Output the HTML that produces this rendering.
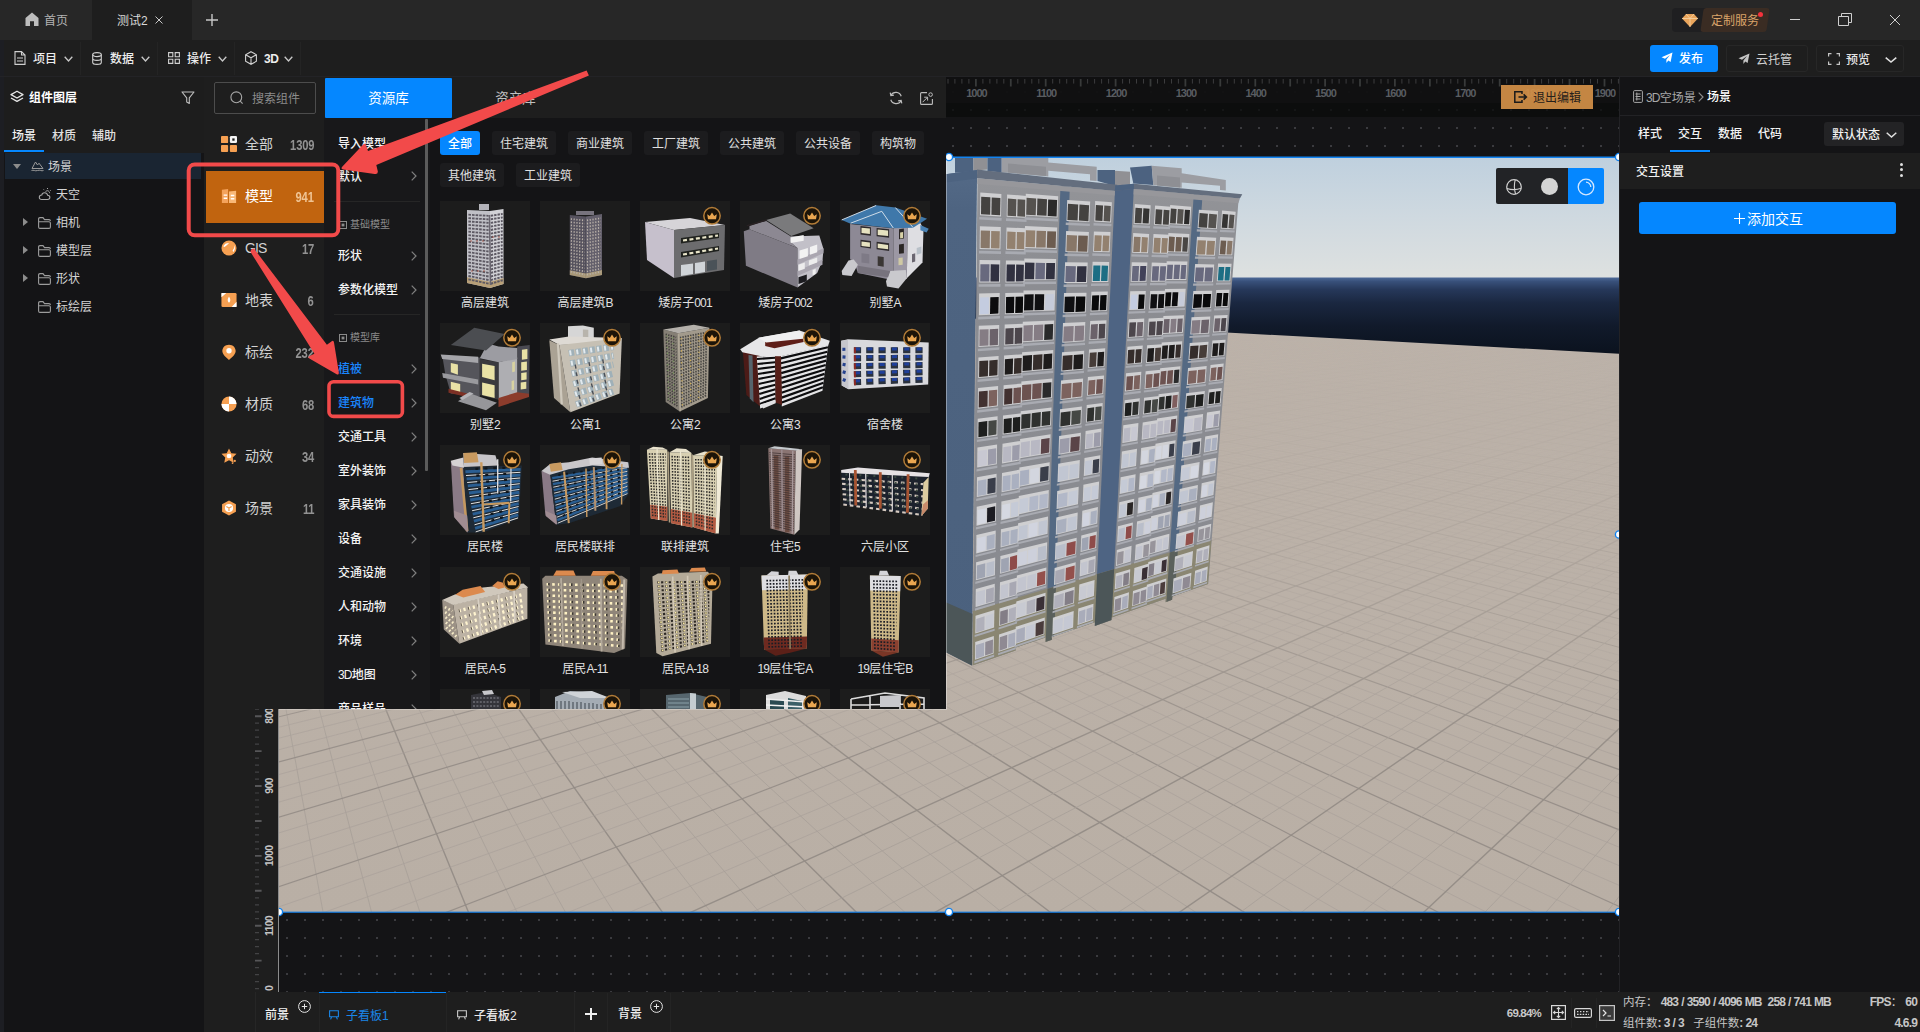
<!DOCTYPE html>
<html lang="zh-CN"><head><meta charset="utf-8"><title>测试2</title>
<style>
*{box-sizing:border-box;margin:0;padding:0}
html,body{width:1920px;height:1032px;overflow:hidden;background:#141416;}
body{font-family:"Liberation Sans","Noto Sans CJK SC",sans-serif;font-size:12px;color:#e6e6e6;position:relative;-webkit-font-smoothing:antialiased}
div{position:absolute}
.t{white-space:nowrap}
svg{overflow:visible}
.n{letter-spacing:-0.8px}
.s{font-weight:700;font-size:12px;letter-spacing:-0.85px;word-spacing:0.5px}
</style></head>
<body>
<div style="left:255px;top:77px;width:1364px;height:915px;background-color:#141416;background-image:radial-gradient(circle, #3c3c40 0.7px, rgba(0,0,0,0) 1.1px);background-size:18px 18px;background-position:5px 6px"></div>
<svg style="position:absolute;left:0;top:0" width="1920" height="1032" viewBox="0 0 1920 1032"><defs><linearGradient id="sky" x1="0" y1="0" x2="0" y2="1"><stop offset="0" stop-color="#bfd0de"/><stop offset="0.5" stop-color="#cfd9e0"/><stop offset="1" stop-color="#dee1e0"/></linearGradient><linearGradient id="sea" x1="0" y1="0" x2="0" y2="1"><stop offset="0" stop-color="#4e6a98"/><stop offset="0.05" stop-color="#38507a"/><stop offset="0.15" stop-color="#26385a"/><stop offset="0.32" stop-color="#1a2740"/><stop offset="0.6" stop-color="#111a2b"/><stop offset="1" stop-color="#0a111c"/></linearGradient><linearGradient id="gnd" x1="0" y1="0" x2="0" y2="1"><stop offset="0" stop-color="#bdb3aa"/><stop offset="1" stop-color="#b9afa5"/></linearGradient><clipPath id="sc"><rect x="279" y="157" width="1340" height="755"/></clipPath></defs><g clip-path="url(#sc)"><rect x="279" y="157" width="1340" height="121" fill="url(#sky)"/><rect x="279" y="277.5" width="1340" height="80" fill="url(#sea)"/><polygon points="279.0,281.0 1620.0,353.8 1620.0,913.0 279.0,913.0" fill="url(#gnd)"/><clipPath id="gc"><polygon points="279.0,282.0 1620.0,354.8 1620.0,913.0 279.0,913.0" fill="#000"/></clipPath><linearGradient id="gm" gradientUnits="userSpaceOnUse" x1="0" y1="320" x2="0" y2="760"><stop offset="0" stop-color="#fff" stop-opacity="0.02"/><stop offset="0.2" stop-color="#fff" stop-opacity="0.09"/><stop offset="0.45" stop-color="#fff" stop-opacity="0.25"/><stop offset="0.7" stop-color="#fff" stop-opacity="0.55"/><stop offset="1" stop-color="#fff" stop-opacity="1"/></linearGradient><mask id="gk" maskUnits="userSpaceOnUse" x="279" y="300" width="1340" height="620"><rect x="279" y="300" width="1340" height="620" fill="url(#gm)"/></mask><g clip-path="url(#gc)"><g mask="url(#gk)"><path d="M208.7 300.0L274.7 913.5M218.9 300.0L469.0 913.5M229.1 300.0L663.3 913.5M239.3 300.0L857.6 913.5M249.5 300.0L1051.9 913.5M259.7 300.0L1246.2 913.5" stroke="#938c86" stroke-width="1.4" stroke-opacity="0.95" fill="none"/><path d="M211.2 300.0L323.3 913.5M213.8 300.0L371.9 913.5M216.3 300.0L420.4 913.5M221.4 300.0L517.6 913.5M224.0 300.0L566.2 913.5M226.5 300.0L614.7 913.5M231.6 300.0L711.9 913.5M234.2 300.0L760.5 913.5M236.7 300.0L809.0 913.5M241.8 300.0L906.2 913.5M244.4 300.0L954.8 913.5M246.9 300.0L1003.3 913.5M252.0 300.0L1100.5 913.5M254.6 300.0L1149.1 913.5M257.1 300.0L1197.6 913.5M262.2 300.0L1294.8 913.5" stroke="#a8a099" stroke-width="1.0" stroke-opacity="0.85" fill="none"/><path d="M264.8 300.0L1343.4 913.5M267.3 300.0L1391.9 913.5M272.4 300.0L1489.1 913.5M275.0 300.0L1537.7 913.5M277.5 300.0L1586.2 913.5M282.6 300.0L1683.4 913.5M285.2 300.0L1732.0 913.5M287.7 300.0L1780.5 913.5M292.8 300.0L1877.7 913.5M295.4 300.0L1926.3 913.5M297.9 300.0L1974.8 913.5M303.0 300.0L2072.0 913.5M305.6 300.0L2120.6 913.5M308.1 300.0L2169.1 913.5M313.2 300.0L2266.3 913.5M315.8 300.0L2314.9 913.5M318.3 300.0L2363.4 913.5" stroke="#a8a099" stroke-width="0.9" stroke-opacity="0.75" fill="none"/><path d="M269.9 300.0L1440.5 913.5M280.1 300.0L1634.8 913.5M290.3 300.0L1829.1 913.5M300.5 300.0L2023.4 913.5M310.7 300.0L2217.7 913.5M320.9 300.0L2412.0 913.5" stroke="#938c86" stroke-width="1.2" stroke-opacity="0.9" fill="none"/><path d="M323.4 300.0L2460.6 913.5M326.0 300.0L2509.2 913.5M328.5 300.0L2557.7 913.5M333.6 300.0L2654.9 913.5M336.2 300.0L2703.5 913.5M338.7 300.0L2752.0 913.5M343.8 300.0L2849.2 913.5M346.4 300.0L2897.8 913.5M348.9 300.0L2946.3 913.5M354.0 300.0L3043.5 913.5M356.6 300.0L3092.1 913.5M359.1 300.0L3140.6 913.5M364.3 300.0L3237.8 913.5M366.8 300.0L3286.4 913.5M369.4 300.0L3334.9 913.5M374.5 300.0L3432.1 913.5M377.0 300.0L3480.7 913.5M379.6 300.0L3529.2 913.5M384.7 300.0L3626.4 913.5M387.2 300.0L3675.0 913.5M389.8 300.0L3723.5 913.5M394.9 300.0L3820.7 913.5M397.4 300.0L3869.3 913.5M400.0 300.0L3917.8 913.5M405.1 300.0L4015.0 913.5M407.6 300.0L4063.6 913.5M410.2 300.0L4112.1 913.5M415.3 300.0L4209.3 913.5M417.8 300.0L4257.9 913.5M420.4 300.0L4306.4 913.5M425.5 300.0L4403.6 913.5" stroke="#a8a099" stroke-width="0.8" stroke-opacity="0.6" fill="none"/><path d="M331.1 300.0L2606.3 913.5M341.3 300.0L2800.6 913.5M351.5 300.0L2994.9 913.5M361.7 300.0L3189.2 913.5M371.9 300.0L3383.5 913.5M382.1 300.0L3577.8 913.5M392.3 300.0L3772.1 913.5M402.5 300.0L3966.4 913.5M412.7 300.0L4160.7 913.5M422.9 300.0L4355.0 913.5" stroke="#938c86" stroke-width="1.0" stroke-opacity="0.8" fill="none"/><path d="M428.0 300.0L4452.2 913.5M430.6 300.0L4500.7 913.5M435.7 300.0L4597.9 913.5M438.2 300.0L4646.5 913.5M440.8 300.0L4695.0 913.5M445.9 300.0L4792.2 913.5M448.4 300.0L4840.8 913.5M451.0 300.0L4889.3 913.5M456.1 300.0L4986.5 913.5M458.6 300.0L5035.1 913.5M461.2 300.0L5083.6 913.5M466.3 300.0L5180.8 913.5M468.8 300.0L5229.4 913.5M471.4 300.0L5277.9 913.5M476.5 300.0L5375.1 913.5M479.0 300.0L5423.7 913.5M481.6 300.0L5472.2 913.5M486.7 300.0L5569.4 913.5M489.2 300.0L5618.0 913.5M491.8 300.0L5666.5 913.5M496.9 300.0L5763.7 913.5M499.4 300.0L5812.3 913.5M502.0 300.0L5860.8 913.5M507.1 300.0L5958.0 913.5M509.6 300.0L6006.6 913.5M512.2 300.0L6055.1 913.5M517.3 300.0L6152.3 913.5M519.8 300.0L6200.9 913.5M522.4 300.0L6249.4 913.5M527.5 300.0L6346.6 913.5M530.0 300.0L6395.2 913.5M532.6 300.0L6443.7 913.5" stroke="#a8a099" stroke-width="0.7" stroke-opacity="0.4" fill="none"/><path d="M433.1 300.0L4549.3 913.5M443.3 300.0L4743.6 913.5M453.5 300.0L4937.9 913.5M463.7 300.0L5132.2 913.5M473.9 300.0L5326.5 913.5M484.1 300.0L5520.8 913.5M494.3 300.0L5715.1 913.5M504.5 300.0L5909.4 913.5M514.7 300.0L6103.7 913.5M524.9 300.0L6298.0 913.5M535.1 300.0L6492.3 913.5M545.3 300.0L6686.6 913.5M555.6 300.0L6880.9 913.5M565.8 300.0L7075.2 913.5M576.0 300.0L7269.5 913.5M586.2 300.0L7463.8 913.5M596.4 300.0L7658.1 913.5M606.6 300.0L7852.4 913.5M616.8 300.0L8046.7 913.5M627.0 300.0L8241.0 913.5M637.2 300.0L8435.3 913.5M647.4 300.0L8629.6 913.5M657.6 300.0L8823.9 913.5M667.8 300.0L9018.2 913.5M678.0 300.0L9212.5 913.5M688.2 300.0L9406.8 913.5M698.4 300.0L9601.1 913.5M708.6 300.0L9795.4 913.5M718.8 300.0L9989.7 913.5M729.0 300.0L10184.0 913.5M739.2 300.0L10378.3 913.5M749.4 300.0L10572.6 913.5M759.6 300.0L10766.9 913.5M769.8 300.0L10961.2 913.5M780.0 300.0L11155.5 913.5M790.2 300.0L11349.8 913.5M800.4 300.0L11544.1 913.5M810.6 300.0L11738.4 913.5M820.8 300.0L11932.7 913.5M831.0 300.0L12127.0 913.5M841.2 300.0L12321.3 913.5M851.4 300.0L12515.6 913.5M861.6 300.0L12709.9 913.5M871.8 300.0L12904.2 913.5M882.0 300.0L13098.5 913.5M892.2 300.0L13292.8 913.5M902.4 300.0L13487.1 913.5M912.6 300.0L13681.4 913.5M922.8 300.0L13875.7 913.5M933.0 300.0L14070.0 913.5M943.3 300.0L14264.3 913.5M953.5 300.0L14458.6 913.5M963.7 300.0L14652.9 913.5M973.9 300.0L14847.2 913.5M984.1 300.0L15041.5 913.5M994.3 300.0L15235.8 913.5M1004.5 300.0L15430.1 913.5M1014.7 300.0L15624.4 913.5M1024.9 300.0L15818.7 913.5M1035.1 300.0L16013.0 913.5M1045.3 300.0L16207.3 913.5M1055.5 300.0L16401.6 913.5M1065.7 300.0L16595.9 913.5M1075.9 300.0L16790.2 913.5M1086.1 300.0L16984.5 913.5M1096.3 300.0L17178.8 913.5M1106.5 300.0L17373.1 913.5M1116.7 300.0L17567.4 913.5M1126.9 300.0L17761.7 913.5M1137.1 300.0L17956.0 913.5M1147.3 300.0L18150.3 913.5M1157.5 300.0L18344.6 913.5M1167.7 300.0L18538.9 913.5M1177.9 300.0L18733.2 913.5M1188.1 300.0L18927.5 913.5M1198.3 300.0L19121.8 913.5M1208.5 300.0L19316.1 913.5M1218.7 300.0L19510.4 913.5M1228.9 300.0L19704.7 913.5" stroke="#938c86" stroke-width="0.9" stroke-opacity="0.7" fill="none"/><path d="M1173.3 300.0L-23544.1 913.5M1182.2 300.0L-23299.3 913.5M1191.0 300.0L-23054.5 913.5M1199.9 300.0L-22809.8 913.5M1208.7 300.0L-22565.0 913.5M1217.6 300.0L-22320.2 913.5M1226.4 300.0L-22075.5 913.5M1235.3 300.0L-21830.7 913.5M1244.1 300.0L-21585.9 913.5M1253.0 300.0L-21341.2 913.5M1261.8 300.0L-21096.4 913.5M1270.6 300.0L-20851.6 913.5M1279.5 300.0L-20606.8 913.5M1288.3 300.0L-20362.1 913.5M1297.2 300.0L-20117.3 913.5M1306.0 300.0L-19872.5 913.5M1314.9 300.0L-19627.8 913.5M1323.7 300.0L-19383.0 913.5M1332.6 300.0L-19138.2 913.5M1341.4 300.0L-18893.5 913.5M1350.2 300.0L-18648.7 913.5M1359.1 300.0L-18403.9 913.5M1367.9 300.0L-18159.2 913.5M1376.8 300.0L-17914.4 913.5M1385.6 300.0L-17669.6 913.5M1394.5 300.0L-17424.9 913.5M1403.3 300.0L-17180.1 913.5M1412.2 300.0L-16935.3 913.5M1421.0 300.0L-16690.5 913.5M1429.8 300.0L-16445.8 913.5M1438.7 300.0L-16201.0 913.5M1447.5 300.0L-15956.2 913.5M1456.4 300.0L-15711.5 913.5M1465.2 300.0L-15466.7 913.5M1474.1 300.0L-15221.9 913.5M1482.9 300.0L-14977.2 913.5M1491.8 300.0L-14732.4 913.5M1500.6 300.0L-14487.6 913.5M1509.4 300.0L-14242.9 913.5M1518.3 300.0L-13998.1 913.5M1527.1 300.0L-13753.3 913.5M1536.0 300.0L-13508.5 913.5M1544.8 300.0L-13263.8 913.5M1553.7 300.0L-13019.0 913.5M1562.5 300.0L-12774.2 913.5M1571.4 300.0L-12529.5 913.5M1580.2 300.0L-12284.7 913.5M1589.1 300.0L-12039.9 913.5M1597.9 300.0L-11795.2 913.5M1606.7 300.0L-11550.4 913.5M1615.6 300.0L-11305.6 913.5M1624.4 300.0L-11060.9 913.5M1633.3 300.0L-10816.1 913.5M1642.1 300.0L-10571.3 913.5M1651.0 300.0L-10326.5 913.5M1659.8 300.0L-10081.8 913.5M1668.7 300.0L-9837.0 913.5M1677.5 300.0L-9592.2 913.5M1686.3 300.0L-9347.5 913.5M1695.2 300.0L-9102.7 913.5M1704.0 300.0L-8857.9 913.5M1712.9 300.0L-8613.2 913.5M1721.7 300.0L-8368.4 913.5M1730.6 300.0L-8123.6 913.5M1739.4 300.0L-7878.9 913.5M1748.3 300.0L-7634.1 913.5M1757.1 300.0L-7389.3 913.5M1765.9 300.0L-7144.5 913.5M1774.8 300.0L-6899.8 913.5M1783.6 300.0L-6655.0 913.5M1792.5 300.0L-6410.2 913.5M1801.3 300.0L-6165.5 913.5M1810.2 300.0L-5920.7 913.5M1819.0 300.0L-5675.9 913.5M1827.9 300.0L-5431.2 913.5M1836.7 300.0L-5186.4 913.5M1845.6 300.0L-4941.6 913.5M1854.4 300.0L-4696.9 913.5M1863.2 300.0L-4452.1 913.5M1872.1 300.0L-4207.3 913.5M1880.9 300.0L-3962.5 913.5M1889.8 300.0L-3717.8 913.5M1898.6 300.0L-3473.0 913.5" stroke="#938c86" stroke-width="0.9" stroke-opacity="0.7" fill="none"/><path d="M1808.0 300.0L-5981.9 913.5M1812.4 300.0L-5859.5 913.5M1814.6 300.0L-5798.3 913.5M1816.8 300.0L-5737.1 913.5M1821.2 300.0L-5614.7 913.5M1823.4 300.0L-5553.5 913.5M1825.6 300.0L-5492.4 913.5M1830.1 300.0L-5370.0 913.5M1832.3 300.0L-5308.8 913.5M1834.5 300.0L-5247.6 913.5M1838.9 300.0L-5125.2 913.5M1841.1 300.0L-5064.0 913.5M1843.3 300.0L-5002.8 913.5M1847.8 300.0L-4880.4 913.5M1850.0 300.0L-4819.2 913.5M1852.2 300.0L-4758.0 913.5M1856.6 300.0L-4635.7 913.5M1858.8 300.0L-4574.5 913.5M1861.0 300.0L-4513.3 913.5M1865.5 300.0L-4390.9 913.5M1867.7 300.0L-4329.7 913.5M1869.9 300.0L-4268.5 913.5M1874.3 300.0L-4146.1 913.5M1876.5 300.0L-4084.9 913.5M1878.7 300.0L-4023.7 913.5M1883.1 300.0L-3901.4 913.5M1885.4 300.0L-3840.2 913.5M1887.6 300.0L-3779.0 913.5M1892.0 300.0L-3656.6 913.5M1894.2 300.0L-3595.4 913.5M1896.4 300.0L-3534.2 913.5M1900.8 300.0L-3411.8 913.5M1903.0 300.0L-3350.6 913.5" stroke="#a8a099" stroke-width="0.7" stroke-opacity="0.4" fill="none"/><path d="M1905.3 300.0L-3289.4 913.5M1909.7 300.0L-3167.1 913.5M1911.9 300.0L-3105.9 913.5M1914.1 300.0L-3044.7 913.5M1918.5 300.0L-2922.3 913.5M1920.7 300.0L-2861.1 913.5M1922.9 300.0L-2799.9 913.5M1927.4 300.0L-2677.5 913.5M1929.6 300.0L-2616.3 913.5M1931.8 300.0L-2555.1 913.5M1936.2 300.0L-2432.7 913.5M1938.4 300.0L-2371.6 913.5M1940.6 300.0L-2310.4 913.5M1945.1 300.0L-2188.0 913.5M1947.3 300.0L-2126.8 913.5M1949.5 300.0L-2065.6 913.5M1953.9 300.0L-1943.2 913.5M1956.1 300.0L-1882.0 913.5M1958.3 300.0L-1820.8 913.5M1962.7 300.0L-1698.4 913.5M1965.0 300.0L-1637.2 913.5M1967.2 300.0L-1576.1 913.5M1971.6 300.0L-1453.7 913.5M1973.8 300.0L-1392.5 913.5M1976.0 300.0L-1331.3 913.5M1980.4 300.0L-1208.9 913.5M1982.6 300.0L-1147.7 913.5M1984.9 300.0L-1086.5 913.5M1989.3 300.0L-964.1 913.5M1991.5 300.0L-902.9 913.5M1993.7 300.0L-841.7 913.5" stroke="#a8a099" stroke-width="0.8" stroke-opacity="0.6" fill="none"/><path d="M1907.5 300.0L-3228.2 913.5M1916.3 300.0L-2983.5 913.5M1925.2 300.0L-2738.7 913.5M1934.0 300.0L-2493.9 913.5M1942.8 300.0L-2249.2 913.5M1951.7 300.0L-2004.4 913.5M1960.5 300.0L-1759.6 913.5M1969.4 300.0L-1514.9 913.5M1978.2 300.0L-1270.1 913.5M1987.1 300.0L-1025.3 913.5" stroke="#938c86" stroke-width="1.0" stroke-opacity="0.8" fill="none"/><path d="M1995.9 300.0L-780.6 913.5M2004.8 300.0L-535.8 913.5M2013.6 300.0L-291.0 913.5M2022.4 300.0L-46.2 913.5M2031.3 300.0L198.5 913.5M2040.1 300.0L443.3 913.5" stroke="#938c86" stroke-width="1.2" stroke-opacity="0.9" fill="none"/><path d="M1998.1 300.0L-719.4 913.5M2000.3 300.0L-658.2 913.5M2002.5 300.0L-597.0 913.5M2007.0 300.0L-474.6 913.5M2009.2 300.0L-413.4 913.5M2011.4 300.0L-352.2 913.5M2015.8 300.0L-229.8 913.5M2018.0 300.0L-168.6 913.5M2020.2 300.0L-107.4 913.5M2024.7 300.0L14.9 913.5M2026.9 300.0L76.1 913.5M2029.1 300.0L137.3 913.5M2033.5 300.0L259.7 913.5M2035.7 300.0L320.9 913.5M2037.9 300.0L382.1 913.5M2042.3 300.0L504.5 913.5M2044.6 300.0L565.7 913.5M2046.8 300.0L626.9 913.5" stroke="#a8a099" stroke-width="0.9" stroke-opacity="0.75" fill="none"/><path d="M2049.0 300.0L688.1 913.5M2057.8 300.0L932.8 913.5M2066.7 300.0L1177.6 913.5M2075.5 300.0L1422.4 913.5" stroke="#938c86" stroke-width="1.4" stroke-opacity="0.95" fill="none"/><path d="M2051.2 300.0L749.3 913.5M2053.4 300.0L810.4 913.5M2055.6 300.0L871.6 913.5M2060.0 300.0L994.0 913.5M2062.2 300.0L1055.2 913.5M2064.5 300.0L1116.4 913.5M2068.9 300.0L1238.8 913.5M2071.1 300.0L1300.0 913.5M2073.3 300.0L1361.2 913.5M2077.7 300.0L1483.6 913.5M2079.9 300.0L1544.8 913.5M2082.1 300.0L1605.9 913.5" stroke="#a8a099" stroke-width="1.0" stroke-opacity="0.85" fill="none"/></g></g><polygon points="955.0,157.0 973.3,157.0 973.3,171.7 955.0,172.8" fill="#4d6380"/><polygon points="973.3,157.0 987.5,157.0 987.5,169.5 973.3,170.8" fill="#909094"/><polygon points="987.5,157.0 1001.7,157.0 1001.7,172.5 987.5,171.0" fill="#4c6280"/><polygon points="1001.7,157.0 1048.3,157.0 1048.3,162.5 1096.7,166.7 1096.7,181.0 1090.0,180.4 1090.0,174.2 1048.3,170.8 1048.3,176.4 1009.0,172.8 1001.7,172.5" fill="#9c9da2"/><polygon points="1008.0,163.5 1046.0,166.8 1046.0,176.0 1008.0,172.6" fill="#8e8f94"/><polygon points="1097.5,170.0 1115.0,170.0 1115.0,186.0 1097.5,181.0" fill="#4d6380"/><polygon points="1115.0,170.8 1130.0,171.7 1130.0,184.0 1115.0,186.0" fill="#909094"/><polygon points="1130.0,167.5 1151.7,165.8 1153.3,185.0 1133.3,183.5" fill="#4c6280"/><polygon points="1151.7,165.8 1181.7,168.3 1181.7,173.3 1225.8,180.0 1225.8,190.4 1220.0,190.0 1220.0,185.8 1181.7,182.5 1181.7,187.8 1158.3,185.6 1153.3,185.0" fill="#9c9da2"/><polygon points="1157.0,175.5 1180.0,177.5 1180.0,187.6 1157.0,185.4" fill="#8e8f94"/><linearGradient id="sg" x1="0" y1="0" x2="0" y2="1"><stop offset="0" stop-color="#546a87"/><stop offset="0.08" stop-color="#4e6481"/><stop offset="1" stop-color="#4b617e"/></linearGradient><polygon points="940.0,175.1 977.1,170.0 971.9,665.5 940.0,649.3" fill="url(#sg)"/><polygon points="940.0,599.7 972.5,614.0 971.9,665.5 940.0,649.3" fill="#4c5658"/><polygon points="940.0,175.1 977.1,170.0 977.0,178.5 940.0,183.2" fill="#4d6380"/><linearGradient id="wg" x1="0" y1="0" x2="0" y2="1"><stop offset="0" stop-color="#939498"/><stop offset="0.2" stop-color="#8c8d92"/><stop offset="1" stop-color="#888a90"/></linearGradient><polygon points="977.5,178.5 1114.9,190.6 1115.1,187.1 1238.7,198.0 1208.2,584.1 1172.3,596.5 1172.1,599.8 1165.5,602.2 1165.7,598.8 1111.7,617.4 1111.6,620.0 1094.7,625.9 1094.9,622.3 1051.9,637.0 1051.8,639.8 1045.3,642.1 1045.5,637.4 1015.8,647.5 1015.7,650.4 972.4,665.4" fill="url(#wg)"/><clipPath id="fc"><polygon points="977.5,178.5 1114.9,190.6 1115.1,187.1 1238.7,198.0 1208.2,584.1 1172.3,596.5 1172.1,599.8 1165.5,602.2 1165.7,598.8 1111.7,617.4 1111.6,620.0 1094.7,625.9 1094.9,622.3 1051.9,637.0 1051.8,639.8 1045.3,642.1 1045.5,637.4 1015.8,647.5 1015.7,650.4 972.4,665.4" fill="#000"/></clipPath><g clip-path="url(#fc)"><polygon points="972.9,610.9 1211.7,540.1 1207.6,592.2 972.3,675.3" fill="#8a8672"/><polygon points="1116.1,165.7 1134.9,167.8 1114.2,569.0 1097.1,574.1" fill="#4e6483"/><polygon points="1097.1,574.1 1114.2,569.0 1111.3,626.2 1094.4,632.2" fill="#4c5658"/><polygon points="1061.3,159.5 1070.7,160.6 1056.0,586.3 1047.5,588.8" fill="#546983"/><polygon points="1047.5,588.8 1056.0,586.3 1053.9,646.5 1045.5,649.5" fill="#5a605c"/><polygon points="1195.1,174.6 1203.9,175.6 1177.9,550.2 1169.7,552.6" fill="#546983"/><polygon points="1169.7,552.6 1177.9,550.2 1174.1,604.0 1166.1,606.9" fill="#5a605c"/><polygon points="980.3,192.4 1001.4,194.0 1001.0,216.4 980.0,215.2" fill="#cfcfd1"/><polygon points="979.4,216.9 1001.6,218.0 1001.5,220.7 979.3,219.6" fill="#a9abb2"/><polygon points="981.2,196.7 990.4,197.3 990.2,214.8 981.0,214.2" fill="#444240"/><polygon points="991.7,197.4 1000.4,198.0 1000.1,215.3 991.4,214.8" fill="#444240"/><polygon points="1007.1,194.4 1026.5,195.9 1026.0,217.7 1006.7,216.7" fill="#cfcfd1"/><polygon points="1006.0,218.3 1026.5,219.4 1026.5,222.0 1006.0,220.9" fill="#a9abb2"/><polygon points="1007.9,198.6 1016.4,199.2 1016.0,216.2 1007.6,215.7" fill="#55524f"/><polygon points="1017.6,199.3 1025.4,199.8 1025.1,216.7 1017.3,216.3" fill="#55524f"/><polygon points="1025.8,193.7 1058.2,196.2 1057.5,217.4 1025.3,215.6" fill="#cfcfd1"/><polygon points="1024.6,217.2 1058.1,219.0 1058.0,221.5 1024.6,219.8" fill="#a9abb2"/><polygon points="1026.6,197.8 1036.2,198.5 1035.7,215.2 1026.2,214.7" fill="#55524f"/><polygon points="1037.4,198.6 1047.0,199.3 1046.5,215.8 1037.0,215.3" fill="#444240"/><polygon points="1048.2,199.4 1057.1,200.1 1056.6,216.4 1047.7,215.9" fill="#2b2a2a"/><polygon points="1067.2,199.9 1090.2,201.6 1089.3,222.1 1066.5,220.9" fill="#cfcfd1"/><polygon points="1065.8,222.4 1089.9,223.7 1089.8,226.1 1065.7,224.9" fill="#a9abb2"/><polygon points="1068.0,203.8 1078.2,204.5 1077.6,220.6 1067.4,220.0" fill="#444240"/><polygon points="1079.5,204.6 1089.1,205.3 1088.4,221.2 1078.9,220.6" fill="#444240"/><polygon points="1095.2,201.1 1111.9,202.3 1111.0,222.4 1094.3,221.5" fill="#cfcfd1"/><polygon points="1093.6,223.0 1111.5,223.9 1111.4,226.3 1093.5,225.4" fill="#a9abb2"/><polygon points="1095.9,204.9 1103.1,205.4 1102.4,221.0 1095.3,220.6" fill="#444240"/><polygon points="1104.3,205.5 1110.8,206.0 1110.1,221.5 1103.6,221.1" fill="#55524f"/><polygon points="1134.8,204.0 1150.7,205.2 1149.6,224.6 1133.7,223.7" fill="#cfcfd1"/><polygon points="1133.0,225.1 1150.1,226.0 1150.0,228.3 1132.9,227.4" fill="#a9abb2"/><polygon points="1135.5,207.7 1142.2,208.2 1141.4,223.2 1134.7,222.9" fill="#444240"/><polygon points="1143.4,208.3 1149.5,208.8 1148.7,223.6 1142.6,223.3" fill="#353433"/><polygon points="1155.1,205.6 1170.8,206.8 1169.6,225.7 1154.0,224.8" fill="#cfcfd1"/><polygon points="1153.3,226.2 1170.1,227.1 1170.0,229.3 1153.2,228.5" fill="#a9abb2"/><polygon points="1155.8,209.2 1162.4,209.7 1161.5,224.4 1155.0,224.0" fill="#444240"/><polygon points="1163.7,209.8 1169.6,210.2 1168.7,224.8 1162.8,224.4" fill="#444240"/><polygon points="1170.2,205.1 1191.2,206.7 1190.0,225.2 1169.0,224.0" fill="#cfcfd1"/><polygon points="1168.3,225.3 1190.5,226.6 1190.3,228.8 1168.2,227.6" fill="#a9abb2"/><polygon points="1170.9,208.6 1176.6,209.1 1175.7,223.5 1170.0,223.2" fill="#444240"/><polygon points="1177.9,209.1 1183.7,209.6 1182.7,223.9 1177.0,223.6" fill="#55524f"/><polygon points="1184.9,209.7 1190.0,210.0 1189.1,224.3 1184.0,224.0" fill="#2b2a2a"/><polygon points="1198.9,209.7 1218.1,211.1 1216.8,229.0 1197.6,228.0" fill="#cfcfd1"/><polygon points="1196.9,229.3 1217.3,230.4 1217.2,232.5 1196.7,231.5" fill="#a9abb2"/><polygon points="1199.6,213.1 1207.9,213.7 1207.0,227.7 1198.6,227.2" fill="#444240"/><polygon points="1209.2,213.8 1217.0,214.4 1215.9,228.2 1208.2,227.8" fill="#55524f"/><polygon points="1222.1,210.6 1235.7,211.7 1234.3,229.2 1220.8,228.5" fill="#cfcfd1"/><polygon points="1220.0,229.8 1234.8,230.6 1234.6,232.6 1219.9,231.9" fill="#a9abb2"/><polygon points="1222.8,214.0 1228.3,214.4 1227.3,228.0 1221.7,227.7" fill="#353433"/><polygon points="1229.6,214.5 1234.5,214.9 1233.4,228.4 1228.5,228.1" fill="#55524f"/><polygon points="979.9,226.2 1000.8,227.1 1000.4,249.5 979.6,249.0" fill="#cfcfd1"/><polygon points="979.0,250.7 1001.0,251.2 1001.0,253.9 979.0,253.4" fill="#a9abb2"/><polygon points="980.8,230.4 990.0,230.8 989.7,248.3 980.6,248.0" fill="#887768"/><polygon points="991.2,230.9 999.8,231.2 999.5,248.5 991.0,248.3" fill="#93816f"/><polygon points="1006.5,227.4 1025.7,228.3 1025.2,250.1 1006.1,249.7" fill="#cfcfd1"/><polygon points="1005.4,251.3 1025.8,251.8 1025.7,254.4 1005.4,253.9" fill="#a9abb2"/><polygon points="1007.3,231.6 1015.7,231.9 1015.3,248.9 1007.0,248.7" fill="#93816f"/><polygon points="1016.9,232.0 1024.7,232.3 1024.3,249.2 1016.6,249.0" fill="#93816f"/><polygon points="1025.0,226.1 1057.2,227.6 1056.5,248.9 1024.5,248.0" fill="#cfcfd1"/><polygon points="1023.9,249.6 1057.1,250.5 1057.0,253.0 1023.8,252.2" fill="#a9abb2"/><polygon points="1025.9,230.2 1035.3,230.6 1034.9,247.3 1025.5,247.1" fill="#93816f"/><polygon points="1036.6,230.7 1046.0,231.1 1045.6,247.6 1036.1,247.4" fill="#887768"/><polygon points="1047.3,231.2 1056.1,231.5 1055.6,247.9 1046.8,247.7" fill="#6c5c50"/><polygon points="1066.1,231.0 1088.9,232.0 1088.1,252.6 1065.4,252.1" fill="#cfcfd1"/><polygon points="1064.7,253.6 1088.7,254.2 1088.6,256.6 1064.6,256.1" fill="#a9abb2"/><polygon points="1066.9,235.0 1077.1,235.4 1076.5,251.4 1066.4,251.2" fill="#887768"/><polygon points="1078.3,235.4 1087.9,235.8 1087.2,251.7 1077.7,251.4" fill="#6c5c50"/><polygon points="1093.9,231.4 1110.5,232.1 1109.6,252.3 1093.1,251.8" fill="#cfcfd1"/><polygon points="1092.4,253.3 1110.2,253.8 1110.1,256.2 1092.3,255.8" fill="#a9abb2"/><polygon points="1094.7,235.2 1101.8,235.5 1101.1,251.1 1094.0,251.0" fill="#93816f"/><polygon points="1103.0,235.5 1109.5,235.8 1108.7,251.3 1102.3,251.2" fill="#93816f"/><polygon points="1133.2,233.1 1149.1,233.9 1148.0,253.2 1132.2,252.8" fill="#cfcfd1"/><polygon points="1131.5,254.3 1148.5,254.7 1148.4,257.0 1131.4,256.6" fill="#a9abb2"/><polygon points="1134.0,236.8 1140.6,237.1 1139.8,252.1 1133.2,252.0" fill="#887768"/><polygon points="1141.9,237.1 1147.9,237.4 1147.1,252.3 1141.1,252.2" fill="#93816f"/><polygon points="1153.5,234.1 1169.1,234.8 1167.9,253.7 1152.4,253.3" fill="#cfcfd1"/><polygon points="1151.7,254.7 1168.4,255.1 1168.3,257.4 1151.5,257.0" fill="#a9abb2"/><polygon points="1154.2,237.7 1160.7,237.9 1159.9,252.7 1153.3,252.5" fill="#93816f"/><polygon points="1162.0,238.0 1167.9,238.2 1167.0,252.8 1161.1,252.7" fill="#93816f"/><polygon points="1168.4,233.1 1189.4,234.1 1188.1,252.6 1167.3,252.0" fill="#cfcfd1"/><polygon points="1166.6,253.4 1188.7,254.0 1188.5,256.2 1166.4,255.7" fill="#a9abb2"/><polygon points="1169.1,236.6 1174.9,236.9 1174.0,251.4 1168.3,251.2" fill="#6c5c50"/><polygon points="1176.1,236.9 1181.9,237.2 1180.9,251.6 1175.2,251.4" fill="#6c5c50"/><polygon points="1183.1,237.2 1188.2,237.5 1187.3,251.7 1182.2,251.6" fill="#494644"/><polygon points="1197.0,236.8 1216.2,237.7 1214.8,255.7 1195.7,255.2" fill="#cfcfd1"/><polygon points="1195.0,256.6 1215.3,257.0 1215.2,259.2 1194.9,258.7" fill="#a9abb2"/><polygon points="1197.7,240.3 1206.0,240.6 1205.0,254.6 1196.7,254.4" fill="#93816f"/><polygon points="1207.3,240.7 1215.0,241.0 1214.0,254.8 1206.3,254.7" fill="#93816f"/><polygon points="1220.1,237.1 1233.6,237.7 1232.2,255.3 1218.8,255.0" fill="#cfcfd1"/><polygon points="1218.1,256.3 1232.8,256.6 1232.6,258.7 1217.9,258.4" fill="#a9abb2"/><polygon points="1220.8,240.4 1226.3,240.7 1225.3,254.4 1219.7,254.2" fill="#6c5c50"/><polygon points="1227.5,240.7 1232.5,240.9 1231.4,254.5 1226.5,254.4" fill="#887768"/><polygon points="979.5,260.0 1000.2,260.3 999.9,282.4 979.3,282.5" fill="#cfcfd1"/><polygon points="978.6,284.2 1000.5,284.0 1000.4,286.7 978.6,286.8" fill="#a9abb2"/><polygon points="980.4,264.2 989.5,264.3 989.3,281.5 980.2,281.5" fill="#68697e"/><polygon points="990.7,264.3 999.3,264.4 999.0,281.4 990.5,281.5" fill="#313140"/><polygon points="1005.9,260.4 1025.0,260.7 1024.5,282.3 1005.5,282.4" fill="#cfcfd1"/><polygon points="1004.8,284.0 1025.0,283.9 1025.0,286.4 1004.8,286.6" fill="#a9abb2"/><polygon points="1006.7,264.5 1015.0,264.6 1014.7,281.4 1006.4,281.4" fill="#313140"/><polygon points="1016.2,264.6 1023.9,264.7 1023.6,281.3 1015.9,281.4" fill="#313140"/><polygon points="1024.3,258.6 1056.2,259.1 1055.5,280.1 1023.8,280.2" fill="#cfcfd1"/><polygon points="1023.1,281.8 1056.1,281.6 1056.0,284.1 1023.1,284.3" fill="#a9abb2"/><polygon points="1025.1,262.6 1034.5,262.7 1034.1,279.2 1024.7,279.2" fill="#313140"/><polygon points="1035.7,262.7 1045.1,262.9 1044.7,279.2 1035.3,279.2" fill="#68697e"/><polygon points="1046.3,262.9 1055.1,263.0 1054.6,279.2 1045.9,279.2" fill="#313140"/><polygon points="1065.1,262.2 1087.7,262.6 1086.9,282.9 1064.3,283.0" fill="#cfcfd1"/><polygon points="1063.7,284.6 1087.4,284.4 1087.3,286.8 1063.6,287.0" fill="#a9abb2"/><polygon points="1065.8,266.1 1075.9,266.2 1075.3,282.0 1065.3,282.1" fill="#68697e"/><polygon points="1077.2,266.2 1086.6,266.3 1086.0,282.0 1076.6,282.0" fill="#313140"/><polygon points="1092.6,261.7 1109.2,262.0 1108.3,281.9 1091.8,282.0" fill="#cfcfd1"/><polygon points="1091.1,283.5 1108.8,283.3 1108.7,285.7 1091.0,285.9" fill="#a9abb2"/><polygon points="1093.4,265.5 1100.4,265.6 1099.8,281.0 1092.8,281.1" fill="#1d6e84"/><polygon points="1101.7,265.6 1108.1,265.7 1107.4,281.0 1101.0,281.0" fill="#1d6e84"/><polygon points="1131.7,262.3 1147.4,262.6 1146.4,281.7 1130.7,281.8" fill="#cfcfd1"/><polygon points="1130.0,283.2 1146.9,283.1 1146.8,285.4 1129.9,285.5" fill="#a9abb2"/><polygon points="1132.5,265.9 1139.1,266.0 1138.3,280.9 1131.7,280.9" fill="#68697e"/><polygon points="1140.3,266.0 1146.3,266.1 1145.5,280.8 1139.5,280.9" fill="#424259"/><polygon points="1151.8,262.6 1167.3,262.9 1166.2,281.6 1150.7,281.7" fill="#cfcfd1"/><polygon points="1150.0,283.1 1166.7,283.0 1166.6,285.2 1149.9,285.3" fill="#a9abb2"/><polygon points="1152.5,266.2 1159.1,266.2 1158.2,280.8 1151.7,280.8" fill="#68697e"/><polygon points="1160.3,266.3 1166.2,266.3 1165.3,280.8 1159.4,280.8" fill="#68697e"/><polygon points="1166.7,261.2 1187.5,261.6 1186.3,279.9 1165.6,279.9" fill="#cfcfd1"/><polygon points="1164.9,281.3 1186.8,281.2 1186.7,283.4 1164.7,283.5" fill="#a9abb2"/><polygon points="1167.4,264.7 1173.1,264.8 1172.2,279.1 1166.5,279.1" fill="#68697e"/><polygon points="1174.4,264.8 1180.1,264.8 1179.1,279.1 1173.5,279.1" fill="#68697e"/><polygon points="1181.3,264.9 1186.4,264.9 1185.5,279.1 1180.4,279.1" fill="#68697e"/><polygon points="1195.1,264.1 1214.2,264.4 1212.9,282.2 1193.9,282.3" fill="#cfcfd1"/><polygon points="1193.2,283.6 1213.4,283.5 1213.2,285.6 1193.0,285.8" fill="#a9abb2"/><polygon points="1195.8,267.5 1204.1,267.6 1203.1,281.4 1194.8,281.4" fill="#68697e"/><polygon points="1205.3,267.6 1213.0,267.6 1212.0,281.4 1204.3,281.4" fill="#68697e"/><polygon points="1218.1,263.6 1231.6,263.8 1230.2,281.3 1216.8,281.3" fill="#cfcfd1"/><polygon points="1216.1,282.7 1230.7,282.6 1230.6,284.6 1215.9,284.8" fill="#a9abb2"/><polygon points="1218.8,266.9 1224.3,267.0 1223.3,280.5 1217.8,280.6" fill="#1d6e84"/><polygon points="1225.5,267.0 1230.4,267.1 1229.4,280.5 1224.5,280.5" fill="#1d6e84"/><polygon points="979.1,293.4 999.7,293.1 999.3,314.5 978.9,315.2" fill="#cfcfd1"/><polygon points="978.3,316.8 999.9,316.1 999.9,318.6 978.2,319.4" fill="#a9abb2"/><polygon points="980.0,297.4 989.0,297.2 988.8,313.9 979.8,314.2" fill="#c4cce0"/><polygon points="990.3,297.2 998.7,297.1 998.4,313.6 990.0,313.9" fill="#0c0c0e"/><polygon points="1005.3,293.0 1024.2,292.7 1023.7,313.7 1004.9,314.3" fill="#cfcfd1"/><polygon points="1004.2,315.9 1024.3,315.2 1024.2,317.7 1004.2,318.4" fill="#a9abb2"/><polygon points="1006.1,296.9 1014.3,296.8 1014.0,313.1 1005.8,313.3" fill="#0c0c0e"/><polygon points="1015.6,296.8 1023.2,296.6 1022.8,312.8 1015.2,313.0" fill="#0a0a0b"/><polygon points="1023.5,290.6 1055.2,290.2 1054.5,310.6 1023.1,311.6" fill="#cfcfd1"/><polygon points="1022.4,313.2 1055.1,312.1 1055.0,314.5 1022.4,315.6" fill="#a9abb2"/><polygon points="1024.4,294.5 1033.7,294.3 1033.3,310.3 1024.0,310.6" fill="#101012"/><polygon points="1034.9,294.3 1044.2,294.2 1043.8,310.0 1034.5,310.3" fill="#101012"/><polygon points="1045.4,294.2 1054.1,294.0 1053.7,309.7 1045.0,310.0" fill="#c6cbd9"/><polygon points="1064.0,293.1 1086.5,292.7 1085.7,312.5 1063.3,313.2" fill="#cfcfd1"/><polygon points="1062.7,314.8 1086.3,313.9 1086.2,316.2 1062.6,317.2" fill="#a9abb2"/><polygon points="1064.8,296.8 1074.8,296.6 1074.2,312.0 1064.3,312.3" fill="#101012"/><polygon points="1076.0,296.6 1085.4,296.4 1084.8,311.6 1075.4,311.9" fill="#0a0a0b"/><polygon points="1091.4,291.8 1107.8,291.5 1106.9,310.8 1090.6,311.4" fill="#cfcfd1"/><polygon points="1089.9,312.9 1107.5,312.2 1107.4,314.5 1089.8,315.2" fill="#a9abb2"/><polygon points="1092.2,295.4 1099.2,295.2 1098.5,310.3 1091.5,310.5" fill="#0a0a0b"/><polygon points="1100.4,295.2 1106.7,295.1 1106.1,310.0 1099.7,310.2" fill="#0a0a0b"/><polygon points="1130.2,291.2 1145.8,291.0 1144.8,309.5 1129.3,310.1" fill="#cfcfd1"/><polygon points="1128.6,311.5 1145.3,310.9 1145.2,313.1 1128.5,313.7" fill="#a9abb2"/><polygon points="1131.0,294.7 1137.5,294.5 1136.8,309.0 1130.2,309.2" fill="#c4cce0"/><polygon points="1138.8,294.5 1144.7,294.4 1143.9,308.7 1138.0,308.9" fill="#0a0a0b"/><polygon points="1150.2,290.9 1165.6,290.7 1164.5,308.9 1149.2,309.4" fill="#cfcfd1"/><polygon points="1148.5,310.8 1165.0,310.2 1164.9,312.4 1148.3,313.0" fill="#a9abb2"/><polygon points="1150.9,294.3 1157.4,294.2 1156.6,308.3 1150.1,308.5" fill="#101012"/><polygon points="1158.6,294.2 1164.5,294.1 1163.7,308.1 1157.8,308.3" fill="#101012"/><polygon points="1165.0,289.0 1185.7,288.7 1184.5,306.6 1163.9,307.2" fill="#cfcfd1"/><polygon points="1163.2,308.6 1185.0,307.9 1184.9,310.0 1163.1,310.8" fill="#a9abb2"/><polygon points="1165.7,292.4 1171.4,292.3 1170.5,306.2 1164.9,306.4" fill="#0a0a0b"/><polygon points="1172.6,292.3 1178.3,292.2 1177.4,306.0 1171.7,306.2" fill="#0c0c0e"/><polygon points="1179.5,292.1 1184.6,292.1 1183.7,305.8 1178.6,306.0" fill="#c6cbd9"/><polygon points="1193.3,291.1 1212.2,290.8 1211.0,308.1 1192.1,308.7" fill="#cfcfd1"/><polygon points="1191.4,310.1 1211.5,309.3 1211.3,311.4 1191.2,312.2" fill="#a9abb2"/><polygon points="1194.0,294.3 1202.2,294.2 1201.3,307.6 1193.0,307.9" fill="#0c0c0e"/><polygon points="1203.4,294.1 1211.1,294.0 1210.1,307.3 1202.5,307.6" fill="#0a0a0b"/><polygon points="1216.2,289.9 1229.5,289.7 1228.2,306.7 1214.9,307.2" fill="#cfcfd1"/><polygon points="1214.2,308.5 1228.7,307.9 1228.6,310.0 1214.0,310.5" fill="#a9abb2"/><polygon points="1216.8,293.1 1222.3,293.0 1221.3,306.2 1215.8,306.4" fill="#0c0c0e"/><polygon points="1223.5,293.0 1228.4,292.9 1227.4,306.0 1222.5,306.1" fill="#0a0a0b"/><polygon points="978.8,325.7 999.2,324.9 998.8,345.8 978.5,347.1" fill="#cfcfd1"/><polygon points="977.9,348.7 999.4,347.3 999.3,349.8 977.9,351.2" fill="#a9abb2"/><polygon points="979.6,329.6 988.6,329.2 988.4,345.5 979.4,346.1" fill="#857c84"/><polygon points="989.8,329.2 998.2,328.8 997.9,344.9 989.6,345.4" fill="#6b626a"/><polygon points="1004.7,324.6 1023.5,323.8 1023.0,344.3 1004.3,345.5" fill="#cfcfd1"/><polygon points="1003.7,347.0 1023.6,345.8 1023.5,348.2 1003.6,349.5" fill="#a9abb2"/><polygon points="1005.5,328.4 1013.7,328.0 1013.4,344.0 1005.2,344.5" fill="#4c464c"/><polygon points="1014.9,328.0 1022.5,327.6 1022.1,343.4 1014.6,343.9" fill="#4c464c"/><polygon points="1022.8,321.7 1054.2,320.4 1053.6,340.3 1022.3,342.2" fill="#cfcfd1"/><polygon points="1021.7,343.8 1054.1,341.8 1054.1,344.1 1021.7,346.2" fill="#a9abb2"/><polygon points="1023.6,325.5 1032.9,325.1 1032.5,340.7 1023.3,341.3" fill="#857c84"/><polygon points="1034.1,325.0 1043.3,324.6 1042.9,340.1 1033.7,340.6" fill="#857c84"/><polygon points="1044.6,324.5 1053.2,324.1 1052.7,339.5 1044.1,340.0" fill="#2a2a2b"/><polygon points="1063.0,323.0 1085.3,322.0 1084.5,341.3 1062.3,342.8" fill="#cfcfd1"/><polygon points="1061.7,344.3 1085.1,342.7 1085.0,345.0 1061.6,346.6" fill="#a9abb2"/><polygon points="1063.8,326.6 1073.7,326.1 1073.2,341.2 1063.2,341.8" fill="#857c84"/><polygon points="1074.9,326.1 1084.3,325.6 1083.7,340.5 1074.4,341.1" fill="#857c84"/><polygon points="1090.2,320.9 1106.5,320.2 1105.6,339.1 1089.4,340.1" fill="#cfcfd1"/><polygon points="1088.7,341.6 1106.2,340.5 1106.1,342.7 1088.6,343.9" fill="#a9abb2"/><polygon points="1091.0,324.4 1097.9,324.1 1097.3,338.8 1090.3,339.2" fill="#6b626a"/><polygon points="1099.1,324.0 1105.4,323.7 1104.8,338.3 1098.5,338.7" fill="#4c464c"/><polygon points="1128.8,319.2 1144.3,318.5 1143.3,336.8 1127.8,337.7" fill="#cfcfd1"/><polygon points="1127.1,339.1 1143.8,338.1 1143.7,340.2 1127.0,341.3" fill="#a9abb2"/><polygon points="1129.5,322.6 1136.1,322.3 1135.3,336.5 1128.8,336.9" fill="#4c464c"/><polygon points="1137.3,322.2 1143.2,322.0 1142.4,336.0 1136.5,336.4" fill="#6b626a"/><polygon points="1148.6,318.4 1164.0,317.7 1162.9,335.5 1147.6,336.5" fill="#cfcfd1"/><polygon points="1146.9,337.9 1163.4,336.8 1163.3,339.0 1146.8,340.0" fill="#a9abb2"/><polygon points="1149.4,321.7 1155.8,321.4 1155.0,335.2 1148.6,335.6" fill="#4c464c"/><polygon points="1157.0,321.3 1162.9,321.0 1162.0,334.8 1156.2,335.2" fill="#4c464c"/><polygon points="1163.4,316.0 1184.0,315.2 1182.8,332.7 1162.3,333.9" fill="#cfcfd1"/><polygon points="1161.6,335.3 1183.3,333.9 1183.2,336.0 1161.5,337.4" fill="#a9abb2"/><polygon points="1164.1,319.3 1169.7,319.1 1168.9,332.7 1163.2,333.1" fill="#6b626a"/><polygon points="1170.9,319.0 1176.6,318.7 1175.7,332.3 1170.1,332.7" fill="#857c84"/><polygon points="1177.8,318.7 1182.8,318.5 1181.9,332.0 1176.9,332.3" fill="#6b626a"/><polygon points="1191.5,317.3 1210.3,316.5 1209.1,333.5 1190.3,334.6" fill="#cfcfd1"/><polygon points="1189.6,336.0 1209.6,334.7 1209.4,336.7 1189.4,338.0" fill="#a9abb2"/><polygon points="1192.1,320.5 1200.4,320.1 1199.4,333.3 1191.2,333.8" fill="#857c84"/><polygon points="1201.6,320.0 1209.2,319.6 1208.2,332.8 1200.6,333.2" fill="#6b626a"/><polygon points="1214.2,315.5 1227.6,314.9 1226.3,331.6 1213.0,332.4" fill="#cfcfd1"/><polygon points="1212.3,333.7 1226.8,332.8 1226.6,334.8 1212.1,335.7" fill="#a9abb2"/><polygon points="1214.9,318.6 1220.4,318.3 1219.4,331.3 1213.9,331.6" fill="#6b626a"/><polygon points="1221.6,318.3 1226.4,318.0 1225.4,330.9 1220.6,331.2" fill="#4c464c"/><polygon points="978.4,357.4 998.6,355.9 998.3,376.2 978.2,378.0" fill="#cfcfd1"/><polygon points="977.6,379.6 998.9,377.6 998.8,380.0 977.5,382.0" fill="#a9abb2"/><polygon points="979.3,361.1 988.2,360.5 987.9,376.2 979.1,377.0" fill="#352d2b"/><polygon points="989.4,360.4 997.7,359.8 997.4,375.3 989.1,376.1" fill="#352d2b"/><polygon points="1004.1,355.6 1022.8,354.2 1022.3,374.0 1003.7,375.7" fill="#cfcfd1"/><polygon points="1003.1,377.2 1022.9,375.4 1022.8,377.8 1003.1,379.6" fill="#a9abb2"/><polygon points="1004.9,359.2 1013.1,358.6 1012.7,374.0 1004.7,374.7" fill="#1e1c1c"/><polygon points="1014.3,358.5 1021.8,357.9 1021.4,373.2 1013.9,373.9" fill="#352d2b"/><polygon points="1022.1,352.2 1053.3,350.0 1052.7,369.2 1021.7,372.0" fill="#cfcfd1"/><polygon points="1021.0,373.5 1053.2,370.6 1053.2,372.9 1021.0,375.8" fill="#a9abb2"/><polygon points="1022.9,355.8 1032.1,355.1 1031.7,370.2 1022.6,371.0" fill="#1e1c1c"/><polygon points="1033.3,355.0 1042.5,354.3 1042.1,369.3 1032.9,370.1" fill="#352d2b"/><polygon points="1043.7,354.2 1052.3,353.6 1051.8,368.4 1043.2,369.2" fill="#1e1c1c"/><polygon points="1062.0,352.3 1084.2,350.7 1083.4,369.4 1061.3,371.4" fill="#cfcfd1"/><polygon points="1060.7,372.9 1084.0,370.7 1083.9,373.0 1060.6,375.1" fill="#a9abb2"/><polygon points="1062.8,355.8 1072.6,355.0 1072.1,369.6 1062.3,370.5" fill="#352d2b"/><polygon points="1073.8,355.0 1083.1,354.2 1082.6,368.7 1073.3,369.5" fill="#1e1c1c"/><polygon points="1089.0,349.5 1105.2,348.3 1104.4,366.6 1088.2,368.1" fill="#cfcfd1"/><polygon points="1087.6,369.5 1104.9,367.9 1104.8,370.1 1087.5,371.7" fill="#a9abb2"/><polygon points="1089.8,352.8 1096.7,352.3 1096.0,366.5 1089.2,367.2" fill="#463c38"/><polygon points="1097.9,352.2 1104.2,351.8 1103.5,365.9 1097.2,366.4" fill="#1e1c1c"/><polygon points="1127.4,346.7 1142.8,345.6 1141.8,363.2 1126.4,364.6" fill="#cfcfd1"/><polygon points="1125.8,366.0 1142.3,364.5 1142.2,366.6 1125.6,368.1" fill="#a9abb2"/><polygon points="1128.1,350.0 1134.6,349.5 1133.9,363.2 1127.4,363.8" fill="#352d2b"/><polygon points="1135.8,349.4 1141.7,348.9 1140.9,362.5 1135.0,363.1" fill="#352d2b"/><polygon points="1147.1,345.3 1162.3,344.2 1161.3,361.5 1146.1,362.9" fill="#cfcfd1"/><polygon points="1145.4,364.2 1161.8,362.7 1161.7,364.8 1145.3,366.3" fill="#a9abb2"/><polygon points="1147.8,348.5 1154.2,348.0 1153.4,361.4 1147.0,362.0" fill="#1e1c1c"/><polygon points="1155.4,347.9 1161.2,347.5 1160.4,360.8 1154.6,361.3" fill="#463c38"/><polygon points="1161.7,342.6 1182.2,341.2 1181.1,358.1 1160.7,359.9" fill="#cfcfd1"/><polygon points="1160.0,361.2 1181.6,359.3 1181.5,361.3 1159.9,363.3" fill="#a9abb2"/><polygon points="1162.4,345.7 1168.1,345.3 1167.2,358.5 1161.6,359.0" fill="#1e1c1c"/><polygon points="1169.3,345.2 1174.9,344.8 1174.0,357.9 1168.4,358.4" fill="#1e1c1c"/><polygon points="1176.1,344.7 1181.1,344.4 1180.2,357.4 1175.2,357.8" fill="#352d2b"/><polygon points="1189.7,343.1 1208.5,341.7 1207.3,358.1 1188.5,359.9" fill="#cfcfd1"/><polygon points="1187.8,361.2 1207.8,359.3 1207.6,361.3 1187.7,363.1" fill="#a9abb2"/><polygon points="1190.4,346.1 1198.6,345.5 1197.6,358.3 1189.5,359.0" fill="#352d2b"/><polygon points="1199.8,345.4 1207.3,344.8 1206.4,357.5 1198.8,358.2" fill="#463c38"/><polygon points="1212.4,340.6 1225.6,339.7 1224.4,355.8 1211.1,357.0" fill="#cfcfd1"/><polygon points="1210.4,358.3 1224.9,357.0 1224.7,358.9 1210.3,360.2" fill="#a9abb2"/><polygon points="1213.0,343.6 1218.5,343.2 1217.5,355.7 1212.1,356.2" fill="#1e1c1c"/><polygon points="1219.7,343.1 1224.5,342.7 1223.5,355.2 1218.7,355.6" fill="#1e1c1c"/><polygon points="978.1,387.9 998.1,385.9 997.8,406.3 977.8,408.7" fill="#cfcfd1"/><polygon points="977.2,410.3 998.3,407.8 998.3,410.2 977.2,412.7" fill="#a9abb2"/><polygon points="978.9,391.6 987.7,390.7 987.5,406.6 978.7,407.6" fill="#423130"/><polygon points="988.9,390.6 997.2,389.8 996.9,405.5 988.7,406.5" fill="#7c625e"/><polygon points="1003.6,385.3 1022.1,383.5 1021.6,403.5 1003.2,405.7" fill="#cfcfd1"/><polygon points="1002.6,407.3 1022.2,404.9 1022.1,407.3 1002.5,409.7" fill="#a9abb2"/><polygon points="1004.4,389.0 1012.4,388.2 1012.1,403.7 1004.1,404.7" fill="#423130"/><polygon points="1013.6,388.1 1021.1,387.3 1020.7,402.7 1013.3,403.6" fill="#6c5250"/><polygon points="1021.4,381.5 1052.4,378.5 1051.8,397.9 1021.0,401.5" fill="#cfcfd1"/><polygon points="1020.3,403.0 1052.3,399.3 1052.2,401.6 1020.3,405.4" fill="#a9abb2"/><polygon points="1022.2,385.1 1031.4,384.2 1031.0,399.5 1021.9,400.5" fill="#6c5250"/><polygon points="1032.5,384.1 1041.7,383.1 1041.2,398.3 1032.1,399.3" fill="#6c5250"/><polygon points="1042.8,383.0 1051.4,382.2 1050.9,397.2 1042.4,398.1" fill="#2a2a2b"/><polygon points="1061.0,380.6 1083.1,378.4 1082.3,397.3 1060.4,399.9" fill="#cfcfd1"/><polygon points="1059.7,401.4 1082.8,398.6 1082.7,400.9 1059.6,403.7" fill="#a9abb2"/><polygon points="1061.8,384.1 1071.6,383.1 1071.1,397.8 1061.3,398.9" fill="#7c625e"/><polygon points="1072.8,382.9 1082.0,382.0 1081.4,396.6 1072.2,397.6" fill="#7c625e"/><polygon points="1087.9,377.0 1104.0,375.4 1103.1,394.0 1087.1,395.8" fill="#cfcfd1"/><polygon points="1086.4,397.3 1103.7,395.3 1103.6,397.5 1086.3,399.5" fill="#a9abb2"/><polygon points="1088.6,380.4 1095.5,379.7 1094.8,394.1 1088.0,394.9" fill="#7c625e"/><polygon points="1096.7,379.6 1102.9,378.9 1102.3,393.2 1096.0,394.0" fill="#6c5250"/><polygon points="1126.0,373.3 1141.3,371.7 1140.3,389.6 1125.0,391.4" fill="#cfcfd1"/><polygon points="1124.4,392.8 1140.8,390.8 1140.7,393.0 1124.3,395.0" fill="#a9abb2"/><polygon points="1126.7,376.5 1133.2,375.9 1132.4,389.7 1126.0,390.5" fill="#6c5250"/><polygon points="1134.4,375.7 1140.2,375.1 1139.5,388.9 1133.6,389.6" fill="#7c625e"/><polygon points="1145.6,371.3 1160.8,369.8 1159.7,387.3 1144.6,389.1" fill="#cfcfd1"/><polygon points="1143.9,390.5 1160.2,388.5 1160.1,390.6 1143.8,392.6" fill="#a9abb2"/><polygon points="1146.3,374.5 1152.7,373.9 1151.9,387.5 1145.5,388.2" fill="#7c625e"/><polygon points="1153.9,373.7 1159.7,373.1 1158.8,386.6 1153.1,387.3" fill="#6c5250"/><polygon points="1160.2,368.2 1180.5,366.2 1179.4,383.4 1159.1,385.7" fill="#cfcfd1"/><polygon points="1158.4,387.1 1179.9,384.6 1179.8,386.6 1158.3,389.2" fill="#a9abb2"/><polygon points="1160.9,371.4 1166.5,370.8 1165.6,384.2 1160.0,384.8" fill="#6c5250"/><polygon points="1167.7,370.7 1173.2,370.1 1172.4,383.4 1166.8,384.1" fill="#6c5250"/><polygon points="1174.4,370.0 1179.4,369.5 1178.6,382.7 1173.6,383.3" fill="#2a2a2b"/><polygon points="1188.0,367.9 1206.7,366.1 1205.4,382.7 1186.8,384.9" fill="#cfcfd1"/><polygon points="1186.1,386.3 1205.9,383.9 1205.8,385.9 1186.0,388.3" fill="#a9abb2"/><polygon points="1188.7,371.0 1196.8,370.2 1195.9,383.1 1187.8,384.1" fill="#7c625e"/><polygon points="1198.0,370.0 1205.5,369.2 1204.6,382.1 1197.1,383.0" fill="#7c625e"/><polygon points="1210.5,364.9 1223.7,363.6 1222.5,380.0 1209.3,381.5" fill="#cfcfd1"/><polygon points="1208.6,382.8 1223.0,381.1 1222.8,383.0 1208.5,384.8" fill="#a9abb2"/><polygon points="1211.2,367.9 1216.6,367.3 1215.6,380.0 1210.2,380.7" fill="#7c625e"/><polygon points="1217.8,367.2 1222.6,366.7 1221.6,379.3 1216.8,379.9" fill="#6c5250"/><polygon points="977.7,418.8 997.6,416.3 997.3,435.4 977.5,438.2" fill="#cfcfd1"/><polygon points="976.9,439.7 997.9,436.7 997.8,438.9 976.9,442.0" fill="#a9abb2"/><polygon points="978.5,422.3 987.3,421.1 987.1,436.0 978.4,437.2" fill="#1e1f1e"/><polygon points="988.5,421.0 996.7,419.9 996.4,434.6 988.3,435.8" fill="#454845"/><polygon points="1003.0,415.6 1021.4,413.3 1020.9,432.0 1002.7,434.6" fill="#cfcfd1"/><polygon points="1002.1,436.1 1021.5,433.3 1021.4,435.5 1002.0,438.3" fill="#a9abb2"/><polygon points="1003.8,419.0 1011.8,417.9 1011.5,432.5 1003.6,433.6" fill="#1e1f1e"/><polygon points="1013.0,417.8 1020.4,416.8 1020.1,431.3 1012.7,432.3" fill="#1e1f1e"/><polygon points="1020.7,411.2 1051.5,407.4 1050.9,425.6 1020.3,429.9" fill="#cfcfd1"/><polygon points="1019.7,431.4 1051.4,426.9 1051.4,429.0 1019.6,433.6" fill="#a9abb2"/><polygon points="1021.5,414.6 1030.6,413.4 1030.2,427.7 1021.2,429.0" fill="#2f312f"/><polygon points="1031.8,413.3 1040.8,412.1 1040.4,426.3 1031.4,427.6" fill="#2f312f"/><polygon points="1042.0,412.0 1050.5,410.9 1050.0,424.9 1041.6,426.1" fill="#2f312f"/><polygon points="1060.0,409.3 1081.9,406.5 1081.2,424.2 1059.4,427.4" fill="#cfcfd1"/><polygon points="1058.8,428.8 1081.8,425.4 1081.7,427.5 1058.7,430.9" fill="#a9abb2"/><polygon points="1060.8,412.5 1070.6,411.3 1070.0,425.0 1060.3,426.4" fill="#2f312f"/><polygon points="1071.7,411.1 1080.9,409.9 1080.4,423.5 1071.2,424.9" fill="#454845"/><polygon points="1086.7,405.0 1102.7,403.0 1101.9,420.3 1086.0,422.6" fill="#cfcfd1"/><polygon points="1085.3,424.0 1102.4,421.5 1102.4,423.6 1085.2,426.1" fill="#a9abb2"/><polygon points="1087.5,408.2 1094.3,407.3 1093.7,420.7 1086.9,421.7" fill="#2f312f"/><polygon points="1095.5,407.1 1101.7,406.3 1101.1,419.7 1094.9,420.6" fill="#454845"/><polygon points="1124.6,400.2 1139.8,398.3 1138.9,415.0 1123.7,417.2" fill="#cfcfd1"/><polygon points="1123.0,418.5 1139.4,416.2 1139.3,418.2 1122.9,420.6" fill="#a9abb2"/><polygon points="1125.3,403.2 1131.7,402.4 1131.0,415.4 1124.6,416.3" fill="#1e1f1e"/><polygon points="1132.9,402.3 1138.8,401.5 1138.0,414.4 1132.2,415.2" fill="#2f312f"/><polygon points="1144.1,397.8 1159.2,395.9 1158.2,412.3 1143.1,414.4" fill="#cfcfd1"/><polygon points="1142.5,415.7 1158.7,413.4 1158.6,415.3 1142.4,417.7" fill="#a9abb2"/><polygon points="1144.8,400.7 1151.2,399.9 1150.4,412.6 1144.1,413.5" fill="#2f312f"/><polygon points="1152.3,399.7 1158.1,399.0 1157.3,411.7 1151.6,412.5" fill="#454845"/><polygon points="1158.6,394.3 1178.8,391.7 1177.8,407.8 1157.6,410.7" fill="#cfcfd1"/><polygon points="1156.9,412.0 1178.3,408.9 1178.2,410.8 1156.8,413.9" fill="#a9abb2"/><polygon points="1159.3,397.2 1164.8,396.5 1164.1,409.0 1158.5,409.8" fill="#2f312f"/><polygon points="1166.0,396.3 1171.6,395.6 1170.8,408.1 1165.2,408.9" fill="#1e1f1e"/><polygon points="1172.8,395.5 1177.8,394.8 1176.9,407.2 1172.0,407.9" fill="#7f5e5e"/><polygon points="1186.2,393.2 1204.8,390.9 1203.7,406.5 1185.1,409.2" fill="#cfcfd1"/><polygon points="1184.5,410.5 1204.2,407.6 1204.1,409.4 1184.3,412.4" fill="#a9abb2"/><polygon points="1186.9,396.1 1195.0,395.0 1194.2,407.2 1186.1,408.4" fill="#2f312f"/><polygon points="1196.2,394.9 1203.7,393.9 1202.8,405.9 1195.4,407.0" fill="#1e1f1e"/><polygon points="1208.7,389.6 1221.8,387.9 1220.6,403.3 1207.5,405.2" fill="#cfcfd1"/><polygon points="1206.8,406.4 1221.1,404.3 1221.0,406.2 1206.7,408.3" fill="#a9abb2"/><polygon points="1209.4,392.4 1214.7,391.7 1213.8,403.6 1208.5,404.3" fill="#1e1f1e"/><polygon points="1215.9,391.5 1220.7,390.9 1219.8,402.7 1215.0,403.4" fill="#1e1f1e"/><polygon points="977.4,447.5 997.1,444.5 996.8,464.3 977.2,467.6" fill="#cfcfd1"/><polygon points="976.6,469.2 997.4,465.6 997.3,468.0 976.5,471.6" fill="#a9abb2"/><polygon points="978.2,451.1 986.9,449.7 986.7,465.1 978.0,466.6" fill="#c8c8d2"/><polygon points="988.1,449.6 996.2,448.3 996.0,463.5 987.9,464.9" fill="#9c9caa"/><polygon points="1002.5,443.7 1020.7,440.9 1020.3,460.3 1002.1,463.4" fill="#cfcfd1"/><polygon points="1001.5,464.9 1020.8,461.6 1020.8,463.9 1001.5,467.3" fill="#a9abb2"/><polygon points="1003.3,447.2 1011.2,446.0 1010.9,461.0 1003.0,462.3" fill="#b8b8c3"/><polygon points="1012.4,445.8 1019.8,444.6 1019.4,459.6 1012.1,460.8" fill="#9c9caa"/><polygon points="1020.1,438.9 1050.6,434.3 1050.0,453.2 1019.7,458.3" fill="#cfcfd1"/><polygon points="1019.0,459.8 1050.5,454.5 1050.5,456.7 1019.0,462.1" fill="#a9abb2"/><polygon points="1020.9,442.4 1029.9,441.0 1029.5,455.8 1020.5,457.3" fill="#b8b8c3"/><polygon points="1031.0,440.8 1040.0,439.4 1039.6,454.1 1030.7,455.6" fill="#b8b8c3"/><polygon points="1041.2,439.2 1049.6,438.0 1049.2,452.5 1040.8,453.9" fill="#5a4448"/><polygon points="1059.1,436.0 1080.9,432.7 1080.1,451.0 1058.5,454.7" fill="#cfcfd1"/><polygon points="1057.9,456.2 1080.7,452.3 1080.6,454.5 1057.8,458.4" fill="#a9abb2"/><polygon points="1059.9,439.3 1069.6,437.8 1069.0,452.1 1059.4,453.7" fill="#9c9caa"/><polygon points="1070.8,437.6 1079.9,436.2 1079.3,450.4 1070.2,451.9" fill="#5a4448"/><polygon points="1085.6,431.1 1101.5,428.6 1100.7,446.6 1084.9,449.3" fill="#cfcfd1"/><polygon points="1084.2,450.8 1101.2,447.9 1101.1,450.0 1084.1,452.9" fill="#a9abb2"/><polygon points="1086.4,434.3 1093.1,433.3 1092.5,447.2 1085.8,448.4" fill="#b8b8c3"/><polygon points="1094.3,433.1 1100.5,432.1 1099.9,446.0 1093.7,447.0" fill="#9c9caa"/><polygon points="1123.3,425.3 1138.4,423.0 1137.5,440.4 1122.4,443.0" fill="#cfcfd1"/><polygon points="1121.7,444.4 1138.0,441.6 1137.9,443.6 1121.6,446.5" fill="#a9abb2"/><polygon points="1124.0,428.5 1130.4,427.5 1129.7,440.9 1123.3,442.0" fill="#b8b8c3"/><polygon points="1131.6,427.3 1137.4,426.4 1136.6,439.8 1130.8,440.7" fill="#c8c8d2"/><polygon points="1142.7,422.4 1157.7,420.1 1156.6,437.1 1141.7,439.7" fill="#cfcfd1"/><polygon points="1141.0,441.1 1157.2,438.3 1157.0,440.3 1140.9,443.1" fill="#a9abb2"/><polygon points="1143.4,425.5 1149.7,424.5 1148.9,437.7 1142.6,438.8" fill="#b8b8c3"/><polygon points="1150.9,424.3 1156.6,423.4 1155.8,436.5 1150.1,437.5" fill="#b8b8c3"/><polygon points="1157.1,418.5 1177.3,415.5 1176.1,432.2 1156.1,435.6" fill="#cfcfd1"/><polygon points="1155.4,436.9 1176.7,433.3 1176.5,435.3 1155.3,438.9" fill="#a9abb2"/><polygon points="1157.8,421.5 1163.3,420.7 1162.5,433.7 1157.0,434.7" fill="#b8b8c3"/><polygon points="1164.5,420.5 1170.0,419.7 1169.2,432.6 1163.7,433.5" fill="#b8b8c3"/><polygon points="1171.2,419.5 1176.2,418.7 1175.3,431.6 1170.4,432.4" fill="#5a4448"/><polygon points="1184.6,416.8 1203.1,414.0 1201.9,430.2 1183.5,433.4" fill="#cfcfd1"/><polygon points="1182.8,434.7 1202.4,431.3 1202.3,433.3 1182.7,436.7" fill="#a9abb2"/><polygon points="1185.3,419.8 1193.4,418.5 1192.5,431.1 1184.4,432.5" fill="#c8c8d2"/><polygon points="1194.5,418.3 1202.0,417.1 1201.1,429.7 1193.6,430.9" fill="#b8b8c3"/><polygon points="1207.0,412.6 1220.1,410.6 1218.8,426.6 1205.7,428.8" fill="#cfcfd1"/><polygon points="1205.1,430.1 1219.3,427.7 1219.2,429.6 1204.9,432.0" fill="#a9abb2"/><polygon points="1207.6,415.5 1213.0,414.7 1212.0,427.0 1206.7,427.9" fill="#c8c8d2"/><polygon points="1214.2,414.5 1218.9,413.7 1218.0,426.0 1213.2,426.8" fill="#9c9caa"/><polygon points="977.0,477.3 996.6,473.8 996.3,493.3 976.8,497.1" fill="#cfcfd1"/><polygon points="976.2,498.7 996.9,494.6 996.8,496.9 976.2,501.0" fill="#a9abb2"/><polygon points="977.9,480.8 986.5,479.2 986.3,494.4 977.7,496.0" fill="#aab0c0"/><polygon points="987.7,479.0 995.7,477.6 995.5,492.6 987.4,494.1" fill="#3a3e4a"/><polygon points="1002.0,472.9 1020.1,469.6 1019.6,488.7 1001.6,492.2" fill="#cfcfd1"/><polygon points="1001.0,493.8 1020.2,490.0 1020.1,492.2 1001.0,496.1" fill="#a9abb2"/><polygon points="1002.8,476.3 1010.6,474.9 1010.3,489.7 1002.5,491.2" fill="#aab0c0"/><polygon points="1011.8,474.7 1019.1,473.3 1018.8,488.0 1011.5,489.4" fill="#aab0c0"/><polygon points="1019.4,467.6 1049.7,462.3 1049.1,480.9 1019.0,486.7" fill="#cfcfd1"/><polygon points="1018.4,488.2 1049.7,482.1 1049.6,484.3 1018.3,490.5" fill="#a9abb2"/><polygon points="1020.2,471.0 1029.1,469.4 1028.8,484.0 1019.9,485.7" fill="#aab0c0"/><polygon points="1030.3,469.2 1039.2,467.6 1038.8,482.0 1029.9,483.8" fill="#d3d6df"/><polygon points="1040.4,467.4 1048.7,465.9 1048.3,480.2 1040.0,481.8" fill="#3a3e4a"/><polygon points="1058.2,463.8 1079.8,459.9 1079.1,478.0 1057.5,482.2" fill="#cfcfd1"/><polygon points="1056.9,483.7 1079.6,479.2 1079.5,481.3 1056.8,485.8" fill="#a9abb2"/><polygon points="1058.9,467.0 1068.6,465.3 1068.0,479.3 1058.4,481.2" fill="#c1c6d2"/><polygon points="1069.7,465.0 1078.8,463.4 1078.2,477.3 1069.2,479.1" fill="#c1c6d2"/><polygon points="1084.5,458.1 1100.3,455.3 1099.5,473.0 1083.8,476.1" fill="#cfcfd1"/><polygon points="1083.1,477.6 1100.0,474.2 1099.9,476.3 1083.0,479.7" fill="#a9abb2"/><polygon points="1085.2,461.3 1092.0,460.1 1091.4,473.8 1084.7,475.2" fill="#c1c6d2"/><polygon points="1093.1,459.9 1099.3,458.8 1098.7,472.4 1092.5,473.6" fill="#3a3e4a"/><polygon points="1121.9,451.5 1137.0,448.8 1136.0,465.9 1121.0,468.8" fill="#cfcfd1"/><polygon points="1120.4,470.2 1136.6,467.0 1136.4,469.1 1120.3,472.3" fill="#a9abb2"/><polygon points="1122.6,454.5 1129.0,453.4 1128.3,466.6 1121.9,467.9" fill="#c1c6d2"/><polygon points="1130.2,453.2 1135.9,452.1 1135.2,465.3 1129.4,466.4" fill="#c1c6d2"/><polygon points="1141.2,448.0 1156.1,445.4 1155.1,462.1 1140.2,465.1" fill="#cfcfd1"/><polygon points="1139.6,466.4 1155.6,463.3 1155.5,465.3 1139.5,468.5" fill="#a9abb2"/><polygon points="1141.9,451.0 1148.2,449.9 1147.4,462.9 1141.2,464.1" fill="#d3d6df"/><polygon points="1149.4,449.7 1155.1,448.6 1154.3,461.6 1148.6,462.7" fill="#aab0c0"/><polygon points="1155.5,443.8 1175.6,440.3 1174.5,456.7 1154.5,460.6" fill="#cfcfd1"/><polygon points="1153.9,461.9 1175.0,457.8 1174.9,459.8 1153.7,463.9" fill="#a9abb2"/><polygon points="1156.2,446.7 1161.7,445.8 1160.9,458.6 1155.4,459.7" fill="#d3d6df"/><polygon points="1162.9,445.5 1168.4,444.6 1167.6,457.3 1162.1,458.4" fill="#d3d6df"/><polygon points="1169.6,444.3 1174.5,443.5 1173.7,456.1 1168.8,457.1" fill="#3a3e4a"/><polygon points="1182.9,441.4 1201.4,438.1 1200.2,454.1 1181.8,457.7" fill="#cfcfd1"/><polygon points="1181.1,459.1 1200.7,455.2 1200.5,457.1 1181.0,461.0" fill="#a9abb2"/><polygon points="1183.6,444.3 1191.6,442.8 1190.7,455.3 1182.7,456.8" fill="#aab0c0"/><polygon points="1192.8,442.6 1200.2,441.2 1199.3,453.6 1191.9,455.0" fill="#3a3e4a"/><polygon points="1205.2,436.6 1218.2,434.3 1217.0,450.0 1204.0,452.6" fill="#cfcfd1"/><polygon points="1203.3,453.9 1217.5,451.1 1217.3,452.9 1203.1,455.8" fill="#a9abb2"/><polygon points="1205.8,439.4 1211.2,438.4 1210.2,450.7 1204.9,451.7" fill="#aab0c0"/><polygon points="1212.3,438.2 1217.1,437.4 1216.1,449.5 1211.4,450.4" fill="#aab0c0"/><polygon points="976.7,506.7 996.2,502.7 995.8,521.5 976.5,525.7" fill="#cfcfd1"/><polygon points="975.9,527.3 996.4,522.7 996.4,524.9 975.9,529.5" fill="#a9abb2"/><polygon points="977.5,510.0 986.1,508.2 985.9,522.8 977.4,524.7" fill="#d5d8e1"/><polygon points="987.2,508.0 995.2,506.3 995.0,520.8 987.0,522.6" fill="#1c1c22"/><polygon points="1001.4,501.6 1019.4,497.9 1019.0,516.3 1001.1,520.3" fill="#cfcfd1"/><polygon points="1000.5,521.8 1019.5,517.6 1019.5,519.8 1000.5,524.0" fill="#a9abb2"/><polygon points="1002.2,504.9 1010.1,503.3 1009.8,517.6 1002.0,519.3" fill="#d5d8e1"/><polygon points="1011.2,503.0 1018.5,501.5 1018.1,515.7 1010.9,517.3" fill="#c5cad6"/><polygon points="1018.8,495.9 1048.8,489.9 1048.3,507.8 1018.3,514.4" fill="#cfcfd1"/><polygon points="1017.7,515.9 1048.8,509.0 1048.7,511.1 1017.7,518.0" fill="#a9abb2"/><polygon points="1019.6,499.2 1028.4,497.4 1028.0,511.4 1019.2,513.4" fill="#c5cad6"/><polygon points="1029.6,497.1 1038.4,495.3 1038.0,509.2 1029.2,511.2" fill="#b2b8c8"/><polygon points="1039.6,495.1 1047.9,493.4 1047.4,507.2 1039.2,509.0" fill="#b2b8c8"/><polygon points="1057.2,491.1 1078.7,486.7 1078.0,504.2 1056.6,508.9" fill="#cfcfd1"/><polygon points="1056.0,510.4 1078.5,505.3 1078.5,507.4 1055.9,512.5" fill="#a9abb2"/><polygon points="1058.0,494.2 1067.6,492.2 1067.1,505.8 1057.5,507.9" fill="#b2b8c8"/><polygon points="1068.7,492.0 1077.7,490.1 1077.2,503.6 1068.2,505.6" fill="#c5cad6"/><polygon points="1083.4,484.8 1099.1,481.6 1098.3,498.8 1082.7,502.2" fill="#cfcfd1"/><polygon points="1082.0,503.6 1098.8,499.9 1098.7,501.9 1082.0,505.7" fill="#a9abb2"/><polygon points="1084.1,487.9 1090.8,486.5 1090.2,499.8 1083.6,501.3" fill="#c5cad6"/><polygon points="1092.0,486.3 1098.1,485.0 1097.5,498.2 1091.4,499.5" fill="#c5cad6"/><polygon points="1120.6,477.2 1135.6,474.2 1134.6,490.7 1119.7,494.0" fill="#cfcfd1"/><polygon points="1119.1,495.4 1135.2,491.8 1135.1,493.8 1119.0,497.4" fill="#a9abb2"/><polygon points="1121.3,480.2 1127.6,478.9 1126.9,491.7 1120.6,493.1" fill="#c5cad6"/><polygon points="1128.8,478.6 1134.5,477.4 1133.8,490.2 1128.1,491.4" fill="#b2b8c8"/><polygon points="1139.8,473.3 1154.6,470.3 1153.6,486.5 1138.8,489.8" fill="#cfcfd1"/><polygon points="1138.2,491.2 1154.1,487.6 1154.0,489.5 1138.1,493.1" fill="#a9abb2"/><polygon points="1140.5,476.2 1146.7,474.9 1146.0,487.5 1139.7,488.9" fill="#d5d8e1"/><polygon points="1147.9,474.6 1153.5,473.5 1152.8,486.0 1147.1,487.2" fill="#b2b8c8"/><polygon points="1154.0,468.7 1174.0,464.7 1172.9,480.6 1153.0,485.0" fill="#cfcfd1"/><polygon points="1152.4,486.3 1173.4,481.7 1173.3,483.5 1152.3,488.2" fill="#a9abb2"/><polygon points="1154.7,471.6 1160.2,470.4 1159.4,482.9 1154.0,484.1" fill="#d5d8e1"/><polygon points="1161.4,470.2 1166.8,469.1 1166.0,481.4 1160.6,482.6" fill="#b2b8c8"/><polygon points="1168.0,468.8 1172.9,467.8 1172.1,480.1 1167.2,481.2" fill="#b2b8c8"/><polygon points="1181.3,465.6 1199.6,461.9 1198.4,477.4 1180.2,481.5" fill="#cfcfd1"/><polygon points="1179.5,482.8 1199.0,478.4 1198.8,480.3 1179.4,484.6" fill="#a9abb2"/><polygon points="1181.9,468.4 1189.9,466.7 1189.1,478.8 1181.1,480.6" fill="#c5cad6"/><polygon points="1191.1,466.5 1198.5,464.9 1197.6,476.9 1190.2,478.5" fill="#d5d8e1"/><polygon points="1203.4,460.3 1216.4,457.7 1215.2,472.9 1202.2,475.8" fill="#cfcfd1"/><polygon points="1201.6,477.0 1215.7,473.9 1215.5,475.7 1201.4,478.9" fill="#a9abb2"/><polygon points="1204.1,463.0 1209.4,461.9 1208.5,473.7 1203.2,474.9" fill="#d5d8e1"/><polygon points="1210.5,461.6 1215.3,460.7 1214.3,472.4 1209.6,473.5" fill="#b2b8c8"/><polygon points="976.4,535.0 995.7,530.6 995.4,548.7 976.2,553.4" fill="#cfcfd1"/><polygon points="975.6,554.9 995.9,549.9 995.9,552.0 975.6,557.1" fill="#a9abb2"/><polygon points="977.2,538.2 985.7,536.2 985.5,550.3 977.0,552.4" fill="#d1d4df"/><polygon points="986.8,536.0 994.8,534.1 994.5,548.1 986.6,550.0" fill="#aab0bf"/><polygon points="1000.9,529.3 1018.8,525.3 1018.3,543.0 1000.6,547.4" fill="#cfcfd1"/><polygon points="1000.0,548.9 1018.9,544.2 1018.8,546.3 1000.0,551.0" fill="#a9abb2"/><polygon points="1001.7,532.5 1009.5,530.7 1009.2,544.5 1001.5,546.4" fill="#aab0bf"/><polygon points="1010.6,530.4 1017.8,528.7 1017.5,542.4 1010.3,544.2" fill="#aab0bf"/><polygon points="1018.1,523.3 1048.0,516.5 1047.5,533.8 1017.7,541.1" fill="#cfcfd1"/><polygon points="1017.1,542.5 1048.0,535.0 1047.9,537.0 1017.1,544.6" fill="#a9abb2"/><polygon points="1018.9,526.4 1027.7,524.4 1027.4,537.9 1018.6,540.1" fill="#c1c6d2"/><polygon points="1028.9,524.1 1037.7,522.1 1037.3,535.5 1028.5,537.7" fill="#d1d4df"/><polygon points="1038.8,521.8 1047.0,519.9 1046.6,533.2 1038.4,535.2" fill="#c1c6d2"/><polygon points="1056.3,517.5 1077.7,512.6 1077.0,529.5 1055.8,534.7" fill="#cfcfd1"/><polygon points="1055.1,536.2 1077.5,530.6 1077.4,532.6 1055.1,538.2" fill="#a9abb2"/><polygon points="1057.1,520.5 1066.6,518.3 1066.1,531.4 1056.6,533.8" fill="#aab0bf"/><polygon points="1067.7,518.0 1076.7,516.0 1076.2,529.0 1067.3,531.2" fill="#c1c6d2"/><polygon points="1082.3,510.7 1097.9,507.1 1097.2,523.6 1081.6,527.5" fill="#cfcfd1"/><polygon points="1081.0,528.8 1097.7,524.7 1097.6,526.7 1080.9,530.8" fill="#a9abb2"/><polygon points="1083.1,513.6 1089.7,512.0 1089.1,524.9 1082.5,526.5" fill="#d1d4df"/><polygon points="1090.9,511.8 1096.9,510.3 1096.3,523.1 1090.3,524.6" fill="#aab0bf"/><polygon points="1119.3,502.2 1134.2,498.7 1133.3,514.7 1118.4,518.4" fill="#cfcfd1"/><polygon points="1117.8,519.7 1133.8,515.8 1133.7,517.7 1117.7,521.7" fill="#a9abb2"/><polygon points="1120.0,505.0 1126.3,503.5 1125.6,515.9 1119.4,517.5" fill="#c1c6d2"/><polygon points="1127.4,503.2 1133.2,501.9 1132.5,514.2 1126.8,515.6" fill="#2a2626"/><polygon points="1138.4,497.8 1153.1,494.4 1152.2,510.1 1137.5,513.7" fill="#cfcfd1"/><polygon points="1136.8,515.0 1152.7,511.1 1152.6,513.0 1136.7,516.9" fill="#a9abb2"/><polygon points="1139.1,500.5 1145.3,499.1 1144.6,511.3 1138.4,512.8" fill="#d1d4df"/><polygon points="1146.4,498.8 1152.1,497.5 1151.3,509.6 1145.7,511.0" fill="#aab0bf"/><polygon points="1152.5,492.9 1172.4,488.3 1171.4,503.7 1151.6,508.6" fill="#cfcfd1"/><polygon points="1150.9,509.9 1171.9,504.7 1171.8,506.6 1150.8,511.7" fill="#a9abb2"/><polygon points="1153.2,495.6 1158.7,494.3 1157.9,506.3 1152.5,507.7" fill="#d1d4df"/><polygon points="1159.9,494.0 1165.3,492.8 1164.5,504.7 1159.1,506.1" fill="#aab0bf"/><polygon points="1166.5,492.5 1171.3,491.4 1170.5,503.3 1165.7,504.4" fill="#2a2626"/><polygon points="1179.6,489.1 1197.9,484.9 1196.8,499.9 1178.6,504.4" fill="#cfcfd1"/><polygon points="1177.9,505.7 1197.3,500.9 1197.2,502.7 1177.8,507.5" fill="#a9abb2"/><polygon points="1180.3,491.8 1188.3,489.9 1187.4,501.6 1179.5,503.5" fill="#c1c6d2"/><polygon points="1189.4,489.6 1196.8,487.9 1196.0,499.5 1188.6,501.3" fill="#aab0bf"/><polygon points="1201.7,483.3 1214.6,480.3 1213.4,495.0 1200.5,498.2" fill="#cfcfd1"/><polygon points="1199.9,499.5 1213.9,496.0 1213.8,497.7 1199.7,501.2" fill="#a9abb2"/><polygon points="1202.3,485.8 1207.6,484.6 1206.7,496.0 1201.5,497.3" fill="#d1d4df"/><polygon points="1208.8,484.3 1213.5,483.2 1212.6,494.6 1207.9,495.7" fill="#c1c6d2"/><polygon points="976.1,562.3 995.2,557.4 994.9,575.2 975.9,580.3" fill="#cfcfd1"/><polygon points="975.3,581.8 995.5,576.4 995.4,578.5 975.3,584.0" fill="#a9abb2"/><polygon points="976.9,565.4 985.3,563.2 985.1,577.1 976.7,579.3" fill="#9fa4b2"/><polygon points="986.5,562.9 994.3,560.9 994.1,574.6 986.3,576.7" fill="#b9beca"/><polygon points="1000.4,556.1 1018.1,551.6 1017.7,569.0 1000.1,573.8" fill="#cfcfd1"/><polygon points="999.5,575.3 1018.3,570.2 1018.2,572.3 999.5,577.4" fill="#a9abb2"/><polygon points="1001.2,559.2 1008.9,557.2 1008.7,570.7 1001.0,572.8" fill="#9fa4b2"/><polygon points="1010.1,556.9 1017.2,555.1 1016.9,568.5 1009.8,570.4" fill="#8e4c4a"/><polygon points="1017.5,549.6 1047.2,542.2 1046.6,559.2 1017.1,567.1" fill="#cfcfd1"/><polygon points="1016.5,568.6 1047.2,560.3 1047.1,562.3 1016.5,570.6" fill="#a9abb2"/><polygon points="1018.3,552.7 1027.0,550.4 1026.7,563.8 1018.0,566.1" fill="#cdd0db"/><polygon points="1028.2,550.2 1036.9,547.9 1036.5,561.1 1027.8,563.5" fill="#cdd0db"/><polygon points="1038.1,547.6 1046.2,545.5 1045.8,558.7 1037.7,560.8" fill="#b9beca"/><polygon points="1055.5,543.1 1076.7,537.7 1076.0,554.2 1054.9,559.9" fill="#cfcfd1"/><polygon points="1054.3,561.4 1076.5,555.3 1076.4,557.3 1054.2,563.4" fill="#a9abb2"/><polygon points="1056.2,546.0 1065.7,543.5 1065.2,556.4 1055.8,559.0" fill="#b9beca"/><polygon points="1066.8,543.2 1075.7,540.9 1075.2,553.7 1066.3,556.1" fill="#8e4c4a"/><polygon points="1081.3,535.6 1096.8,531.6 1096.1,547.9 1080.6,552.1" fill="#cfcfd1"/><polygon points="1080.0,553.5 1096.6,549.0 1096.5,550.9 1079.9,555.4" fill="#a9abb2"/><polygon points="1082.0,538.4 1088.6,536.7 1088.1,549.3 1081.5,551.1" fill="#9fa4b2"/><polygon points="1089.8,536.4 1095.8,534.9 1095.2,547.4 1089.2,549.0" fill="#8e4c4a"/><polygon points="1118.0,526.2 1132.9,522.5 1132.0,538.2 1117.2,542.2" fill="#cfcfd1"/><polygon points="1116.6,543.5 1132.5,539.2 1132.4,541.1 1116.5,545.4" fill="#a9abb2"/><polygon points="1118.8,529.0 1125.0,527.4 1124.3,539.6 1118.1,541.3" fill="#b9beca"/><polygon points="1126.2,527.1 1131.8,525.6 1131.2,537.7 1125.5,539.3" fill="#8e4c4a"/><polygon points="1137.0,521.4 1151.7,517.7 1150.7,533.2 1136.1,537.1" fill="#cfcfd1"/><polygon points="1135.5,538.4 1151.3,534.1 1151.1,536.0 1135.4,540.3" fill="#a9abb2"/><polygon points="1137.7,524.1 1143.9,522.5 1143.2,534.5 1137.0,536.2" fill="#b9beca"/><polygon points="1145.0,522.2 1150.6,520.8 1149.9,532.7 1144.3,534.2" fill="#cdd0db"/><polygon points="1151.1,516.2 1170.9,511.2 1169.9,526.3 1150.2,531.6" fill="#cfcfd1"/><polygon points="1149.5,532.9 1170.4,527.3 1170.2,529.1 1149.4,534.8" fill="#a9abb2"/><polygon points="1151.8,518.8 1157.2,517.4 1156.5,529.3 1151.1,530.7" fill="#cdd0db"/><polygon points="1158.4,517.1 1163.8,515.7 1163.0,527.5 1157.6,529.0" fill="#9fa4b2"/><polygon points="1165.0,515.5 1169.8,514.2 1169.0,525.9 1164.2,527.2" fill="#9fa4b2"/><polygon points="1178.1,511.8 1196.2,507.2 1195.2,522.0 1177.0,526.9" fill="#cfcfd1"/><polygon points="1176.4,528.1 1195.7,522.9 1195.5,524.7 1176.3,529.9" fill="#a9abb2"/><polygon points="1178.8,514.4 1186.7,512.3 1185.8,523.8 1178.0,526.0" fill="#cdd0db"/><polygon points="1187.8,512.0 1195.2,510.2 1194.3,521.5 1187.0,523.5" fill="#b9beca"/><polygon points="1200.0,505.4 1212.9,502.2 1211.7,516.7 1198.9,520.2" fill="#cfcfd1"/><polygon points="1198.2,521.4 1212.2,517.6 1212.1,519.3 1198.1,523.2" fill="#a9abb2"/><polygon points="1200.7,507.9 1205.9,506.6 1205.1,517.9 1199.8,519.3" fill="#cdd0db"/><polygon points="1207.1,506.3 1211.8,505.1 1210.9,516.3 1206.2,517.5" fill="#cdd0db"/><polygon points="975.8,589.0 994.8,583.8 994.5,601.6 975.6,607.1" fill="#cfcfd1"/><polygon points="975.0,608.6 995.0,602.7 995.0,604.8 975.0,610.8" fill="#a9abb2"/><polygon points="976.6,592.1 985.0,589.8 984.8,603.6 976.4,606.1" fill="#c3c5cf"/><polygon points="986.1,589.5 993.9,587.3 993.7,601.0 985.9,603.3" fill="#a8a8b3"/><polygon points="1000.0,582.3 1017.5,577.5 1017.1,594.9 999.6,600.0" fill="#cfcfd1"/><polygon points="999.0,601.5 1017.7,596.0 1017.6,598.1 999.0,603.6" fill="#a9abb2"/><polygon points="1000.7,585.4 1008.4,583.2 1008.1,596.8 1000.5,599.0" fill="#c3c5cf"/><polygon points="1009.5,582.9 1016.6,580.9 1016.3,594.4 1009.2,596.4" fill="#a8a8b3"/><polygon points="1016.9,575.5 1046.4,567.4 1045.8,584.4 1016.5,593.0" fill="#cfcfd1"/><polygon points="1015.9,594.4 1046.4,585.5 1046.3,587.5 1015.9,596.5" fill="#a9abb2"/><polygon points="1017.7,578.5 1026.4,576.1 1026.0,589.4 1017.4,592.0" fill="#c3c5cf"/><polygon points="1027.5,575.8 1036.2,573.4 1035.8,586.6 1027.1,589.1" fill="#c3c5cf"/><polygon points="1037.3,573.0 1045.4,570.8 1045.0,583.9 1036.9,586.3" fill="#93504c"/><polygon points="1054.6,568.1 1075.7,562.2 1075.0,578.8 1054.0,585.0" fill="#cfcfd1"/><polygon points="1053.4,586.4 1075.5,579.9 1075.4,581.9 1053.4,588.4" fill="#a9abb2"/><polygon points="1055.4,571.0 1064.7,568.3 1064.3,581.2 1054.9,584.0" fill="#a8a8b3"/><polygon points="1065.9,568.0 1074.7,565.5 1074.2,578.3 1065.4,580.9" fill="#93504c"/><polygon points="1080.3,560.0 1095.7,555.8 1095.0,572.1 1079.6,576.6" fill="#cfcfd1"/><polygon points="1079.0,578.0 1095.5,573.1 1095.4,575.0 1078.9,579.9" fill="#a9abb2"/><polygon points="1081.0,562.9 1087.6,561.0 1087.0,573.7 1080.5,575.6" fill="#c3c5cf"/><polygon points="1088.7,560.7 1094.7,559.0 1094.1,571.6 1088.2,573.3" fill="#a8a8b3"/><polygon points="1116.8,549.9 1131.6,545.8 1130.7,561.6 1116.0,565.9" fill="#cfcfd1"/><polygon points="1115.3,567.2 1131.2,562.6 1131.1,564.4 1115.3,569.1" fill="#a9abb2"/><polygon points="1117.5,552.6 1123.7,550.9 1123.1,563.1 1116.9,564.9" fill="#97949b"/><polygon points="1124.9,550.5 1130.5,549.0 1129.9,561.1 1124.2,562.8" fill="#c3c5cf"/><polygon points="1135.7,544.7 1150.3,540.6 1149.3,556.1 1134.8,560.4" fill="#cfcfd1"/><polygon points="1134.1,561.7 1149.8,557.1 1149.7,558.9 1134.0,563.6" fill="#a9abb2"/><polygon points="1136.4,547.3 1142.5,545.6 1141.8,557.6 1135.7,559.4" fill="#c3c5cf"/><polygon points="1143.7,545.3 1149.2,543.7 1148.5,555.7 1143.0,557.3" fill="#97949b"/><polygon points="1149.7,539.1 1169.4,533.7 1168.4,548.9 1148.8,554.6" fill="#cfcfd1"/><polygon points="1148.1,555.9 1168.9,549.8 1168.7,551.6 1148.0,557.7" fill="#a9abb2"/><polygon points="1150.4,541.7 1155.8,540.2 1155.1,552.1 1149.7,553.6" fill="#97949b"/><polygon points="1157.0,539.9 1162.3,538.4 1161.6,550.2 1156.2,551.7" fill="#c3c5cf"/><polygon points="1163.5,538.1 1168.3,536.7 1167.5,548.4 1162.7,549.8" fill="#c3c5cf"/><polygon points="1176.5,534.1 1194.6,529.1 1193.5,543.9 1175.5,549.2" fill="#cfcfd1"/><polygon points="1174.9,550.5 1194.0,544.8 1193.9,546.6 1174.7,552.3" fill="#a9abb2"/><polygon points="1177.2,536.7 1185.1,534.5 1184.3,546.0 1176.4,548.3" fill="#c3c5cf"/><polygon points="1186.3,534.1 1193.6,532.1 1192.7,543.5 1185.4,545.7" fill="#93504c"/><polygon points="1198.4,527.3 1211.2,523.7 1210.0,538.3 1197.3,542.0" fill="#cfcfd1"/><polygon points="1196.6,543.3 1210.5,539.2 1210.4,540.9 1196.5,545.0" fill="#a9abb2"/><polygon points="1199.0,529.7 1204.3,528.3 1203.4,539.6 1198.2,541.1" fill="#97949b"/><polygon points="1205.4,528.0 1210.1,526.6 1209.2,537.9 1204.6,539.2" fill="#97949b"/><polygon points="975.5,615.8 994.4,610.1 994.1,627.6 975.3,633.6" fill="#cfcfd1"/><polygon points="974.7,635.0 994.6,628.7 994.6,630.8 974.7,637.1" fill="#a9abb2"/><polygon points="976.3,618.9 984.6,616.3 984.4,629.9 976.1,632.5" fill="#b0b0ba"/><polygon points="985.7,616.0 993.5,613.6 993.2,627.1 985.5,629.5" fill="#c8cad2"/><polygon points="999.5,608.6 1016.9,603.3 1016.5,620.5 999.2,626.0" fill="#cfcfd1"/><polygon points="998.6,627.5 1017.1,621.6 1017.0,623.6 998.5,629.5" fill="#a9abb2"/><polygon points="1000.3,611.6 1007.9,609.3 1007.6,622.6 1000.0,625.0" fill="#837e87"/><polygon points="1009.0,608.9 1016.0,606.8 1015.7,620.0 1008.7,622.2" fill="#b0b0ba"/><polygon points="1016.3,601.4 1045.6,592.7 1045.1,609.4 1015.9,618.6" fill="#cfcfd1"/><polygon points="1015.3,620.0 1045.6,610.4 1045.5,612.4 1015.3,622.0" fill="#a9abb2"/><polygon points="1017.1,604.3 1025.7,601.7 1025.4,614.8 1016.8,617.5" fill="#c8cad2"/><polygon points="1026.8,601.4 1035.4,598.8 1035.1,611.8 1026.5,614.5" fill="#b0b0ba"/><polygon points="1036.6,598.4 1044.6,596.0 1044.2,608.9 1036.2,611.4" fill="#3a3036"/><polygon points="1053.8,593.2 1074.7,586.8 1074.0,603.2 1053.2,609.8" fill="#cfcfd1"/><polygon points="1052.6,611.2 1074.5,604.2 1074.5,606.1 1052.5,613.2" fill="#a9abb2"/><polygon points="1054.5,596.0 1063.8,593.1 1063.4,605.8 1054.1,608.8" fill="#b0b0ba"/><polygon points="1065.0,592.8 1073.7,590.1 1073.2,602.7 1064.5,605.5" fill="#837e87"/><polygon points="1079.3,584.6 1094.6,579.9 1093.9,596.0 1078.6,600.8" fill="#cfcfd1"/><polygon points="1078.0,602.2 1094.4,597.0 1094.3,598.9 1077.9,604.1" fill="#a9abb2"/><polygon points="1080.0,587.3 1086.5,585.3 1086.0,597.8 1079.5,599.8" fill="#c8cad2"/><polygon points="1087.6,585.0 1093.6,583.2 1093.0,595.5 1087.1,597.4" fill="#c8cad2"/><polygon points="1115.6,573.6 1130.2,569.2 1129.4,584.7 1114.8,589.3" fill="#cfcfd1"/><polygon points="1114.1,590.7 1129.9,585.7 1129.8,587.5 1114.0,592.5" fill="#a9abb2"/><polygon points="1116.3,576.3 1122.5,574.4 1121.8,586.4 1115.7,588.4" fill="#b0b0ba"/><polygon points="1123.6,574.0 1129.2,572.3 1128.6,584.3 1123.0,586.1" fill="#837e87"/><polygon points="1134.4,568.0 1148.9,563.6 1147.9,578.8 1133.5,583.4" fill="#cfcfd1"/><polygon points="1132.8,584.7 1148.4,579.8 1148.3,581.6 1132.7,586.6" fill="#a9abb2"/><polygon points="1135.0,570.6 1141.2,568.7 1140.5,580.5 1134.4,582.5" fill="#c8cad2"/><polygon points="1142.3,568.4 1147.8,566.7 1147.1,578.4 1141.6,580.2" fill="#3a3036"/><polygon points="1148.3,562.1 1167.9,556.2 1166.9,571.2 1147.4,577.3" fill="#cfcfd1"/><polygon points="1146.7,578.6 1167.4,572.1 1167.3,573.9 1146.6,580.4" fill="#a9abb2"/><polygon points="1149.0,564.6 1154.4,563.0 1153.6,574.7 1148.3,576.4" fill="#837e87"/><polygon points="1155.5,562.7 1160.9,561.0 1160.1,572.6 1154.8,574.3" fill="#c8cad2"/><polygon points="1162.0,560.7 1166.8,559.2 1166.1,570.8 1161.3,572.3" fill="#3a3036"/><polygon points="1175.0,556.5 1193.0,551.1 1191.9,565.7 1174.0,571.4" fill="#cfcfd1"/><polygon points="1173.3,572.7 1192.4,566.6 1192.3,568.3 1173.2,574.4" fill="#a9abb2"/><polygon points="1175.7,559.0 1183.5,556.6 1182.7,568.0 1174.9,570.4" fill="#b0b0ba"/><polygon points="1184.7,556.3 1191.9,554.1 1191.1,565.3 1183.9,567.6" fill="#c8cad2"/><polygon points="1196.7,549.2 1209.5,545.3 1208.4,559.7 1195.6,563.7" fill="#cfcfd1"/><polygon points="1195.0,565.0 1208.8,560.5 1208.7,562.2 1194.9,566.7" fill="#a9abb2"/><polygon points="1197.4,551.6 1202.6,550.0 1201.8,561.1 1196.6,562.8" fill="#b0b0ba"/><polygon points="1203.8,549.7 1208.4,548.2 1207.5,559.3 1202.9,560.8" fill="#b0b0ba"/><polygon points="975.2,642.1 993.9,636.0 993.6,653.5 975.0,659.8" fill="#cfcfd1"/><polygon points="974.4,661.3 994.2,654.6 994.1,656.7 974.4,663.4" fill="#a9abb2"/><polygon points="976.0,645.1 984.2,642.4 984.0,656.0 975.8,658.8" fill="#a9acba"/><polygon points="985.3,642.0 993.0,639.5 992.8,653.0 985.1,655.6" fill="#8f8a93"/><polygon points="999.0,634.4 1016.3,628.7 1015.9,645.9 998.7,651.8" fill="#cfcfd1"/><polygon points="998.1,653.2 1016.5,647.0 1016.4,649.0 998.1,655.3" fill="#a9abb2"/><polygon points="999.8,637.3 1007.3,634.8 1007.0,648.1 999.5,650.7" fill="#8f8a93"/><polygon points="1008.4,634.5 1015.4,632.2 1015.1,645.4 1008.1,647.8" fill="#a9acba"/><polygon points="1015.7,626.8 1044.8,617.4 1044.3,634.2 1015.3,644.0" fill="#cfcfd1"/><polygon points="1014.8,645.4 1044.8,635.2 1044.7,637.2 1014.7,647.5" fill="#a9abb2"/><polygon points="1016.5,629.7 1025.0,626.9 1024.7,640.1 1016.2,642.9" fill="#a9acba"/><polygon points="1026.2,626.6 1034.7,623.8 1034.3,636.8 1025.8,639.7" fill="#c5c8d3"/><polygon points="1035.8,623.4 1043.9,620.8 1043.5,633.7 1035.5,636.4" fill="#4a3c3c"/><polygon points="1052.9,617.8 1073.7,611.0 1073.1,627.4 1052.4,634.4" fill="#cfcfd1"/><polygon points="1051.8,635.8 1073.6,628.4 1073.5,630.3 1051.7,637.8" fill="#a9abb2"/><polygon points="1053.7,620.6 1062.9,617.5 1062.4,630.2 1053.2,633.4" fill="#c5c8d3"/><polygon points="1064.0,617.2 1072.8,614.3 1072.3,626.9 1063.6,629.9" fill="#c5c8d3"/><polygon points="1078.3,608.6 1093.5,603.7 1092.8,619.7 1077.6,624.9" fill="#cfcfd1"/><polygon points="1077.0,626.3 1093.3,620.7 1093.2,622.6 1076.9,628.2" fill="#a9abb2"/><polygon points="1079.0,611.4 1085.5,609.2 1084.9,621.7 1078.5,623.9" fill="#a9acba"/><polygon points="1086.6,608.9 1092.5,606.9 1092.0,619.3 1086.0,621.3" fill="#a9acba"/><polygon points="1114.4,596.9 1129.0,592.2 1128.1,607.7 1113.6,612.7" fill="#cfcfd1"/><polygon points="1112.9,614.0 1128.6,608.7 1128.5,610.5 1112.8,615.9" fill="#a9abb2"/><polygon points="1115.1,599.6 1121.2,597.5 1120.6,609.6 1114.4,611.7" fill="#8f8a93"/><polygon points="1122.4,597.2 1127.9,595.3 1127.3,607.3 1121.7,609.2" fill="#a9acba"/><polygon points="1133.0,590.9 1147.5,586.2 1146.6,601.4 1132.2,606.3" fill="#cfcfd1"/><polygon points="1131.5,607.7 1147.1,602.4 1146.9,604.2 1131.4,609.5" fill="#a9abb2"/><polygon points="1133.7,593.4 1139.8,591.4 1139.1,603.3 1133.0,605.4" fill="#8f8a93"/><polygon points="1140.9,591.1 1146.5,589.3 1145.7,601.0 1140.2,602.9" fill="#8f8a93"/><polygon points="1146.9,584.7 1166.4,578.4 1165.4,593.4 1146.0,599.9" fill="#cfcfd1"/><polygon points="1145.4,601.3 1165.9,594.3 1165.8,596.1 1145.2,603.1" fill="#a9abb2"/><polygon points="1147.6,587.2 1152.9,585.5 1152.2,597.2 1146.9,599.0" fill="#a9acba"/><polygon points="1154.1,585.1 1159.4,583.4 1158.7,595.0 1153.4,596.8" fill="#8f8a93"/><polygon points="1160.6,583.0 1165.3,581.4 1164.6,593.0 1159.8,594.6" fill="#4a3c3c"/><polygon points="1173.5,578.5 1191.4,572.7 1190.3,587.3 1172.5,593.4" fill="#cfcfd1"/><polygon points="1171.8,594.7 1190.8,588.2 1190.7,590.0 1171.7,596.5" fill="#a9abb2"/><polygon points="1174.2,581.0 1182.0,578.5 1181.1,589.8 1173.4,592.5" fill="#a9acba"/><polygon points="1183.1,578.1 1190.3,575.7 1189.5,587.0 1182.3,589.4" fill="#8f8a93"/><polygon points="1195.1,570.7 1207.8,566.6 1206.7,581.0 1194.0,585.3" fill="#cfcfd1"/><polygon points="1193.4,586.6 1207.2,581.8 1207.0,583.6 1193.2,588.3" fill="#a9abb2"/><polygon points="1195.8,573.1 1201.0,571.4 1200.1,582.6 1194.9,584.3" fill="#a9acba"/><polygon points="1202.1,571.0 1206.7,569.5 1205.9,580.6 1201.3,582.2" fill="#a9acba"/></g><polygon points="977.1,169.5 1117.3,184.7 1116.0,191.1 977.0,178.2" fill="#646e7e"/><polygon points="1115.2,185.4 1134.0,183.7 1242.3,194.2 1239.9,198.4 1133.8,188.9 1114.9,190.7" fill="#646e7e"/><polygon points="1115.2,185.4 1134.0,183.7 1133.8,188.9 1114.9,190.7" fill="#4d6380"/><polygon points="1133.8,188.9 1239.9,198.4 1238.3,203.3 1133.5,194.4" fill="#97979b"/><polygon points="977.5,178.2 1114.9,190.9 1114.7,195.4 977.4,184.0" fill="#97979b"/></g><rect x="946" y="158" width="1" height="551" fill="#ffffff" fill-opacity="0.36"/><rect x="279" y="709" width="668" height="1" fill="#ffffff" fill-opacity="0.28"/><rect x="279" y="156.5" width="1340" height="1.5" fill="#1283f0"/><rect x="279" y="911.6" width="1340" height="1.2" fill="#1a80e4"/><clipPath id="hc"><rect x="279" y="150" width="1345" height="770"/></clipPath><g clip-path="url(#hc)"><circle cx="949" cy="157" r="3.6" fill="#ffffff" stroke="#1283f0" stroke-width="1.4"/><circle cx="1619" cy="157" r="3.6" fill="#ffffff" stroke="#1283f0" stroke-width="1.4"/><circle cx="1619" cy="534.5" r="3.6" fill="#ffffff" stroke="#1283f0" stroke-width="1.4"/><circle cx="279" cy="912" r="3.6" fill="#ffffff" stroke="#1283f0" stroke-width="1.4"/><circle cx="949" cy="912" r="3.6" fill="#ffffff" stroke="#1283f0" stroke-width="1.4"/><circle cx="1619" cy="912" r="3.6" fill="#ffffff" stroke="#1283f0" stroke-width="1.4"/></g></svg>
<div style="left:255px;top:77px;width:1364px;height:26px;background:rgba(16,16,17,0.95);"></div><div style="left:255px;top:103px;width:1364px;height:14px;background:rgba(10,11,11,0.75);"></div><svg style="position:absolute;left:0;top:0" width="1920" height="120" viewBox="0 0 1920 120"><path d="M948.0 79V83.6M954.9 79V83.6M961.9 79V83.6M968.9 79V83.6M982.9 79V83.6M989.9 79V83.6M996.9 79V83.6M1003.8 79V83.6M1017.8 79V83.6M1024.8 79V83.6M1031.8 79V83.6M1038.8 79V83.6M1052.7 79V83.6M1059.7 79V83.6M1066.7 79V83.6M1073.7 79V83.6M1087.6 79V83.6M1094.6 79V83.6M1101.6 79V83.6M1108.6 79V83.6M1122.6 79V83.6M1129.5 79V83.6M1136.5 79V83.6M1143.5 79V83.6M1157.5 79V83.6M1164.5 79V83.6M1171.5 79V83.6M1178.4 79V83.6M1192.4 79V83.6M1199.4 79V83.6M1206.4 79V83.6M1213.4 79V83.6M1227.3 79V83.6M1234.3 79V83.6M1241.3 79V83.6M1248.3 79V83.6M1262.2 79V83.6M1269.2 79V83.6M1276.2 79V83.6M1283.2 79V83.6M1297.2 79V83.6M1304.1 79V83.6M1311.1 79V83.6M1318.1 79V83.6M1332.1 79V83.6M1339.1 79V83.6M1346.1 79V83.6M1353.0 79V83.6M1367.0 79V83.6M1374.0 79V83.6M1381.0 79V83.6M1388.0 79V83.6M1401.9 79V83.6M1408.9 79V83.6M1415.9 79V83.6M1422.9 79V83.6M1436.8 79V83.6M1443.8 79V83.6M1450.8 79V83.6M1457.8 79V83.6M1471.8 79V83.6M1478.7 79V83.6M1485.7 79V83.6M1492.7 79V83.6M1506.7 79V83.6M1513.7 79V83.6M1520.7 79V83.6M1527.6 79V83.6M1541.6 79V83.6M1548.6 79V83.6M1555.6 79V83.6M1562.6 79V83.6M1576.5 79V83.6M1583.5 79V83.6M1590.5 79V83.6M1597.5 79V83.6M1611.4 79V83.6M1618.4 79V83.6" stroke="#3c3c3e" stroke-width="1" fill="none"/><path d="M975.9 79V86.4M1010.8 79V86.4M1045.7 79V86.4M1080.7 79V86.4M1115.6 79V86.4M1150.5 79V86.4M1185.4 79V86.4M1220.3 79V86.4M1255.3 79V86.4M1290.2 79V86.4M1325.1 79V86.4M1360.0 79V86.4M1394.9 79V86.4M1429.9 79V86.4M1464.8 79V86.4M1499.7 79V86.4M1534.6 79V86.4M1569.5 79V86.4M1604.5 79V86.4" stroke="#383a3a" stroke-width="1.8" fill="none"/></svg><div class="t" style="top:84.8px;height:17px;line-height:17px;font-size:11px;color:#595d61;font-weight:700;letter-spacing:-1.0px;left:776.4px;width:400px;text-align:center;">1000</div><div class="t" style="top:84.8px;height:17px;line-height:17px;font-size:11px;color:#595d61;font-weight:700;letter-spacing:-1.0px;left:846.24px;width:400px;text-align:center;">1100</div><div class="t" style="top:84.8px;height:17px;line-height:17px;font-size:11px;color:#595d61;font-weight:700;letter-spacing:-1.0px;left:916.0799999999999px;width:400px;text-align:center;">1200</div><div class="t" style="top:84.8px;height:17px;line-height:17px;font-size:11px;color:#595d61;font-weight:700;letter-spacing:-1.0px;left:985.9200000000001px;width:400px;text-align:center;">1300</div><div class="t" style="top:84.8px;height:17px;line-height:17px;font-size:11px;color:#595d61;font-weight:700;letter-spacing:-1.0px;left:1055.76px;width:400px;text-align:center;">1400</div><div class="t" style="top:84.8px;height:17px;line-height:17px;font-size:11px;color:#595d61;font-weight:700;letter-spacing:-1.0px;left:1125.6px;width:400px;text-align:center;">1500</div><div class="t" style="top:84.8px;height:17px;line-height:17px;font-size:11px;color:#595d61;font-weight:700;letter-spacing:-1.0px;left:1195.44px;width:400px;text-align:center;">1600</div><div class="t" style="top:84.8px;height:17px;line-height:17px;font-size:11px;color:#595d61;font-weight:700;letter-spacing:-1.0px;left:1265.28px;width:400px;text-align:center;">1700</div><div class="t" style="top:84.8px;height:17px;line-height:17px;font-size:11px;color:#595d61;font-weight:700;letter-spacing:-1.0px;left:1335.12px;width:400px;text-align:center;">1800</div><div class="t" style="top:84.8px;height:17px;line-height:17px;font-size:11px;color:#595d61;font-weight:700;letter-spacing:-1.0px;left:1404.96px;width:400px;text-align:center;">1900</div><div style="left:255px;top:709px;width:24px;height:283px;background:#1e1e1e;"></div><div style="left:278px;top:709px;width:1px;height:283px;background:#8c8c8c;"></div><svg style="position:absolute;left:0;top:0" width="300" height="1032" viewBox="0 0 300 1032"><path d="M253.6 709.2H259M253.6 723.2H259M253.6 730.2H259M253.6 737.2H259M253.6 744.1H259M253.6 758.1H259M253.6 765.1H259M253.6 772.1H259M253.6 779.1H259M253.6 793.0H259M253.6 800.0H259M253.6 807.0H259M253.6 814.0H259M253.6 827.9H259M253.6 834.9H259M253.6 841.9H259M253.6 848.9H259M253.6 862.9H259M253.6 869.8H259M253.6 876.8H259M253.6 883.8H259M253.6 897.8H259M253.6 904.8H259M253.6 911.8H259M253.6 918.7H259M253.6 932.7H259M253.6 939.7H259M253.6 946.7H259M253.6 953.7H259M253.6 967.6H259M253.6 974.6H259M253.6 981.6H259M253.6 988.6H259" stroke="#434345" stroke-width="1.2" fill="none"/><path d="M253.6 716.2H261.6M253.6 751.1H261.6M253.6 786.0H261.6M253.6 821.0H261.6M253.6 855.9H261.6M253.6 890.8H261.6M253.6 925.7H261.6M253.6 960.6H261.6" stroke="#565658" stroke-width="1.9" fill="none"/></svg><div class="t" style="left:248.5px;top:708.2px;width:40px;height:16px;line-height:16px;text-align:center;font-size:10.5px;font-weight:700;letter-spacing:-0.7px;color:#c4c4c4;transform:rotate(-90deg)">800</div><div class="t" style="left:248.5px;top:778.0400000000001px;width:40px;height:16px;line-height:16px;text-align:center;font-size:10.5px;font-weight:700;letter-spacing:-0.7px;color:#c4c4c4;transform:rotate(-90deg)">900</div><div class="t" style="left:248.5px;top:847.8800000000001px;width:40px;height:16px;line-height:16px;text-align:center;font-size:10.5px;font-weight:700;letter-spacing:-0.7px;color:#c4c4c4;transform:rotate(-90deg)">1000</div><div class="t" style="left:248.5px;top:917.72px;width:40px;height:16px;line-height:16px;text-align:center;font-size:10.5px;font-weight:700;letter-spacing:-0.7px;color:#c4c4c4;transform:rotate(-90deg)">1100</div><div class="t" style="left:248.5px;top:980px;width:40px;height:16px;line-height:16px;text-align:center;font-size:10.5px;font-weight:700;color:#c4c4c4;transform:rotate(-90deg)">0</div>
<div style="left:1501px;top:85px;width:92px;height:24px;background:rgba(212,144,72,0.92);"></div><svg style="position:absolute;left:1514px;top:91px;" width="13" height="12" viewBox="0 0 13 12"><path d="M8 3 V0.8 H0.8 V11.2 H8 V9" stroke="#1a1a1a" stroke-width="1.5" fill="none"/><path d="M4.5 6 H12 M9.6 3.4 L12.4 6 L9.6 8.6" stroke="#1a1a1a" stroke-width="1.5" fill="none"/></svg><div class="t" style="top:89.0px;height:18px;line-height:18px;font-size:12px;color:#26201a;left:1533px;">退出编辑</div><div style="left:1496px;top:168.3px;width:72px;height:36.2px;background:#222326;border-radius:2px 0 0 2px;"></div><div style="left:1568px;top:168.3px;width:36px;height:36.2px;background:#0587ff;border-radius:0 2px 2px 0;"></div><svg style="position:absolute;left:1506px;top:179px;" width="16" height="16" viewBox="0 0 16 16"><circle cx="8" cy="8" r="7.3" stroke="#d0d0d0" stroke-width="1.2" fill="none"/><path d="M9.2 0.8 C8 5 8.4 11 9.6 15.2 M0.8 9.4 C5 10.8 11 10.8 15.2 9.2" stroke="#d0d0d0" stroke-width="1.1" fill="none"/></svg><div style="left:1541px;top:178px;width:17px;height:17px;background:#d4d4d4;border-radius:50%;"></div><svg style="position:absolute;left:1577px;top:178px;" width="18" height="18" viewBox="0 0 18 18"><circle cx="9" cy="9" r="7.8" stroke="#d6e8ff" stroke-width="1.3" fill="none"/><path d="M9 4.2 A4.8 4.8 0 0 1 13.8 9" stroke="#d6e8ff" stroke-width="1.3" fill="none"/></svg>
<div style="left:0px;top:0px;width:1920px;height:40px;background:#272727;"></div><div style="left:92px;top:0px;width:100px;height:40px;background:#1e1e1e;"></div><svg style="position:absolute;left:25px;top:12px;" width="14" height="14" viewBox="0 0 14 14"><path d="M7 0.5 L13.5 6 V14 H9 V9.2 H5 V14 H0.5 V6 Z" fill="#bdbdbd"/></svg><div class="t" style="top:11.5px;height:18px;line-height:18px;font-size:12px;color:#b4b4b4;left:44px;">首页</div><div class="t" style="top:11.5px;height:18px;line-height:18px;font-size:12px;color:#d8d8d8;left:117px;">测试<span class="n">2</span></div><svg style="position:absolute;left:155px;top:16px;" width="8" height="8" viewBox="0 0 8 8"><path d="M0.5 0.5 L7.5 7.5 M7.5 0.5 L0.5 7.5" stroke="#c8c8c8" stroke-width="1" fill="none"/></svg><svg style="position:absolute;left:206px;top:14px;" width="12" height="12" viewBox="0 0 12 12"><path d="M6 0 V12 M0 6 H12" stroke="#c8c8c8" stroke-width="1.4" fill="none"/></svg><div style="left:1672px;top:8px;width:36px;height:24px;background:#1f1f21;border-radius:4px;"></div><div style="left:1702px;top:8px;width:66px;height:24px;background:#3a2c23;border-radius:3px;transform:skewX(-8deg);"></div><svg style="position:absolute;left:1682px;top:14px;" width="16" height="13" viewBox="0 0 16 13"><path d="M4 0 H12 L16 4.5 L8 13 L0 4.5 Z" fill="#e9a55c"/><path d="M4 0 L8 4.5 L12 0 M0 4.5 H16 M8 4.5 V13" stroke="#f6d3a4" stroke-width="0.8" fill="none"/></svg><div class="t" style="top:12.0px;height:18px;line-height:18px;font-size:12px;color:#dba46a;left:1711px;">定制服务</div><div style="left:1758px;top:12px;width:5px;height:5px;background:#f5323c;border-radius:50%;"></div><div style="left:1790px;top:19px;width:10px;height:1px;background:#cfcfcf;"></div><svg style="position:absolute;left:1838px;top:13px;" width="14" height="13" viewBox="0 0 14 13"><path d="M0.5 3.5 H10.5 V12.5 H0.5 Z M3.5 3.5 V0.5 H13.5 V9.5 H10.5" stroke="#cfcfcf" stroke-width="1" fill="none"/></svg><svg style="position:absolute;left:1890px;top:15px;" width="10" height="10" viewBox="0 0 10 10"><path d="M0 0 L10 10 M10 0 L0 10" stroke="#cfcfcf" stroke-width="1" fill="none"/></svg>
<div style="left:0px;top:40px;width:1920px;height:37px;background:#1e1e1e;"></div><div style="left:0px;top:40px;width:4px;height:992px;background:#1d1e23;"></div><div style="left:0px;top:76px;width:1920px;height:1px;background:#232326;"></div><div style="left:80px;top:42px;width:1px;height:33px;background:#242424;"></div><div style="left:157px;top:42px;width:1px;height:33px;background:#242424;"></div><div style="left:234px;top:42px;width:1px;height:33px;background:#242424;"></div><div style="left:300px;top:42px;width:1px;height:33px;background:#242424;"></div><svg style="position:absolute;left:14px;top:51px;" width="12" height="14" viewBox="0 0 12 14"><path d="M1 0.6 H7.5 L11 4 V13.4 H1 Z M7.5 0.6 V4 H11 M3 7 H9 M3 10 H9" stroke="#d0d0d0" stroke-width="1.1" fill="none"/></svg><div class="t" style="top:49.5px;height:18px;line-height:18px;font-size:12px;color:#ededed;font-weight:500;left:33px;">项目</div><svg style="position:absolute;left:64px;top:56px;" width="9" height="6" viewBox="0 0 9 6"><path d="M0.7 0.7 L4.5 5 L8.3 0.7" fill="none" stroke="#c8c8c8" stroke-width="1.3"/></svg><svg style="position:absolute;left:92px;top:52px;" width="10" height="13" viewBox="0 0 10 13"><ellipse cx="5" cy="2.6" rx="4.3" ry="2" stroke="#d0d0d0" stroke-width="1.1" fill="none"/><path d="M0.7 2.6 V10.4 C0.7 13 9.3 13 9.3 10.4 V2.6 M0.7 6.5 C0.7 9 9.3 9 9.3 6.5" stroke="#d0d0d0" stroke-width="1.1" fill="none"/></svg><div class="t" style="top:49.5px;height:18px;line-height:18px;font-size:12px;color:#ededed;font-weight:500;left:110px;">数据</div><svg style="position:absolute;left:141px;top:56px;" width="9" height="6" viewBox="0 0 9 6"><path d="M0.7 0.7 L4.5 5 L8.3 0.7" fill="none" stroke="#c8c8c8" stroke-width="1.3"/></svg><svg style="position:absolute;left:168px;top:52px;" width="12" height="12" viewBox="0 0 12 12"><path d="M0.6 0.6 H4.8 V4.8 H0.6 Z M7.2 0.6 H11.4 V4.8 H7.2 Z M0.6 7.2 H4.8 V11.4 H0.6 Z M7.2 7.2 H11.4 V11.4 H7.2 Z" stroke="#d0d0d0" stroke-width="1.1" fill="none"/></svg><div class="t" style="top:49.5px;height:18px;line-height:18px;font-size:12px;color:#ededed;font-weight:500;left:187px;">操作</div><svg style="position:absolute;left:218px;top:56px;" width="9" height="6" viewBox="0 0 9 6"><path d="M0.7 0.7 L4.5 5 L8.3 0.7" fill="none" stroke="#c8c8c8" stroke-width="1.3"/></svg><svg style="position:absolute;left:245px;top:51px;" width="12" height="14" viewBox="0 0 12 14"><path d="M6 0.7 L11.4 3.7 V10.3 L6 13.3 L0.6 10.3 V3.7 Z M0.6 3.7 L6 6.8 L11.4 3.7 M6 6.8 V13.3" stroke="#d0d0d0" stroke-width="1.1" fill="none"/></svg><div class="t" style="top:49.5px;height:18px;line-height:18px;font-size:12px;color:#ededed;font-weight:700;letter-spacing:-0.4px;left:264px;">3D</div><svg style="position:absolute;left:284px;top:56px;" width="9" height="6" viewBox="0 0 9 6"><path d="M0.7 0.7 L4.5 5 L8.3 0.7" fill="none" stroke="#c8c8c8" stroke-width="1.3"/></svg><div style="left:1650px;top:45px;width:68px;height:27px;background:#0587ff;border-radius:3px;"></div><svg style="position:absolute;left:1661px;top:52px;" width="12" height="12" viewBox="0 0 12 12"><path d="M11.5 0.5 L0.5 5.2 L4 6.8 L9 3 L5.4 7.6 L5.4 11 L7.3 8.4 L9.6 10 Z" fill="#ffffff"/></svg><div class="t" style="top:49.5px;height:18px;line-height:18px;font-size:12px;color:#ffffff;font-weight:500;left:1679px;">发布</div><div style="left:1726px;top:45px;width:82px;height:27px;background:#1e1e1e;border-radius:3px;border:1px solid #272727;"></div><svg style="position:absolute;left:1738px;top:53px;" width="12" height="12" viewBox="0 0 12 12"><path d="M11.5 0.5 L0.5 5.2 L4 6.8 L9 3 L5.4 7.6 L5.4 11 L7.3 8.4 L9.6 10 Z" fill="#c4c4c4"/></svg><div class="t" style="top:50.5px;height:18px;line-height:18px;font-size:12px;color:#d0d0d0;left:1756px;">云托管</div><div style="left:1816px;top:45px;width:88px;height:27px;background:#1e1e1e;border-radius:3px;border:1px solid #272727;"></div><svg style="position:absolute;left:1828px;top:53px;" width="12" height="12" viewBox="0 0 12 12"><path d="M0.6 3.5 V0.6 H3.5 M8.5 0.6 H11.4 V3.5 M11.4 8.5 V11.4 H8.5 M3.5 11.4 H0.6 V8.5" stroke="#c4c4c4" stroke-width="1.2" fill="none"/></svg><div class="t" style="top:50.5px;height:18px;line-height:18px;font-size:12px;color:#e4e4e4;font-weight:500;left:1846px;">预览</div><svg style="position:absolute;left:1885px;top:56.5px;" width="12" height="6" viewBox="0 0 12 6"><path d="M0.7 0.7 L6.0 5 L11.3 0.7" fill="none" stroke="#e0e0e0" stroke-width="1.6"/></svg>
<div style="left:4px;top:77px;width:200px;height:76px;background:#1d1d1d;"></div><div style="left:4px;top:153px;width:200px;height:879px;background:#141416;"></div><svg style="position:absolute;left:10px;top:90px;" width="14" height="14" viewBox="0 0 14 14"><path d="M7 1.2 L13 4.6 L7 8 L1 4.6 Z" stroke="#e6e6e6" stroke-width="1.3" fill="none" stroke-linejoin="round"/><path d="M1 8 L7 11.4 L13 8" stroke="#e6e6e6" stroke-width="1.3" fill="none" stroke-linejoin="round"/></svg><div class="t" style="top:88.5px;height:18px;line-height:18px;font-size:12px;color:#ffffff;font-weight:700;left:29px;">组件图层</div><svg style="position:absolute;left:181px;top:91px;" width="14" height="14" viewBox="0 0 14 14"><path d="M1 1 H13 L8.3 6.8 V12.4 L5.7 11 V6.8 Z" stroke="#bdbdbd" stroke-width="1.1" fill="none" stroke-linejoin="round"/></svg><div class="t" style="top:126.5px;height:18px;line-height:18px;font-size:12px;color:#f0f0f0;font-weight:500;left:12px;">场景</div><div class="t" style="top:126.5px;height:18px;line-height:18px;font-size:12px;color:#e0e0e0;font-weight:500;left:52px;">材质</div><div class="t" style="top:126.5px;height:18px;line-height:18px;font-size:12px;color:#e0e0e0;font-weight:500;left:92px;">辅助</div><div style="left:4px;top:150px;width:40px;height:2px;background:#0587ff;"></div><div style="left:5px;top:153px;width:196px;height:26px;background:#1a2532;"></div><svg style="position:absolute;left:13px;top:164px;" width="8" height="5" viewBox="0 0 8 5"><path d="M0 0 H8 L4 5 Z" fill="#8c8c8c"/></svg><svg style="position:absolute;left:31px;top:160px;" width="13" height="12" viewBox="0 0 13 12"><path d="M1 8.5 L4.5 2 L6.5 5 L8 3.2 L12 8.5 Z M0.5 10.5 C2.5 9.5 4 11.5 6.5 10.5 C9 9.5 10.5 11.5 12.5 10.5" stroke="#9a9a9a" stroke-width="1" fill="none" stroke-linejoin="round"/></svg><div class="t" style="top:158.0px;height:18px;line-height:18px;font-size:12px;color:#d4d4d4;left:48px;">场景</div><svg style="position:absolute;left:38px;top:187px;" width="14" height="14" viewBox="0 0 14 14"><path d="M3.8 12.5 C0.5 12.5 0.5 8 3.8 8 C4.2 5 9 5 9.6 8.2 C12.6 8.2 12.6 12.5 9.6 12.5 Z" stroke="#a8a8a8" stroke-width="1.1" fill="none"/><path d="M7.5 4.8 C8.5 3 11.5 3.5 11.6 6.2 M9.5 1 V2 M13 3 L12.3 3.7 M5.6 2.4 L6.3 3.1" stroke="#a8a8a8" stroke-width="1" fill="none"/></svg><div class="t" style="top:186.0px;height:18px;line-height:18px;font-size:12px;color:#d4d4d4;left:56px;">天空</div><svg style="position:absolute;left:23px;top:218.0px;" width="5" height="8" viewBox="0 0 5 8"><path d="M0 0 V8 L5 4 Z" fill="#8c8c8c"/></svg><svg style="position:absolute;left:38px;top:216.5px;" width="13" height="12" viewBox="0 0 13 12"><path d="M0.6 2 Q0.6 0.6 2 0.6 H5 L6.5 2.6 H11 Q12.4 2.6 12.4 4 M0.6 2 V10 Q0.6 11.4 2 11.4 H11 Q12.4 11.4 12.4 10 V6 Q12.4 4.8 11 4.8 H0.6" stroke="#9c9c9c" stroke-width="1.1" fill="none"/></svg><div class="t" style="top:214.0px;height:18px;line-height:18px;font-size:12px;color:#d4d4d4;left:56px;">相机</div><svg style="position:absolute;left:23px;top:246.0px;" width="5" height="8" viewBox="0 0 5 8"><path d="M0 0 V8 L5 4 Z" fill="#8c8c8c"/></svg><svg style="position:absolute;left:38px;top:244.5px;" width="13" height="12" viewBox="0 0 13 12"><path d="M0.6 2 Q0.6 0.6 2 0.6 H5 L6.5 2.6 H11 Q12.4 2.6 12.4 4 M0.6 2 V10 Q0.6 11.4 2 11.4 H11 Q12.4 11.4 12.4 10 V6 Q12.4 4.8 11 4.8 H0.6" stroke="#9c9c9c" stroke-width="1.1" fill="none"/></svg><div class="t" style="top:242.0px;height:18px;line-height:18px;font-size:12px;color:#d4d4d4;left:56px;">模型层</div><svg style="position:absolute;left:23px;top:274.0px;" width="5" height="8" viewBox="0 0 5 8"><path d="M0 0 V8 L5 4 Z" fill="#8c8c8c"/></svg><svg style="position:absolute;left:38px;top:272.5px;" width="13" height="12" viewBox="0 0 13 12"><path d="M0.6 2 Q0.6 0.6 2 0.6 H5 L6.5 2.6 H11 Q12.4 2.6 12.4 4 M0.6 2 V10 Q0.6 11.4 2 11.4 H11 Q12.4 11.4 12.4 10 V6 Q12.4 4.8 11 4.8 H0.6" stroke="#9c9c9c" stroke-width="1.1" fill="none"/></svg><div class="t" style="top:270.0px;height:18px;line-height:18px;font-size:12px;color:#d4d4d4;left:56px;">形状</div><svg style="position:absolute;left:38px;top:300.5px;" width="13" height="12" viewBox="0 0 13 12"><path d="M0.6 2 Q0.6 0.6 2 0.6 H5 L6.5 2.6 H11 Q12.4 2.6 12.4 4 M0.6 2 V10 Q0.6 11.4 2 11.4 H11 Q12.4 11.4 12.4 10 V6 Q12.4 4.8 11 4.8 H0.6" stroke="#9c9c9c" stroke-width="1.1" fill="none"/></svg><div class="t" style="top:298.0px;height:18px;line-height:18px;font-size:12px;color:#d4d4d4;left:56px;">标绘层</div>
<div style="left:204px;top:709px;width:51px;height:323px;background:#1e1e1e;"></div><div style="left:255px;top:992px;width:1665px;height:40px;background:#1e1e1e;"></div><div style="left:255px;top:992px;width:1px;height:40px;background:#262626;"></div><div style="left:319px;top:993px;width:1px;height:39px;background:#242424;"></div><div style="left:446px;top:993px;width:1px;height:39px;background:#242424;"></div><div style="left:574px;top:993px;width:1px;height:39px;background:#242424;"></div><div style="left:607px;top:993px;width:1px;height:39px;background:#242424;"></div><div style="left:670px;top:993px;width:1px;height:39px;background:#242424;"></div><div style="left:319px;top:992px;width:127px;height:1px;background:#0587ff;"></div><div class="t" style="top:1005.5px;height:18px;line-height:18px;font-size:12px;color:#f0f0f0;font-weight:500;left:265px;">前景</div><svg style="position:absolute;left:298px;top:1000px;" width="13" height="13" viewBox="0 0 13 13"><circle cx="6.5" cy="6.5" r="5.9" stroke="#e6e6e6" stroke-width="1" fill="none"/><path d="M6.5 3.8 V9.2 M3.8 6.5 H9.2" stroke="#e6e6e6" stroke-width="1" fill="none"/></svg><svg style="position:absolute;left:329px;top:1010px;" width="10" height="10" viewBox="0 0 10 10"><path d="M0.6 0.8 H9.4 V6.8 H0.6 Z M2.6 6.8 L1.6 9.4 M7.4 6.8 L8.4 9.4" stroke="#1a86e8" stroke-width="1.1" fill="none"/></svg><div class="t" style="top:1006.5px;height:18px;line-height:18px;font-size:12px;color:#1a86e8;left:346px;">子看板<span class="n">1</span></div><svg style="position:absolute;left:457px;top:1010px;" width="10" height="10" viewBox="0 0 10 10"><path d="M0.6 0.8 H9.4 V6.8 H0.6 Z M2.6 6.8 L1.6 9.4 M7.4 6.8 L8.4 9.4" stroke="#c8c8c8" stroke-width="1.1" fill="none"/></svg><div class="t" style="top:1006.5px;height:18px;line-height:18px;font-size:12px;color:#e8e8e8;font-weight:500;left:474px;">子看板<span class="n">2</span></div><svg style="position:absolute;left:585px;top:1008px;" width="12" height="12" viewBox="0 0 12 12"><path d="M6 0 V12 M0 6 H12" stroke="#f0f0f0" stroke-width="2" fill="none"/></svg><div class="t" style="top:1005.0px;height:18px;line-height:18px;font-size:12px;color:#f0f0f0;font-weight:500;left:618px;">背景</div><svg style="position:absolute;left:650px;top:1000px;" width="13" height="13" viewBox="0 0 13 13"><circle cx="6.5" cy="6.5" r="5.9" stroke="#e6e6e6" stroke-width="1" fill="none"/><path d="M6.5 3.8 V9.2 M3.8 6.5 H9.2" stroke="#e6e6e6" stroke-width="1" fill="none"/></svg><div class="t" style="top:1005.25px;height:17.5px;line-height:17.5px;font-size:11.5px;color:#c8c8c8;font-weight:700;letter-spacing:-0.8px;right:379px;">69.84%</div><div style="left:1571px;top:998px;width:1px;height:30px;background:#242424;"></div><div style="left:1596px;top:998px;width:1px;height:30px;background:#242424;"></div><svg style="position:absolute;left:1551px;top:1005px;" width="15" height="15" viewBox="0 0 15 15"><rect x="0.6" y="0.6" width="13.8" height="13.8" stroke="#d8d8d8" stroke-width="1.2" fill="none"/><path d="M7.5 2.5 V12.5 M2.5 7.5 H12.5 M5.8 4.2 L7.5 2.5 L9.2 4.2 M5.8 10.8 L7.5 12.5 L9.2 10.8 M4.2 5.8 L2.5 7.5 L4.2 9.2 M10.8 5.8 L12.5 7.5 L10.8 9.2" stroke="#d8d8d8" stroke-width="1.1" fill="none"/></svg><svg style="position:absolute;left:1574px;top:1008px;" width="18" height="10" viewBox="0 0 18 10"><rect x="0.6" y="0.6" width="16.8" height="8.8" rx="1.5" stroke="#d8d8d8" stroke-width="1.2" fill="none"/><path d="M3 3.6 H4.4 M6 3.6 H7.4 M9 3.6 H10.4 M12 3.6 H15 M3 6.4 H15" stroke="#d8d8d8" stroke-width="1.1" fill="none" stroke-dasharray="1.6 1.2"/></svg><svg style="position:absolute;left:1599px;top:1005px;" width="16" height="16" viewBox="0 0 16 16"><rect x="0.6" y="0.6" width="14.8" height="14.8" fill="#3a3a3a" stroke="#c4c4c4" stroke-width="1.2"/><path d="M4 5 L7 8 L4 11 M8.5 11 H12" stroke="#e6e6e6" stroke-width="1.2" fill="none"/></svg><div class="t" style="top:993.75px;height:17.5px;line-height:17.5px;font-size:11.5px;color:#c6c6c6;left:1623px;">内存： <span class="s">483 / 3590 / 4096 MB&nbsp; 258 / 741 MB</span></div><div class="t" style="top:993.75px;height:17.5px;line-height:17.5px;font-size:11.5px;color:#c6c6c6;right:3px;"><span class="s">FPS</span>： <span class="s">60</span></div><div class="t" style="top:1014.75px;height:17.5px;line-height:17.5px;font-size:11.5px;color:#c6c6c6;left:1623px;">组件数<span class="s">: 3 / 3</span>&nbsp;&nbsp;&nbsp;子组件数<span class="s">: 24</span></div><div class="t" style="top:1014.75px;height:17.5px;line-height:17.5px;font-size:11.5px;color:#c6c6c6;right:3px;"><span class="s">4.6.9</span></div>
<div style="left:204px;top:77px;width:742px;height:41px;background:#1e1e1e;"></div><div style="left:214px;top:82px;width:102px;height:32px;border:1px solid #4c4c4c;border-radius:2px;"></div><svg style="position:absolute;left:230px;top:91px;" width="14" height="14" viewBox="0 0 14 14"><circle cx="6.3" cy="6.3" r="5.4" stroke="#a8a8a8" stroke-width="1.1" fill="none"/><path d="M10.2 10.2 L12.6 12.6" stroke="#a8a8a8" stroke-width="1.1"/></svg><div class="t" style="top:89.5px;height:18px;line-height:18px;font-size:12px;color:#8c8c8c;left:252px;">搜索组件</div><div style="left:325px;top:78px;width:127px;height:40px;background:#0587ff;border-radius:1px;"></div><div class="t" style="top:88.75px;height:19.5px;line-height:19.5px;font-size:13.5px;color:#ffffff;left:188.5px;width:400px;text-align:center;">资源库</div><div class="t" style="top:88.75px;height:19.5px;line-height:19.5px;font-size:13.5px;color:#c0c0c0;left:315.5px;width:400px;text-align:center;">资产库</div><svg style="position:absolute;left:889px;top:91px;" width="14" height="14" viewBox="0 0 14 14"><path d="M12.2 5.2 A5.6 5.6 0 0 0 2 4.2 M1.8 8.8 A5.6 5.6 0 0 0 12 9.8" stroke="#bdbdbd" stroke-width="1.2" fill="none"/><path d="M1.2 1.6 L1.9 4.6 L4.9 4.2 M12.8 12.4 L12.1 9.4 L9.1 9.8" stroke="#bdbdbd" stroke-width="1.2" fill="none"/></svg><svg style="position:absolute;left:920px;top:92px;" width="13" height="13" viewBox="0 0 13 13"><path d="M7 0.6 H1.6 Q0.6 0.6 0.6 1.6 V11.4 Q0.6 12.4 1.6 12.4 H11.4 Q12.4 12.4 12.4 11.4 V7" stroke="#bdbdbd" stroke-width="1.1" fill="none"/><circle cx="10.6" cy="2.6" r="1.8" stroke="#bdbdbd" stroke-width="1" fill="none"/><path d="M2.6 10.2 L7.4 5.4 M4.2 5.2 H7.6 V8.6" stroke="#bdbdbd" stroke-width="1" fill="none"/></svg>
<div style="left:204px;top:118px;width:120px;height:591px;background:#1e1e1e;"></div><svg style="position:absolute;left:221px;top:136px;" width="16" height="16" viewBox="0 0 18 18"><rect x="0" y="0" width="8" height="8" rx="1" fill="#f6a052"/><rect x="0" y="10" width="8" height="8" rx="1" fill="#f6a052"/><rect x="10" y="10" width="8" height="8" rx="1" fill="#f6a052"/><rect x="10" y="0" width="8" height="8" rx="1.5" fill="#f4f4f4"/><rect x="12.7" y="2.7" width="2.6" height="2.6" fill="#1c1c1c"/></svg><div class="t" style="top:134.0px;height:20px;line-height:20px;font-size:14px;color:#d2d2d2;left:245px;">全部</div><div class="t" style="top:135.0px;height:20px;line-height:20px;font-size:14px;color:#929292;font-weight:700;letter-spacing:-0.2px;right:1606px;transform:scaleX(0.8);transform-origin:right center;">1309</div><div style="left:206px;top:171px;width:118px;height:52px;background:#c1640f;"></div><svg style="position:absolute;left:221px;top:188px;" width="16" height="16" viewBox="0 0 18 18"><path d="M1 2 L8 1 V17 H1 Z" fill="#f4a35c"/><path d="M9 4 L17 3 V17 H9 Z" fill="#f9b877"/><path d="M3 8 H7 M3 11.5 H7 M11 8.5 H15 M11 12 H15" stroke="#fff" stroke-width="1.6"/></svg><div class="t" style="top:186.0px;height:20px;line-height:20px;font-size:14px;color:#ffffff;left:245px;">模型</div><div class="t" style="top:187.0px;height:20px;line-height:20px;font-size:14px;color:#f0c494;font-weight:700;letter-spacing:-0.2px;right:1606px;transform:scaleX(0.8);transform-origin:right center;">941</div><svg style="position:absolute;left:221px;top:240px;" width="16" height="16" viewBox="0 0 18 18"><circle cx="9" cy="9" r="8.5" fill="#f6a052"/><path d="M2.5 7 Q5 3 9 3.5 Q7 6 4 8 Z M13 12 Q15.5 9 15 6 Q16.8 10 14 13.5 Z" fill="#fff"/></svg><div class="t" style="top:238.0px;height:20px;line-height:20px;font-size:14px;color:#d2d2d2;letter-spacing:-0.9px;left:245px;">GIS</div><div class="t" style="top:239.0px;height:20px;line-height:20px;font-size:14px;color:#929292;font-weight:700;letter-spacing:-0.2px;right:1606px;transform:scaleX(0.8);transform-origin:right center;">17</div><svg style="position:absolute;left:221px;top:292px;" width="16" height="16" viewBox="0 0 18 18"><rect x="0.5" y="1" width="17" height="16" rx="1.5" fill="#f6a052"/><path d="M0.5 6 L6 1 H0.5 Z M12 17 L17.5 11 V17 Z" fill="#fff"/><path d="M9 5 Q12 9.5 9 12 Q6 9.5 9 5 Z" fill="#fff"/></svg><div class="t" style="top:290.0px;height:20px;line-height:20px;font-size:14px;color:#d2d2d2;left:245px;">地表</div><div class="t" style="top:291.0px;height:20px;line-height:20px;font-size:14px;color:#929292;font-weight:700;letter-spacing:-0.2px;right:1606px;transform:scaleX(0.8);transform-origin:right center;">6</div><svg style="position:absolute;left:221px;top:344px;" width="16" height="16" viewBox="0 0 18 18"><path d="M9 0.8 C13.5 0.8 16.5 4 16.5 8 C16.5 12 12 15.5 9 18 C6 15.5 1.5 12 1.5 8 C1.5 4 4.5 0.8 9 0.8 Z" fill="#f6a052"/><circle cx="9" cy="7.6" r="3" fill="#fff"/></svg><div class="t" style="top:342.0px;height:20px;line-height:20px;font-size:14px;color:#d2d2d2;left:245px;">标绘</div><div class="t" style="top:343.0px;height:20px;line-height:20px;font-size:14px;color:#929292;font-weight:700;letter-spacing:-0.2px;right:1606px;transform:scaleX(0.8);transform-origin:right center;">232</div><svg style="position:absolute;left:221px;top:396px;" width="16" height="16" viewBox="0 0 18 18"><circle cx="9" cy="9" r="8.5" fill="#f6a052"/><path d="M9 0.5 A8.5 8.5 0 0 1 17.5 9 H9 Z M9 17.5 A8.5 8.5 0 0 1 0.5 9 H9 Z" fill="#fff"/></svg><div class="t" style="top:394.0px;height:20px;line-height:20px;font-size:14px;color:#d2d2d2;left:245px;">材质</div><div class="t" style="top:395.0px;height:20px;line-height:20px;font-size:14px;color:#929292;font-weight:700;letter-spacing:-0.2px;right:1606px;transform:scaleX(0.8);transform-origin:right center;">68</div><svg style="position:absolute;left:221px;top:448px;" width="16" height="16" viewBox="0 0 18 18"><path d="M9 0.5 L11.6 5.8 L17.5 6.6 L13.2 10.7 L14.3 16.5 L9 13.7 L3.7 16.5 L4.8 10.7 L0.5 6.6 L6.4 5.8 Z" fill="#f6a052"/><circle cx="9" cy="9" r="2.6" fill="#fff"/><circle cx="15.5" cy="14.5" r="1.3" fill="#f6a052"/><circle cx="13" cy="17" r="1" fill="#f6a052"/></svg><div class="t" style="top:446.0px;height:20px;line-height:20px;font-size:14px;color:#d2d2d2;left:245px;">动效</div><div class="t" style="top:447.0px;height:20px;line-height:20px;font-size:14px;color:#929292;font-weight:700;letter-spacing:-0.2px;right:1606px;transform:scaleX(0.8);transform-origin:right center;">34</div><svg style="position:absolute;left:221px;top:500px;" width="16" height="16" viewBox="0 0 18 18"><path d="M9 0.5 L16.8 4.7 V13.3 L9 17.5 L1.2 13.3 V4.7 Z" fill="#f6a052"/><circle cx="9" cy="9" r="4.6" fill="#fff"/><path d="M9 9 V12.5 M9 9 L6 7.3 M9 9 L12 7.3" stroke="#f6a052" stroke-width="1.4" fill="none"/></svg><div class="t" style="top:498.0px;height:20px;line-height:20px;font-size:14px;color:#d2d2d2;left:245px;">场景</div><div class="t" style="top:499.0px;height:20px;line-height:20px;font-size:14px;color:#929292;font-weight:700;letter-spacing:-0.2px;right:1606px;transform:scaleX(0.8);transform-origin:right center;">11</div>
<div style="left:0;top:0;width:946px;height:709px;overflow:hidden"><div style="left:324px;top:118px;width:106px;height:591px;background:#18181a;overflow:hidden;"></div><div style="left:425px;top:119px;width:3px;height:352px;background:#5c5c5c;border-radius:1px;"></div><div class="t" style="top:134.5px;height:18px;line-height:18px;font-size:12px;color:#f4f4f4;font-weight:500;left:338px;">导入模型</div><div class="t" style="top:167.5px;height:18px;line-height:18px;font-size:12px;color:#f4f4f4;font-weight:500;left:338px;">默认</div><svg style="position:absolute;left:411px;top:171.3px;" width="6" height="10" viewBox="0 0 6 10"><path d="M0.7 0.7 L5 5 L0.7 9.3" fill="none" stroke="#808080" stroke-width="1.2"/></svg><div style="left:334px;top:201px;width:86px;height:1px;background:#262626;"></div><svg style="position:absolute;left:339px;top:220.5px;" width="8" height="8" viewBox="0 0 8 8"><rect x="0.5" y="0.5" width="7" height="7" stroke="#8a8a8a" stroke-width="1" fill="none"/><rect x="2.6" y="2.6" width="2.8" height="2.8" fill="#8a8a8a"/></svg><div class="t" style="top:217.0px;height:16px;line-height:16px;font-size:10px;color:#8a8a8a;left:350px;">基础模型</div><div class="t" style="top:247.0px;height:18px;line-height:18px;font-size:12px;color:#f4f4f4;font-weight:500;left:338px;">形状</div><svg style="position:absolute;left:411px;top:250.8px;" width="6" height="10" viewBox="0 0 6 10"><path d="M0.7 0.7 L5 5 L0.7 9.3" fill="none" stroke="#808080" stroke-width="1.2"/></svg><div class="t" style="top:281.0px;height:18px;line-height:18px;font-size:12px;color:#f4f4f4;font-weight:500;left:338px;">参数化模型</div><svg style="position:absolute;left:411px;top:284.8px;" width="6" height="10" viewBox="0 0 6 10"><path d="M0.7 0.7 L5 5 L0.7 9.3" fill="none" stroke="#808080" stroke-width="1.2"/></svg><div style="left:334px;top:314px;width:86px;height:1px;background:#262626;"></div><svg style="position:absolute;left:339px;top:333.5px;" width="8" height="8" viewBox="0 0 8 8"><rect x="0.5" y="0.5" width="7" height="7" stroke="#8a8a8a" stroke-width="1" fill="none"/><rect x="2.6" y="2.6" width="2.8" height="2.8" fill="#8a8a8a"/></svg><div class="t" style="top:330.0px;height:16px;line-height:16px;font-size:10px;color:#8a8a8a;left:350px;">模型库</div><div class="t" style="top:360.0px;height:18px;line-height:18px;font-size:12px;color:#1a86ff;font-weight:500;left:338px;">植被</div><svg style="position:absolute;left:411px;top:363.8px;" width="6" height="10" viewBox="0 0 6 10"><path d="M0.7 0.7 L5 5 L0.7 9.3" fill="none" stroke="#808080" stroke-width="1.2"/></svg><div class="t" style="top:394.0px;height:18px;line-height:18px;font-size:12px;color:#1a86ff;font-weight:500;left:338px;">建筑物</div><svg style="position:absolute;left:411px;top:397.8px;" width="6" height="10" viewBox="0 0 6 10"><path d="M0.7 0.7 L5 5 L0.7 9.3" fill="none" stroke="#808080" stroke-width="1.2"/></svg><div class="t" style="top:428.0px;height:18px;line-height:18px;font-size:12px;color:#f4f4f4;font-weight:500;left:338px;">交通工具</div><svg style="position:absolute;left:411px;top:431.8px;" width="6" height="10" viewBox="0 0 6 10"><path d="M0.7 0.7 L5 5 L0.7 9.3" fill="none" stroke="#808080" stroke-width="1.2"/></svg><div class="t" style="top:462.0px;height:18px;line-height:18px;font-size:12px;color:#f4f4f4;font-weight:500;left:338px;">室外装饰</div><svg style="position:absolute;left:411px;top:465.8px;" width="6" height="10" viewBox="0 0 6 10"><path d="M0.7 0.7 L5 5 L0.7 9.3" fill="none" stroke="#808080" stroke-width="1.2"/></svg><div class="t" style="top:496.0px;height:18px;line-height:18px;font-size:12px;color:#f4f4f4;font-weight:500;left:338px;">家具装饰</div><svg style="position:absolute;left:411px;top:499.8px;" width="6" height="10" viewBox="0 0 6 10"><path d="M0.7 0.7 L5 5 L0.7 9.3" fill="none" stroke="#808080" stroke-width="1.2"/></svg><div class="t" style="top:530.0px;height:18px;line-height:18px;font-size:12px;color:#f4f4f4;font-weight:500;left:338px;">设备</div><svg style="position:absolute;left:411px;top:533.8px;" width="6" height="10" viewBox="0 0 6 10"><path d="M0.7 0.7 L5 5 L0.7 9.3" fill="none" stroke="#808080" stroke-width="1.2"/></svg><div class="t" style="top:564.0px;height:18px;line-height:18px;font-size:12px;color:#f4f4f4;font-weight:500;left:338px;">交通设施</div><svg style="position:absolute;left:411px;top:567.8px;" width="6" height="10" viewBox="0 0 6 10"><path d="M0.7 0.7 L5 5 L0.7 9.3" fill="none" stroke="#808080" stroke-width="1.2"/></svg><div class="t" style="top:598.0px;height:18px;line-height:18px;font-size:12px;color:#f4f4f4;font-weight:500;left:338px;">人和动物</div><svg style="position:absolute;left:411px;top:601.8px;" width="6" height="10" viewBox="0 0 6 10"><path d="M0.7 0.7 L5 5 L0.7 9.3" fill="none" stroke="#808080" stroke-width="1.2"/></svg><div class="t" style="top:632.0px;height:18px;line-height:18px;font-size:12px;color:#f4f4f4;font-weight:500;left:338px;">环境</div><svg style="position:absolute;left:411px;top:635.8px;" width="6" height="10" viewBox="0 0 6 10"><path d="M0.7 0.7 L5 5 L0.7 9.3" fill="none" stroke="#808080" stroke-width="1.2"/></svg><div class="t" style="top:666.0px;height:18px;line-height:18px;font-size:12px;color:#f4f4f4;font-weight:500;left:338px;"><span class="n">3D</span>地图</div><svg style="position:absolute;left:411px;top:669.8px;" width="6" height="10" viewBox="0 0 6 10"><path d="M0.7 0.7 L5 5 L0.7 9.3" fill="none" stroke="#808080" stroke-width="1.2"/></svg><div class="t" style="top:700.0px;height:18px;line-height:18px;font-size:12px;color:#f4f4f4;font-weight:500;left:338px;">商品样品</div><svg style="position:absolute;left:411px;top:703.8px;" width="6" height="10" viewBox="0 0 6 10"><path d="M0.7 0.7 L5 5 L0.7 9.3" fill="none" stroke="#808080" stroke-width="1.2"/></svg></div>
<div style="left:430px;top:118px;width:516px;height:591px;overflow:hidden;background:#141416"><svg style="position:absolute;left:10px;top:83px;overflow:hidden" width="90" height="90" viewBox="0 0 90 90"><rect width="90" height="90" fill="#1c1c1c"/><polygon points="39.0,3.0 49.0,3.0 49.0,9.0 39.0,9.0" fill="#b4b4ba"/><polygon points="27.0,9.0 50.0,10.0 50.0,87.0 27.0,82.0" fill="#c0c0c6"/><polygon points="50.0,10.0 63.5,8.0 63.5,83.0 50.0,87.0" fill="#d2d2d6"/><polygon points="27.0,76.2 50.0,80.8 50.0,87.0 27.0,82.0" fill="#b8a078"/><polygon points="50.0,80.8 63.5,77.0 63.5,83.0 50.0,87.0" fill="#b8a078"/><path d="M28.4 13.7L48.6 14.8M28.4 17.1L48.6 18.4M28.4 20.5L48.6 21.9M28.4 23.9L48.6 25.5M28.4 27.3L48.6 29.1M28.4 30.7L48.6 32.6M28.4 34.1L48.6 36.2M28.4 37.5L48.6 39.8M28.4 40.9L48.6 43.3M28.4 44.3L48.6 46.9M28.4 47.7L48.6 50.5M28.4 51.2L48.6 54.1M28.4 54.6L48.6 57.6M28.4 58.0L48.6 61.2M28.4 61.4L48.6 64.8M28.4 64.8L48.6 68.3M28.4 68.2L48.6 71.9M28.4 71.6L48.6 75.5M28.4 75.0L48.6 79.0M28.4 78.4L48.6 82.6" stroke="#5c5862" stroke-width="1.82" fill="none" stroke-dasharray="2.6 1"/><path d="M50.8 14.7L62.7 12.9M50.8 18.3L62.7 16.4M50.8 21.9L62.7 19.9M50.8 25.5L62.7 23.4M50.8 29.0L62.7 26.8M50.8 32.6L62.7 30.3M50.8 36.2L62.7 33.8M50.8 39.8L62.7 37.3M50.8 43.3L62.7 40.8M50.8 46.9L62.7 44.3M50.8 50.5L62.7 47.8M50.8 54.1L62.7 51.3M50.8 57.6L62.7 54.8M50.8 61.2L62.7 58.3M50.8 64.8L62.7 61.8M50.8 68.4L62.7 65.3M50.8 71.9L62.7 68.8M50.8 75.5L62.7 72.3M50.8 79.1L62.7 75.7M50.8 82.7L62.7 79.2" stroke="#5c5862" stroke-width="1.93" fill="none" stroke-dasharray="2.4 1"/><path d="M49.5 14L50.5 84" stroke="#6a6670" stroke-width="1.6"/><path d="M30 40H47M52 36H62M31 70H46" stroke="#a84a3a" stroke-width="1" stroke-dasharray="2 4" opacity="0.8"/></svg><div class="t" style="left:-10px;width:130px;text-align:center;top:175.5px;height:18px;line-height:18px;font-size:12px;color:#e2e2e2">高层建筑</div><svg style="position:absolute;left:110px;top:83px;overflow:hidden" width="90" height="90" viewBox="0 0 90 90"><rect width="90" height="90" fill="#1c1c1c"/><polygon points="36.0,10.0 54.0,10.0 54.0,14.0 36.0,14.0" fill="#77737d"/><polygon points="29.8,14.0 45.9,15.5 45.9,77.3 29.8,74.0" fill="#56525e"/><polygon points="45.9,15.5 62.0,13.0 62.0,74.0 45.9,77.3" fill="#635f6b"/><polygon points="29.8,69.2 45.9,72.4 45.9,77.3 29.8,74.0" fill="#a89878"/><polygon points="45.9,72.4 62.0,69.1 62.0,74.0 45.9,77.3" fill="#a89878"/><path d="M30.8 18.0L44.9 19.5M30.8 21.2L44.9 22.7M30.8 24.3L44.9 25.8M30.8 27.4L44.9 29.0M30.8 30.5L44.9 32.2M30.8 33.6L44.9 35.4M30.8 36.7L44.9 38.6M30.8 39.8L44.9 41.8M30.8 42.9L44.9 45.0M30.8 46.0L44.9 48.2M30.8 49.1L44.9 51.3M30.8 52.2L44.9 54.5M30.8 55.3L44.9 57.7M30.8 58.4L44.9 60.9M30.8 61.5L44.9 64.1M30.8 64.6L44.9 67.3M30.8 67.7L44.9 70.5M30.8 70.8L44.9 73.7" stroke="#b8b0a8" stroke-width="1.67" fill="none" stroke-dasharray="1.2 1.6"/><path d="M46.9 19.4L61.0 17.2M46.9 22.6L61.0 20.3M46.9 25.8L61.0 23.5M46.9 29.0L61.0 26.6M46.9 32.2L61.0 29.8M46.9 35.4L61.0 32.9M46.9 38.6L61.0 36.1M46.9 41.7L61.0 39.2M46.9 44.9L61.0 42.4M46.9 48.1L61.0 45.6M46.9 51.3L61.0 48.7M46.9 54.5L61.0 51.9M46.9 57.7L61.0 55.0M46.9 60.9L61.0 58.2M46.9 64.1L61.0 61.3M46.9 67.3L61.0 64.5M46.9 70.5L61.0 67.6M46.9 73.7L61.0 70.8" stroke="#b8b0a8" stroke-width="1.72" fill="none" stroke-dasharray="1.2 1.6"/></svg><div class="t" style="left:90px;width:130px;text-align:center;top:175.5px;height:18px;line-height:18px;font-size:12px;color:#e2e2e2">高层建筑<span class="n">B</span></div><svg style="position:absolute;left:210px;top:83px;overflow:hidden" width="90" height="90" viewBox="0 0 90 90"><rect width="90" height="90" fill="#1c1c1c"/><polygon points="5.0,21.0 50.0,17.0 85.0,24.0 34.0,29.0" fill="#d6d4d8"/><polygon points="5.0,21.0 34.0,29.0 34.0,77.0 7.0,59.0" fill="#c6c0cc"/><polygon points="34.0,29.0 85.0,24.0 84.0,69.0 34.0,77.0" fill="#6c6c6e"/><polygon points="41.0,37.0 79.0,32.0 79.0,37.0 41.0,42.5" fill="#20221e"/><polygon points="41.0,51.0 79.0,45.0 79.0,50.0 41.0,56.5" fill="#20221e"/><path d="M43 39.5L78 34.5M43 53.5L78 47.5" stroke="#e8e4c8" stroke-width="2.2" stroke-dasharray="4 2.5"/><polygon points="41.0,64.0 53.0,62.5 53.0,73.0 41.0,75.0" fill="#d0d4d8"/><polygon points="55.0,62.0 65.0,60.5 65.0,71.0 55.0,72.7" fill="#d0d4d8"/><polygon points="67.0,60.0 77.0,58.5 77.0,68.5 67.0,70.0" fill="#4a5258"/><circle cx="72" cy="14.8" r="8.2" fill="#1c1408" stroke="#b27c38" stroke-width="1.5"/><path d="M68 18.2 L67.2 13.2 L69.8 15 L72 11.4 L74.2 15 L76.8 13.2 L76 18.2 Z" fill="#eaa650"/></svg><div class="t" style="left:190px;width:130px;text-align:center;top:175.5px;height:18px;line-height:18px;font-size:12px;color:#e2e2e2">矮房子<span class="n">001</span></div><svg style="position:absolute;left:310px;top:83px;overflow:hidden" width="90" height="90" viewBox="0 0 90 90"><rect width="90" height="90" fill="#1c1c1c"/><polygon points="3.8,30.3 9.5,28.2 57.5,47.0 57.5,86.6 5.9,64.7" fill="#7f7b85"/><polygon points="9.5,25.1 26.2,19.9 50.2,35.0 50.2,40.8 57.5,47.0 9.5,28.2" fill="#8c8892"/><polygon points="50.2,35.5 79.3,34.5 83.5,48.0 82.5,59.5 77.2,72.0 57.5,86.6 57.5,47.0 50.2,40.8" fill="#c2c0c8"/><polygon points="26.2,19.1 50.2,12.6 73.6,27.2 51.2,35.1" fill="#7a7a7c"/><polygon points="6.4,24.3 26.2,18.4 26.8,19.5 7.5,25.3" fill="#2a2224"/><polygon points="57.5,58.5 83.5,47.2 83.5,52.2 57.5,63.7" fill="#aaa6b0"/><polygon points="57.5,69.9 82.5,58.5 82.5,63.7 57.5,75.1" fill="#aaa6b0"/><polygon points="50.7,36.6 63.7,34.0 63.7,39.7 50.7,42.0" fill="#f2f2f2"/><polygon points="59.5,49.6 67.9,47.0 67.9,55.3 59.5,57.9" fill="#f2f2f2"/><polygon points="70.0,46.0 77.2,43.4 77.2,51.2 70.0,53.8" fill="#f2f2f2"/><polygon points="58.5,63.7 64.8,61.6 64.8,67.8 58.5,69.9" fill="#ededed"/><polygon points="68.9,59.5 77.2,56.6 77.2,61.6 68.9,64.5" fill="#ededed"/><polygon points="58.5,76.2 66.8,73.6 66.8,80.3 58.5,82.9" fill="#1c1c20"/><polygon points="72.6,68.9 75.7,67.8 75.7,73.0 72.6,74.3" fill="#f0f0f0"/><circle cx="72" cy="14.8" r="8.2" fill="#1c1408" stroke="#b27c38" stroke-width="1.5"/><path d="M68 18.2 L67.2 13.2 L69.8 15 L72 11.4 L74.2 15 L76.8 13.2 L76 18.2 Z" fill="#eaa650"/></svg><div class="t" style="left:290px;width:130px;text-align:center;top:175.5px;height:18px;line-height:18px;font-size:12px;color:#e2e2e2">矮房子<span class="n">002</span></div><svg style="position:absolute;left:410px;top:83px;overflow:hidden" width="90" height="90" viewBox="0 0 90 90"><rect width="90" height="90" fill="#1c1c1c"/><polygon points="10.1,23.0 53.3,27.2 53.3,79.3 17.9,72.0 13.7,59.5 10.1,58.5" fill="#8d8995"/><polygon points="53.3,27.2 67.9,24.6 66.8,77.2 53.3,79.3" fill="#9c98a4"/><polygon points="67.9,24.6 80.4,22.0 83.5,28.2 82.5,61.6 66.8,77.2" fill="#dedee2"/><polygon points="1.7,18.9 36.1,4.3 55.4,6.4 87.1,17.8 73.1,26.7 53.3,27.2 10.1,22.5" fill="#3f78aa"/><polygon points="80.4,24.1 88.7,27.7 86.6,31.4 80.4,29.3" fill="#4a82b4"/><path d="M41.8 10.3L10.6 22.2M41.8 10.3L53.3 27.0M55.4 6.6L73.1 26.5M1.7 18.9L36.1 4.5" stroke="#dfe6ee" stroke-width="0.9" fill="none"/><polygon points="20.5,25.1 30.9,26.2 30.9,34.7 20.5,33.5" fill="#2e2a2c"/><polygon points="36.6,27.0 49.1,28.2 49.1,36.8 36.6,35.3" fill="#2e2a2c"/><polygon points="20.5,38.7 30.9,39.9 30.9,47.4 20.5,46.0" fill="#2e2a2c"/><polygon points="36.6,40.8 49.1,42.2 49.1,49.9 36.6,48.2" fill="#2e2a2c"/><polygon points="21.5,26.7 29.9,27.5 29.9,32.9 21.5,32.0" fill="#e6e2c0"/><polygon points="37.7,28.6 48.1,29.6 48.1,35.0 37.7,33.9" fill="#e6e2c0"/><polygon points="21.5,40.5 29.9,41.6 29.9,46.0 21.5,44.9" fill="#e6e2c0"/><polygon points="37.7,42.6 48.1,43.9 48.1,48.2 37.7,47.0" fill="#e6e2c0"/><polygon points="37.7,55.3 43.7,56.1 43.7,65.8 37.7,64.7" fill="#3a3634"/><polygon points="21.5,52.2 29.3,53.2 29.3,62.6 21.5,61.4" fill="#7e7a86"/><polygon points="59.0,28.2 63.9,27.6 63.9,37.6 59.0,38.2" fill="#2a2624"/><polygon points="59.0,43.4 63.9,42.8 63.9,52.2 59.0,52.7" fill="#2a2624"/><polygon points="60.1,31.4 63.1,31.0 63.1,37.1 60.1,37.5" fill="#d8d2a8"/><polygon points="58.5,56.9 62.7,56.4 62.7,63.7 58.5,64.2" fill="#cfc9a4"/><polygon points="72.0,53.2 75.2,52.2 75.2,60.5 72.0,61.6" fill="#6a6670"/><polygon points="76.7,47.0 81.4,45.4 81.4,52.2 76.7,53.8" fill="#b8c0c8"/><polygon points="1.7,69.9 8.5,59.5 13.7,58.5 17.9,63.7 11.6,75.1 2.3,74.1" fill="#c9c9cd"/><polygon points="46.0,80.3 50.2,69.9 65.8,68.9 66.8,77.2 58.5,87.6 47.0,85.5" fill="#c9c9cd"/><polygon points="17.9,64.7 50.2,69.9 48.1,76.2 17.9,72.0" fill="#77737d"/><circle cx="72" cy="14.8" r="8.2" fill="#1c1408" stroke="#b27c38" stroke-width="1.5"/><path d="M68 18.2 L67.2 13.2 L69.8 15 L72 11.4 L74.2 15 L76.8 13.2 L76 18.2 Z" fill="#eaa650"/></svg><div class="t" style="left:390px;width:130px;text-align:center;top:175.5px;height:18px;line-height:18px;font-size:12px;color:#e2e2e2">别墅<span class="n">A</span></div><svg style="position:absolute;left:10px;top:205px;overflow:hidden" width="90" height="90" viewBox="0 0 90 90"><rect width="90" height="90" fill="#1c1c1c"/><polygon points="2.2,32.2 39.8,34.5 39.8,73.6 10.8,70.4 5.4,51.7" fill="#55555b"/><polygon points="77.2,23.6 89.7,22.0 89.0,72.0 77.2,70.4" fill="#4a4a52"/><polygon points="58.5,39.2 77.2,34.5 77.2,70.4 58.5,76.7" fill="#aeaeb2"/><polygon points="39.8,36.1 58.5,39.2 58.5,76.7 39.8,72.0" fill="#3a3a3e"/><polygon points="47.6,20.4 58.5,23.6 77.2,25.1 77.2,36.1 58.5,39.2 39.8,35.3" fill="#9c9ca2"/><polygon points="10.8,22.0 34.3,4.8 64.7,11.1 46.0,27.5" fill="#4b4d51"/><polygon points="0.7,31.4 38.2,33.7 38.2,40.0 2.2,36.1" fill="#a6a6aa"/><polygon points="2.2,50.1 38.2,56.4 38.2,61.4 3.0,54.8" fill="#9a9a9e"/><polygon points="10.8,40.0 17.9,41.5 17.9,51.7 10.8,49.3" fill="#e9e2a6"/><polygon points="10.8,58.7 20.2,61.1 20.2,71.2 10.8,68.1" fill="#e9e2a6"/><polygon points="42.1,40.8 54.6,43.1 54.6,57.2 42.1,54.0" fill="#e9e2a6"/><polygon points="42.1,59.5 54.6,62.3 54.6,75.1 42.1,72.0" fill="#e9e2a6"/><polygon points="81.9,26.7 87.4,25.9 87.4,36.1 81.9,36.8" fill="#e9e2a6"/><polygon points="81.2,39.2 86.9,38.4 86.9,47.0 81.2,47.8" fill="#e9e2a6"/><polygon points="81.2,50.1 86.6,49.3 86.6,56.4 81.2,57.2" fill="#e9e2a6"/><polygon points="80.7,59.5 86.3,58.7 86.3,65.8 80.7,66.5" fill="#e9e2a6"/><polygon points="72.2,39.2 74.9,38.6 74.9,48.6 72.2,49.2" fill="#d8d2a0"/><polygon points="71.6,57.9 74.1,57.3 74.1,66.5 71.6,67.3" fill="#d8d2a0"/><polygon points="58.5,75.1 77.2,69.2 89.0,70.8 89.0,73.9 58.5,83.9" fill="#8c3c2c"/><polygon points="8.5,65.8 27.2,70.4 27.2,73.9 8.5,69.8" fill="#7c3024"/><polygon points="17.9,78.2 30.4,70.4 56.9,79.8 46.0,87.3" fill="#96969a"/><polygon points="19.4,75.1 29.6,68.9 33.5,70.4 22.6,77.0" fill="#b4b4b8"/><circle cx="72" cy="14.8" r="8.2" fill="#1c1408" stroke="#b27c38" stroke-width="1.5"/><path d="M68 18.2 L67.2 13.2 L69.8 15 L72 11.4 L74.2 15 L76.8 13.2 L76 18.2 Z" fill="#eaa650"/></svg><div class="t" style="left:-10px;width:130px;text-align:center;top:297.5px;height:18px;line-height:18px;font-size:12px;color:#e2e2e2">别墅<span class="n">2</span></div><svg style="position:absolute;left:110px;top:205px;overflow:hidden" width="90" height="90" viewBox="0 0 90 90"><rect width="90" height="90" fill="#1c1c1c"/><polygon points="28.0,3.2 42.9,2.5 53.8,4.8 53.8,15.7 36.6,16.5 28.0,14.2" fill="#d6d6d6"/><polygon points="42.9,6.4 48.3,6.7 48.3,15.4 42.9,15.4" fill="#b8b4ac"/><polygon points="9.3,16.5 28.8,13.4 81.9,15.0 61.6,20.4 19.4,22.0" fill="#dedad4"/><polygon points="9.3,17.3 19.4,22.0 30.4,89.2 14.0,75.1" fill="#aaa294"/><polygon points="19.4,22.0 81.9,15.0 79.6,70.4 30.4,89.2" fill="#c6c0b4"/><path d="M17.9 20.4L21.8 81.4" stroke="#cfc9bd" stroke-width="2.2"/><path d="M28.8 30.2L73.7 23.8M30.3 40.5L73.6 32.7M31.7 50.7L73.5 41.6M33.2 61.0L73.4 50.6M34.6 71.3L73.3 59.5M36.1 81.6L73.2 68.4" stroke="#9fb0b8" stroke-width="6.40" fill="none" stroke-dasharray="5.4 1.6"/><path d="M29.4 30.1L73.1 23.9M30.9 40.4L73.0 32.8M32.3 50.6L73.0 41.7M33.7 60.9L72.9 50.7M35.1 71.2L72.8 59.6M36.6 81.4L72.7 68.6" stroke="#e3eaee" stroke-width="5.00" fill="none" stroke-dasharray="2 5"/><path d="M34.9 43.8L69.5 37.1M35.9 51.4L69.6 43.8M36.8 59.0L69.6 50.6M37.8 66.5L69.7 57.3M38.8 74.1L69.7 64.1M39.7 81.7L69.7 70.8" stroke="#4a4e56" stroke-width="4.00" fill="none" stroke-dasharray="1.4 12.6"/><circle cx="72" cy="14.8" r="8.2" fill="#1c1408" stroke="#b27c38" stroke-width="1.5"/><path d="M68 18.2 L67.2 13.2 L69.8 15 L72 11.4 L74.2 15 L76.8 13.2 L76 18.2 Z" fill="#eaa650"/></svg><div class="t" style="left:90px;width:130px;text-align:center;top:297.5px;height:18px;line-height:18px;font-size:12px;color:#e2e2e2">公寓<span class="n">1</span></div><svg style="position:absolute;left:210px;top:205px;overflow:hidden" width="90" height="90" viewBox="0 0 90 90"><rect width="90" height="90" fill="#1c1c1c"/><polygon points="23.3,6.4 38.2,10.3 39.8,88.4 25.7,79.0" fill="#857f75"/><polygon points="38.2,10.3 69.4,4.8 67.9,75.1 39.8,88.4" fill="#a29a8c"/><polygon points="23.3,6.4 53.8,1.7 69.4,4.8 38.2,10.3" fill="#b4b0aa"/><path d="M39.8 14.6L67.8 9.3M39.9 17.6L67.7 12.0M39.9 20.6L67.7 14.8M40.0 23.7L67.6 17.5M40.1 26.7L67.6 20.2M40.1 29.7L67.5 23.0M40.2 32.7L67.5 25.7M40.2 35.7L67.4 28.5M40.3 38.7L67.4 31.2M40.3 41.7L67.3 33.9M40.4 44.7L67.2 36.7M40.4 47.8L67.2 39.4M40.5 50.8L67.1 42.2M40.5 53.8L67.1 44.9M40.6 56.8L67.0 47.6M40.7 59.8L67.0 50.4M40.7 62.8L66.9 53.1M40.8 65.8L66.9 55.9M40.8 68.8L66.8 58.6M40.9 71.9L66.8 61.3M40.9 74.9L66.7 64.1M41.0 77.9L66.6 66.8M41.0 80.9L66.6 69.6M41.1 83.9L66.5 72.3" stroke="#4a4844" stroke-width="1.90" fill="none" stroke-dasharray="1.5 1.1"/><path d="M25.6 11.3L36.2 14.3M25.6 14.1L36.3 17.3M25.7 17.0L36.3 20.3M25.8 19.8L36.4 23.3M25.9 22.7L36.5 26.3M26.0 25.5L36.5 29.3M26.1 28.4L36.6 32.3M26.2 31.2L36.7 35.3M26.2 34.0L36.7 38.3M26.3 36.9L36.8 41.3M26.4 39.7L36.9 44.3M26.5 42.6L36.9 47.3M26.6 45.4L37.0 50.3M26.7 48.3L37.1 53.3M26.8 51.1L37.1 56.3M26.9 54.0L37.2 59.3M26.9 56.8L37.2 62.3M27.0 59.6L37.3 65.3M27.1 62.5L37.4 68.3M27.2 65.3L37.4 71.3M27.3 68.2L37.5 74.3M27.4 71.0L37.6 77.3M27.5 73.9L37.6 80.3M27.5 76.7L37.7 83.3" stroke="#45433f" stroke-width="1.80" fill="none" stroke-dasharray="1.4 1.2"/><path d="M40.8 15.9L66.8 10.8M40.9 22.0L66.7 16.3M41.0 28.0L66.6 21.8M41.1 34.0L66.5 27.3M41.2 40.0L66.4 32.8M41.3 46.0L66.3 38.3M41.4 52.0L66.2 43.8M41.5 58.0L66.1 49.3M41.6 64.0L66.0 54.8M41.7 70.0L65.9 60.3M41.8 76.0L65.8 65.8M41.9 82.0L65.7 71.3" stroke="#d8b24e" stroke-width="1.30" fill="none" stroke-dasharray="1 8"/><path d="M26.5 13.0L35.4 15.6M26.7 18.7L35.5 21.5M26.8 24.4L35.6 27.5M27.0 30.1L35.8 33.5M27.2 35.8L35.9 39.4M27.3 41.5L36.0 45.4M27.5 47.3L36.2 51.4M27.7 53.0L36.3 57.4M27.8 58.7L36.4 63.3M28.0 64.4L36.6 69.3M28.2 70.1L36.7 75.3M28.3 75.8L36.8 81.2" stroke="#7aa05a" stroke-width="1.20" fill="none" stroke-dasharray="1 5"/><path d="M38.5 10.4L40.1 88.2" stroke="#b0a898" stroke-width="1.6"/><circle cx="72" cy="14.8" r="8.2" fill="#1c1408" stroke="#b27c38" stroke-width="1.5"/><path d="M68 18.2 L67.2 13.2 L69.8 15 L72 11.4 L74.2 15 L76.8 13.2 L76 18.2 Z" fill="#eaa650"/></svg><div class="t" style="left:190px;width:130px;text-align:center;top:297.5px;height:18px;line-height:18px;font-size:12px;color:#e2e2e2">公寓<span class="n">2</span></div><svg style="position:absolute;left:310px;top:205px;overflow:hidden" width="90" height="90" viewBox="0 0 90 90"><rect width="90" height="90" fill="#1c1c1c"/><polygon points="2.8,28.2 20.0,32.4 20.2,83.5 6.4,72.0" fill="#4c1b17"/><polygon points="8.5,31.9 12.5,32.6 13.5,79.3 9.8,75.6" fill="#56646c"/><polygon points="16.8,33.5 35.1,32.4 35.6,79.3 20.2,85.5" fill="#e8e8ea"/><polygon points="40.8,32.9 88.2,22.0 82.5,67.8 41.8,83.5" fill="#e4e4e6"/><path d="M17.0 36.0L35.1 34.7M17.3 41.0L35.1 39.2M17.6 46.0L35.2 43.7M18.0 51.0L35.2 48.2M18.3 56.0L35.3 52.7M18.6 61.0L35.3 57.2M18.9 66.0L35.4 61.7M19.2 71.0L35.4 66.2M19.6 76.0L35.5 70.7M19.9 81.0L35.5 75.2" stroke="#0c0c0e" stroke-width="2.10" fill="none"/><path d="M40.8 35.4L87.9 24.2M40.9 40.3L87.4 28.7M41.0 45.2L86.8 33.1M41.1 50.1L86.2 37.6M41.2 55.0L85.7 42.0M41.3 59.9L85.1 46.5M41.4 64.8L84.6 50.9M41.5 69.7L84.0 55.3M41.7 74.6L83.5 59.8M41.8 79.5L82.9 64.2" stroke="#0c0c0e" stroke-width="2.20" fill="none"/><polygon points="35.1,31.9 41.0,32.6 42.0,81.9 35.6,79.5" fill="#561e18"/><polygon points="0.2,26.2 18.9,14.7 59.5,7.4 89.8,17.8 88.2,22.5 40.8,33.2 20.0,32.9 2.3,29.3" fill="#e6e6e8"/><polygon points="25.2,18.4 62.7,14.7 63.7,19.1 34.5,25.3 25.2,23.0" fill="#5e1e18"/><polygon points="18.4,14.7 59.5,7.4 65.3,15.5 26.2,19.6" fill="#efeff0"/><polygon points="20.2,81.4 35.6,77.2 35.6,80.3 23.3,85.5" fill="#e0e0e2"/><circle cx="72" cy="14.8" r="8.2" fill="#1c1408" stroke="#b27c38" stroke-width="1.5"/><path d="M68 18.2 L67.2 13.2 L69.8 15 L72 11.4 L74.2 15 L76.8 13.2 L76 18.2 Z" fill="#eaa650"/></svg><div class="t" style="left:290px;width:130px;text-align:center;top:297.5px;height:18px;line-height:18px;font-size:12px;color:#e2e2e2">公寓<span class="n">3</span></div><svg style="position:absolute;left:410px;top:205px;overflow:hidden" width="90" height="90" viewBox="0 0 90 90"><rect width="90" height="90" fill="#1c1c1c"/><polygon points="1.2,17.8 8.0,16.3 88.7,19.4 88.2,61.6 8.5,66.3 1.7,62.6" fill="#d9d9dd"/><polygon points="1.2,17.8 8.0,16.8 8.5,66.3 1.7,62.6" fill="#c6c6cc"/><path d="M2.4 26.3L7.0 26.2M2.5 33.8L7.1 34.2M2.6 41.3L7.1 42.2M2.7 48.8L7.2 50.1M2.8 56.4L7.3 58.1" stroke="#25428e" stroke-width="3.20" fill="none" stroke-dasharray="3 9"/><path d="M13.9 27.2L84.3 27.2M13.9 35.2L84.2 34.6M13.9 43.2L84.1 42.0M13.9 51.2L84.0 49.3M13.9 59.2L83.9 56.7" stroke="#2b323e" stroke-width="6.00" fill="none" stroke-dasharray="7.2 5.1"/><path d="M15.1 25.9L83.1 26.0M15.1 33.9L83.0 33.4M15.1 41.9L82.9 40.8M15.1 49.9L82.8 48.2M15.1 57.9L82.8 55.5" stroke="#1f3f9a" stroke-width="3.00" fill="none" stroke-dasharray="5 7.3"/><path d="M13.9 27.2L84.3 27.2M13.9 35.2L84.2 34.6M13.9 43.2L84.1 42.0M13.9 51.2L84.0 49.3M13.9 59.2L83.9 56.7" stroke="#8c2a24" stroke-width="6.00" fill="none" stroke-dasharray="2 200"/><circle cx="72" cy="14.8" r="8.2" fill="#1c1408" stroke="#b27c38" stroke-width="1.5"/><path d="M68 18.2 L67.2 13.2 L69.8 15 L72 11.4 L74.2 15 L76.8 13.2 L76 18.2 Z" fill="#eaa650"/></svg><div class="t" style="left:390px;width:130px;text-align:center;top:297.5px;height:18px;line-height:18px;font-size:12px;color:#e2e2e2">宿舍楼</div><svg style="position:absolute;left:10px;top:327px;overflow:hidden" width="90" height="90" viewBox="0 0 90 90"><rect width="90" height="90" fill="#1c1c1c"/><polygon points="10.8,15.7 23.3,22.0 27.2,87.6 14.0,72.0" fill="#8a7a86"/><polygon points="23.3,22.0 81.9,20.4 78.8,73.6 42.9,87.6 27.2,87.6" fill="#1e2a36"/><path d="M25.4 26.8L80.6 24.4M26.6 33.9L80.3 30.1M27.8 40.9L80.0 35.8M29.0 48.0L79.7 41.5M30.2 55.0L79.4 47.2M31.4 62.1L79.0 52.9M32.7 69.1L78.7 58.6M33.9 76.2L78.4 64.2M35.1 83.3L78.1 69.9" stroke="#2a5e92" stroke-width="2.90" fill="none"/><path d="M26.0 30.5L80.4 27.3M27.2 37.5L80.1 33.0M28.4 44.6L79.8 38.7M29.6 51.6L79.5 44.4M30.9 58.7L79.2 50.1M32.1 65.7L78.9 55.8M33.3 72.8L78.6 61.5M34.5 79.8L78.3 67.2M35.7 86.9L78.0 72.9" stroke="#e4e2e0" stroke-width="1.00" fill="none"/><path d="M35.4 23.8L70.2 22.6M36.3 30.6L70.2 28.6M37.2 37.4L70.2 34.5M38.2 44.2L70.2 40.5M39.1 51.0L70.1 46.4M40.0 57.8L70.1 52.4M41.0 64.6L70.1 58.3M41.9 71.4L70.1 64.3M42.8 78.2L70.1 70.2" stroke="#10161c" stroke-width="2.20" fill="none" stroke-dasharray="3 6"/><polygon points="23.3,7.9 55.4,10.3 58.5,20.4 24.1,22.0" fill="#c6c4c8"/><polygon points="23.3,7.9 36.9,7.2 38.5,17.3 24.1,18.1" fill="#c89a60"/><polygon points="10.8,15.7 23.3,12.6 24.1,22.8 12.4,20.4" fill="#d6d2d4"/><path d="M41.3 17.3L43.7 86.8" stroke="#c89a60" stroke-width="2.4" fill="none"/><path d="M21.0 22.8L27.2 86.1" stroke="#c49860" stroke-width="2.6" fill="none"/><path d="M69.4 57.9L68.7 78.2" stroke="#c89a60" stroke-width="2" fill="none"/><path d="M42.9 59.5L69.4 57.9" stroke="#c89a60" stroke-width="2.2" fill="none"/><path d="M57.7 14.2L57.7 48.6" stroke="#dcdcde" stroke-width="1.4" fill="none"/><path d="M71.0 22.8L70.7 56.4" stroke="#e0e0e2" stroke-width="1.2" fill="none"/><polygon points="14.0,65.8 27.2,70.4 28.0,87.6 14.8,72.8" fill="#a08c92"/><circle cx="72" cy="14.8" r="8.2" fill="#1c1408" stroke="#b27c38" stroke-width="1.5"/><path d="M68 18.2 L67.2 13.2 L69.8 15 L72 11.4 L74.2 15 L76.8 13.2 L76 18.2 Z" fill="#eaa650"/></svg><div class="t" style="left:-10px;width:130px;text-align:center;top:419.5px;height:18px;line-height:18px;font-size:12px;color:#e2e2e2">居民楼</div><svg style="position:absolute;left:110px;top:327px;overflow:hidden" width="90" height="90" viewBox="0 0 90 90"><rect width="90" height="90" fill="#1c1c1c"/><polygon points="1.5,25.9 10.1,28.2 16.3,79.8 5.4,70.4" fill="#8a7a86"/><polygon points="10.1,28.2 28.8,22.0 52.2,18.9 89.0,17.3 89.0,48.6 80.4,61.1 66.3,65.8 28.8,78.2 16.3,79.8" fill="#1e2a36"/><path d="M12.2 33.1L87.4 20.7M13.0 39.1L87.4 24.4M13.7 45.1L87.4 28.1M14.4 51.1L87.4 31.8M15.1 57.1L87.5 35.5M15.8 63.1L87.5 39.3M16.6 69.1L87.5 43.0M17.3 75.2L87.5 46.7" stroke="#2a5e92" stroke-width="2.40" fill="none"/><path d="M12.6 36.2L87.4 22.6M13.3 42.2L87.4 26.3M14.1 48.2L87.4 30.0M14.8 54.2L87.5 33.7M15.5 60.2L87.5 37.4M16.2 66.2L87.5 41.2M16.9 72.2L87.5 44.9M17.7 78.2L87.5 48.6" stroke="#e4e2e0" stroke-width="0.90" fill="none"/><path d="M18.3 30.1L81.1 20.4M18.9 35.9L81.2 24.3M19.6 41.7L81.3 28.2M20.3 47.5L81.3 32.1M20.9 53.3L81.4 36.0M21.6 59.2L81.5 39.9M22.2 65.0L81.6 43.8M22.9 70.8L81.6 47.7" stroke="#10161c" stroke-width="1.80" fill="none" stroke-dasharray="2.4 5"/><polygon points="1.5,25.9 10.1,18.9 28.8,17.3 52.2,12.6 88.2,17.3 89.0,22.8 52.2,20.4 28.8,24.3 10.1,29.8" fill="#c9c7ca"/><polygon points="9.3,18.9 21.0,17.3 22.6,25.1 10.8,26.7" fill="#c89a60"/><polygon points="49.1,13.4 61.6,12.6 62.4,18.9 49.9,20.1" fill="#d8d6d8"/><path d="M24.1 26.7L28.8 78.2" stroke="#c89a60" stroke-width="2" fill="none"/><path d="M53.8 22.0L55.4 65.8" stroke="#b09070" stroke-width="2" fill="none"/><path d="M66.3 20.4L66.6 64.2" stroke="#c89a60" stroke-width="1.8" fill="none"/><path d="M46.0 23.6L46.8 72.0" stroke="#c89a60" stroke-width="1.4" fill="none"/><path d="M81.9 18.9L81.6 59.5" stroke="#c89a60" stroke-width="1.4" fill="none"/><polygon points="5.4,65.8 16.3,70.4 17.1,79.8 6.2,71.2" fill="#a08c92"/><circle cx="72" cy="14.8" r="8.2" fill="#1c1408" stroke="#b27c38" stroke-width="1.5"/><path d="M68 18.2 L67.2 13.2 L69.8 15 L72 11.4 L74.2 15 L76.8 13.2 L76 18.2 Z" fill="#eaa650"/></svg><div class="t" style="left:90px;width:130px;text-align:center;top:419.5px;height:18px;line-height:18px;font-size:12px;color:#e2e2e2">居民楼联排</div><svg style="position:absolute;left:210px;top:327px;overflow:hidden" width="90" height="90" viewBox="0 0 90 90"><rect width="90" height="90" fill="#1c1c1c"/><polygon points="6.9,4.8 27.3,4.8 27.3,75.9 10.8,73.6" fill="#d8d0b2"/><polygon points="10.1,59.8 27.3,61.7 27.3,75.9 10.8,73.6" fill="#b25a42"/><path d="M8.8 9.0L25.6 9.1M8.9 11.9L25.7 12.1M9.1 14.9L25.7 15.1M9.2 17.8L25.7 18.1M9.4 20.7L25.7 21.1M9.5 23.6L25.7 24.1M9.7 26.5L25.7 27.1M9.8 29.4L25.7 30.1M10.0 32.3L25.7 33.1M10.1 35.3L25.8 36.1M10.3 38.2L25.8 39.1M10.5 41.1L25.8 42.1M10.6 44.0L25.8 45.1M10.8 46.9L25.8 48.1M10.9 49.8L25.8 51.1M11.1 52.7L25.8 54.1M11.2 55.7L25.9 57.1M11.4 58.6L25.9 60.1M11.5 61.5L25.9 63.1M11.7 64.4L25.9 66.1M11.8 67.3L25.9 69.1M12.0 70.2L25.9 72.1" stroke="#2e2c2a" stroke-width="1.60" fill="none" stroke-dasharray="1.5 1.2"/><polygon points="6.9,4.8 13.2,1.7 22.6,2.5 27.3,4.8" fill="#e8e2cc"/><polygon points="29.6,7.2 51.5,7.9 52.3,82.6 31.2,78.2" fill="#d8d0b2"/><polygon points="30.8,64.0 52.1,67.7 52.3,82.6 31.2,78.2" fill="#b25a42"/><path d="M31.4 11.6L49.8 12.4M31.5 14.6L49.8 15.6M31.6 17.6L49.8 18.7M31.6 20.6L49.9 21.9M31.7 23.7L49.9 25.0M31.8 26.7L49.9 28.1M31.8 29.7L50.0 31.3M31.9 32.7L50.0 34.4M31.9 35.7L50.1 37.6M32.0 38.7L50.1 40.7M32.1 41.8L50.1 43.9M32.1 44.8L50.2 47.0M32.2 47.8L50.2 50.2M32.3 50.8L50.2 53.3M32.3 53.8L50.3 56.5M32.4 56.8L50.3 59.6M32.5 59.9L50.3 62.7M32.5 62.9L50.4 65.9M32.6 65.9L50.4 69.0M32.6 68.9L50.4 72.2M32.7 71.9L50.5 75.3M32.8 74.9L50.5 78.5" stroke="#2e2c2a" stroke-width="1.60" fill="none" stroke-dasharray="1.5 1.2"/><polygon points="29.6,7.2 36.6,3.2 46.0,4.0 51.5,7.9" fill="#e8e2cc"/><polygon points="53.0,10.3 77.3,10.3 75.7,88.4 54.1,82.6" fill="#d8d0b2"/><polygon points="53.9,68.2 76.0,72.8 75.7,88.4 54.1,82.6" fill="#b25a42"/><path d="M55.0 14.7L75.2 15.0M55.1 17.8L75.2 18.3M55.1 20.9L75.1 21.6M55.1 24.0L75.1 24.9M55.2 27.0L75.0 28.2M55.2 30.1L74.9 31.4M55.2 33.2L74.9 34.7M55.3 36.3L74.8 38.0M55.3 39.4L74.8 41.3M55.4 42.4L74.7 44.6M55.4 45.5L74.7 47.9M55.4 48.6L74.6 51.1M55.5 51.7L74.5 54.4M55.5 54.7L74.5 57.7M55.5 57.8L74.4 61.0M55.6 60.9L74.4 64.3M55.6 64.0L74.3 67.6M55.7 67.1L74.3 70.8M55.7 70.1L74.2 74.1M55.7 73.2L74.1 77.4M55.8 76.3L74.1 80.7M55.8 79.4L74.0 84.0" stroke="#2e2c2a" stroke-width="1.60" fill="none" stroke-dasharray="1.5 1.2"/><polygon points="53.0,10.3 64.8,6.4 77.3,7.9 77.3,10.3" fill="#e8e2cc"/><polygon points="77.3,10.3 82.7,11.1 78.8,88.4 75.7,88.4" fill="#f0ead6"/><path d="M28.0 6.4L29.6 77.5" stroke="#a89c80" stroke-width="1.6" fill="none"/><path d="M52.3 9.5L53.2 82.2" stroke="#a89c80" stroke-width="1.6" fill="none"/><path d="M17.1 4.0L18.7 75.1" stroke="#ece6d0" stroke-width="1.2" fill="none"/><path d="M40.5 5.6L41.6 80.6" stroke="#ece6d0" stroke-width="1.2" fill="none"/><path d="M64.8 8.7L65.1 85.4" stroke="#ece6d0" stroke-width="1.2" fill="none"/><circle cx="72" cy="14.8" r="8.2" fill="#1c1408" stroke="#b27c38" stroke-width="1.5"/><path d="M68 18.2 L67.2 13.2 L69.8 15 L72 11.4 L74.2 15 L76.8 13.2 L76 18.2 Z" fill="#eaa650"/></svg><div class="t" style="left:190px;width:130px;text-align:center;top:419.5px;height:18px;line-height:18px;font-size:12px;color:#e2e2e2">联排建筑</div><svg style="position:absolute;left:310px;top:327px;overflow:hidden" width="90" height="90" viewBox="0 0 90 90"><rect width="90" height="90" fill="#1c1c1c"/><polygon points="28.3,3.2 55.9,5.3 54.3,89.7 30.4,83.5" fill="#8a7472"/><polygon points="55.9,5.3 62.1,4.3 59.5,84.5 54.3,89.7" fill="#cfc7c3"/><polygon points="28.3,3.2 34.5,1.2 62.1,4.3 55.9,5.5" fill="#c4c8cc"/><path d="M36.1 10.5L37.1 84.5" stroke="#6c4c42" stroke-width="4.4" fill="none"/><path d="M47.0 11.6L47.3 87.2" stroke="#6c4c42" stroke-width="4.4" fill="none"/><path d="M29.2 7.6L55.0 9.8M29.3 9.8L54.9 12.1M29.3 12.0L54.9 14.4M29.4 14.2L54.9 16.7M29.4 16.4L54.8 19.0M29.5 18.6L54.8 21.3M29.5 20.8L54.8 23.6M29.6 23.0L54.7 25.9M29.7 25.2L54.7 28.2M29.7 27.4L54.6 30.5M29.8 29.6L54.6 32.8M29.8 31.8L54.6 35.1M29.9 34.0L54.5 37.4M29.9 36.2L54.5 39.8M30.0 38.4L54.4 42.1M30.0 40.6L54.4 44.4M30.1 42.8L54.4 46.7M30.1 45.0L54.3 49.0M30.2 47.2L54.3 51.3M30.3 49.4L54.2 53.6M30.3 51.6L54.2 55.9M30.4 53.8L54.2 58.2M30.4 56.0L54.1 60.5M30.5 58.2L54.1 62.8M30.5 60.4L54.0 65.1M30.6 62.6L54.0 67.4M30.6 64.8L54.0 69.7M30.7 67.0L53.9 72.0M30.7 69.2L53.9 74.3M30.8 71.3L53.8 76.6M30.8 73.5L53.8 78.9M30.9 75.7L53.8 81.2M31.0 77.9L53.7 83.5M31.0 80.1L53.7 85.8" stroke="#3c3030" stroke-width="1.00" fill="none" opacity="0.75"/><path d="M41.8 4.3L42.4 85.5" stroke="#9c8c90" stroke-width="1.4" fill="none"/><path d="M31.4 4.3L32.7 83.5" stroke="#a8989a" stroke-width="1.4" fill="none"/><path d="M52.8 5.9L52.3 88.7" stroke="#a8989a" stroke-width="1.4" fill="none"/><circle cx="72" cy="14.8" r="8.2" fill="#1c1408" stroke="#b27c38" stroke-width="1.5"/><path d="M68 18.2 L67.2 13.2 L69.8 15 L72 11.4 L74.2 15 L76.8 13.2 L76 18.2 Z" fill="#eaa650"/></svg><div class="t" style="left:290px;width:130px;text-align:center;top:419.5px;height:18px;line-height:18px;font-size:12px;color:#e2e2e2">住宅<span class="n">5</span></div><svg style="position:absolute;left:410px;top:327px;overflow:hidden" width="90" height="90" viewBox="0 0 90 90"><rect width="90" height="90" fill="#1c1c1c"/><polygon points="1.2,25.1 17.9,22.5 89.8,28.2 87.7,63.7 81.4,71.0 3.3,59.5" fill="#1c222c"/><path d="M1.6 33.7L83.3 39.1M2.0 38.8L83.1 45.2M2.3 44.0L83.0 51.4M2.6 49.2L82.8 57.6M3.0 54.3L82.6 63.8M3.3 59.5L82.5 69.9" stroke="#d6cac0" stroke-width="2.10" fill="none" stroke-dasharray="3.6 3"/><path d="M5.4 29.4L79.3 33.5M5.7 34.6L79.2 39.6M6.1 39.8L79.0 45.7M6.4 45.0L78.9 51.8M6.7 50.2L78.8 57.9M7.0 55.5L78.6 64.0" stroke="#3c4a40" stroke-width="2.00" fill="none" stroke-dasharray="2 5"/><polygon points="1.2,25.1 17.9,22.5 89.8,28.2 88.7,31.9 1.2,27.8" fill="#e6e2e4"/><polygon points="83.5,37.6 88.7,31.9 87.7,63.7 81.4,71.0" fill="#dccca0"/><polygon points="83.0,59.5 87.9,55.3 87.7,63.7 81.4,71.0" fill="#c88a6a"/><path d="M15.3 25.1L15.8 60.5" stroke="#a85432" stroke-width="2.8" fill="none"/><path d="M40.3 27.2L40.3 63.7" stroke="#a85432" stroke-width="2.8" fill="none"/><path d="M68.1 29.3L67.4 67.8" stroke="#a85432" stroke-width="2.8" fill="none"/><path d="M25.7 28.2L26.2 62.1" stroke="#dcd8da" stroke-width="1.2" fill="none"/><path d="M52.3 29.8L52.3 65.8" stroke="#dcd8da" stroke-width="1.2" fill="none"/><path d="M9.5 27.2L10.1 60.0" stroke="#dcd8da" stroke-width="1" fill="none"/><circle cx="72" cy="14.8" r="8.2" fill="#1c1408" stroke="#b27c38" stroke-width="1.5"/><path d="M68 18.2 L67.2 13.2 L69.8 15 L72 11.4 L74.2 15 L76.8 13.2 L76 18.2 Z" fill="#eaa650"/></svg><div class="t" style="left:390px;width:130px;text-align:center;top:419.5px;height:18px;line-height:18px;font-size:12px;color:#e2e2e2">六层小区</div><svg style="position:absolute;left:10px;top:449px;overflow:hidden" width="90" height="90" viewBox="0 0 90 90"><rect width="90" height="90" fill="#1c1c1c"/><polygon points="2.2,32.9 13.2,37.6 19.4,76.7 3.8,62.6" fill="#9c9286"/><polygon points="13.2,37.6 87.4,20.4 87.4,51.7 19.4,76.7" fill="#bcb2a4"/><polygon points="2.2,32.9 14.8,27.5 42.9,20.4 83.5,16.5 88.2,20.4 13.2,37.9" fill="#d0c8bc"/><path d="M18.8 43.9L83.0 27.5M19.8 50.9L83.1 33.2M20.9 57.8L83.2 38.9M21.9 64.8L83.2 44.6M23.0 71.7L83.3 50.3" stroke="#fff4d0" stroke-width="3.40" fill="none" stroke-dasharray="2.2 2.6"/><path d="M18.8 43.9L83.0 27.5M19.8 50.9L83.1 33.2M20.9 57.8L83.2 38.9M21.9 64.8L83.2 44.6M23.0 71.7L83.3 50.3" stroke="#5e564e" stroke-width="3.40" fill="none" stroke-dasharray="1 8.6"/><path d="M4.9 40.1L12.3 44.1M5.2 45.2L13.4 50.5M5.6 50.3L14.5 56.9M5.9 55.4L15.5 63.3M6.2 60.5L16.6 69.7" stroke="#f6ecc8" stroke-width="2.60" fill="none" stroke-dasharray="1.6 2.4"/><polygon points="15.5,27.5 22.6,22.8 40.5,18.9 45.2,25.1 23.3,30.6" fill="#dc8a4e"/><polygon points="52.2,18.9 57.7,14.2 63.2,15.7 64.7,20.4 58.5,22.0" fill="#dc8a4e"/><path d="M38.2 32.2L41.3 68.1" stroke="#d8d0c4" stroke-width="1.6" fill="none"/><path d="M58.5 27.5L60.1 61.1" stroke="#d8d0c4" stroke-width="1.6" fill="none"/><path d="M74.1 23.6L74.9 55.6" stroke="#d8d0c4" stroke-width="1.6" fill="none"/><circle cx="72" cy="14.8" r="8.2" fill="#1c1408" stroke="#b27c38" stroke-width="1.5"/><path d="M68 18.2 L67.2 13.2 L69.8 15 L72 11.4 L74.2 15 L76.8 13.2 L76 18.2 Z" fill="#eaa650"/></svg><div class="t" style="left:-10px;width:130px;text-align:center;top:541.5px;height:18px;line-height:18px;font-size:12px;color:#e2e2e2">居民<span class="n">A-5</span></div><svg style="position:absolute;left:110px;top:449px;overflow:hidden" width="90" height="90" viewBox="0 0 90 90"><rect width="90" height="90" fill="#1c1c1c"/><polygon points="2.2,11.8 5.4,8.7 81.9,8.7 87.4,12.6 85.1,81.4 74.1,86.1 5.4,77.5" fill="#8f8579"/><polygon points="13.2,8.7 16.3,3.6 33.5,3.6 35.8,8.7" fill="#dc8a4e"/><polygon points="50.7,8.7 53.0,4.0 74.1,4.0 75.7,8.7" fill="#dc8a4e"/><path d="M6.5 17.3L83.3 18.5M6.6 22.9L83.1 24.5M6.8 28.6L83.0 30.6M7.0 34.2L82.9 36.7M7.2 39.8L82.8 42.7M7.4 45.4L82.6 48.8M7.6 51.0L82.5 54.8M7.8 56.7L82.4 60.9M8.0 62.3L82.3 67.0M8.2 67.9L82.2 73.0M8.4 73.5L82.0 79.1" stroke="#fff2c4" stroke-width="2.60" fill="none" stroke-dasharray="2.6 3.1"/><path d="M8.1 17.3L81.6 18.4M8.3 23.0L81.5 24.5M8.5 28.6L81.4 30.5M8.6 34.2L81.3 36.6M8.8 39.9L81.2 42.7M9.0 45.5L81.0 48.7M9.2 51.1L80.9 54.8M9.4 56.8L80.8 60.8M9.6 62.4L80.7 66.9M9.7 68.0L80.6 72.9M9.9 73.6L80.5 79.0" stroke="#3a3632" stroke-width="2.60" fill="none" stroke-dasharray="1.6 9.8"/><path d="M21.0 11.1L22.9 79.0" stroke="#b4aa9c" stroke-width="1.8" fill="none"/><path d="M60.8 11.8L61.6 84.5" stroke="#b4aa9c" stroke-width="1.8" fill="none"/><path d="M84.3 12.6L82.7 82.2" stroke="#c4baac" stroke-width="2" fill="none"/><path d="M41.3 11.8L42.1 81.4" stroke="#a0968a" stroke-width="1.2" fill="none"/><circle cx="72" cy="14.8" r="8.2" fill="#1c1408" stroke="#b27c38" stroke-width="1.5"/><path d="M68 18.2 L67.2 13.2 L69.8 15 L72 11.4 L74.2 15 L76.8 13.2 L76 18.2 Z" fill="#eaa650"/></svg><div class="t" style="left:90px;width:130px;text-align:center;top:541.5px;height:18px;line-height:18px;font-size:12px;color:#e2e2e2">居民<span class="n">A-11</span></div><svg style="position:absolute;left:210px;top:449px;overflow:hidden" width="90" height="90" viewBox="0 0 90 90"><rect width="90" height="90" fill="#1c1c1c"/><polygon points="12.4,9.5 17.9,6.4 67.9,4.8 72.6,11.1 71.0,76.7 22.6,89.2 16.3,86.1" fill="#b4aa98"/><polygon points="21.8,7.2 22.6,3.2 37.4,2.5 39.0,6.4" fill="#dc8a4e"/><polygon points="49.1,4.8 51.5,0.9 64.8,0.4 66.3,4.5" fill="#dc8a4e"/><path d="M17.3 15.4L69.5 14.7M17.6 19.4L69.4 18.1M17.8 23.4L69.4 21.6M18.0 27.4L69.4 25.0M18.2 31.4L69.3 28.5M18.5 35.5L69.3 32.0M18.7 39.5L69.3 35.4M18.9 43.5L69.3 38.9M19.2 47.5L69.2 42.3M19.4 51.5L69.2 45.8M19.6 55.5L69.2 49.2M19.9 59.5L69.1 52.7M20.1 63.5L69.1 56.1M20.3 67.6L69.1 59.6M20.6 71.6L69.1 63.1M20.8 75.6L69.0 66.5M21.0 79.6L69.0 70.0M21.3 83.6L69.0 73.4" stroke="#2c2824" stroke-width="2.10" fill="none" stroke-dasharray="2.2 1.6"/><path d="M17.9 15.4L68.9 14.7M18.1 19.4L68.9 18.2M18.3 23.4L68.8 21.6M18.6 27.4L68.8 25.1M18.8 31.4L68.8 28.5M19.0 35.4L68.8 32.0M19.3 39.4L68.7 35.5M19.5 43.4L68.7 38.9M19.7 47.4L68.7 42.4M19.9 51.4L68.7 45.8M20.2 55.4L68.6 49.3M20.4 59.5L68.6 52.8M20.6 63.5L68.6 56.2M20.9 67.5L68.6 59.7M21.1 71.5L68.5 63.1M21.3 75.5L68.5 66.6M21.5 79.5L68.5 70.1M21.8 83.5L68.5 73.5" stroke="#f8e8a4" stroke-width="1.70" fill="none" stroke-dasharray="1.6 6"/><path d="M32.7 9.5L35.1 85.3" stroke="#d2c8b6" stroke-width="1.6" fill="none"/><path d="M47.6 8.7L49.1 82.2" stroke="#d2c8b6" stroke-width="1.6" fill="none"/><path d="M60.8 7.9L61.6 79.0" stroke="#d2c8b6" stroke-width="1.6" fill="none"/><circle cx="72" cy="14.8" r="8.2" fill="#1c1408" stroke="#b27c38" stroke-width="1.5"/><path d="M68 18.2 L67.2 13.2 L69.8 15 L72 11.4 L74.2 15 L76.8 13.2 L76 18.2 Z" fill="#eaa650"/></svg><div class="t" style="left:190px;width:130px;text-align:center;top:541.5px;height:18px;line-height:18px;font-size:12px;color:#e2e2e2">居民<span class="n">A-18</span></div><svg style="position:absolute;left:310px;top:449px;overflow:hidden" width="90" height="90" viewBox="0 0 90 90"><rect width="90" height="90" fill="#1c1c1c"/><polygon points="21.5,8.5 67.9,7.4 66.8,81.4 24.1,82.4" fill="#cdb888"/><polygon points="21.5,8.5 67.9,7.4 67.7,22.2 22.0,23.3" fill="#dedee2"/><polygon points="23.7,70.6 67.0,69.5 66.8,81.4 24.1,82.4" fill="#6e2a20"/><path d="M26.3 13.7L63.2 12.9M26.4 17.0L63.2 16.2M26.5 20.3L63.1 19.5M26.6 23.6L63.1 22.8M26.7 26.9L63.1 26.1M26.8 30.3L63.0 29.4M26.9 33.6L63.0 32.7M27.0 36.9L63.0 36.0M27.1 40.2L62.9 39.4M27.2 43.5L62.9 42.7M27.3 46.8L62.9 46.0M27.4 50.1L62.9 49.3M27.5 53.4L62.8 52.6M27.6 56.7L62.8 55.9M27.7 60.1L62.8 59.2M27.8 63.4L62.7 62.5M27.9 66.7L62.7 65.8M28.0 70.0L62.7 69.2M28.1 73.3L62.6 72.5M28.2 76.6L62.6 75.8M28.3 79.9L62.6 79.1" stroke="#1a1c24" stroke-width="1.70" fill="none" stroke-dasharray="1.7 1.5"/><path d="M49.1 8.5L50.2 84.5" stroke="#8a7a5a" stroke-width="1.6" fill="none"/><polygon points="26.2,8.5 31.4,4.3 38.7,4.8 38.7,8.5" fill="#d4d4d8"/><polygon points="48.1,7.9 48.6,3.8 56.4,3.8 58.5,7.9" fill="#d4d4d8"/><polygon points="24.1,82.4 66.8,81.4 51.2,85.5 35.6,88.7" fill="#5c2018"/><circle cx="72" cy="14.8" r="8.2" fill="#1c1408" stroke="#b27c38" stroke-width="1.5"/><path d="M68 18.2 L67.2 13.2 L69.8 15 L72 11.4 L74.2 15 L76.8 13.2 L76 18.2 Z" fill="#eaa650"/></svg><div class="t" style="left:290px;width:130px;text-align:center;top:541.5px;height:18px;line-height:18px;font-size:12px;color:#e2e2e2"><span class="n">19</span>层住宅<span class="n">A</span></div><svg style="position:absolute;left:410px;top:449px;overflow:hidden" width="90" height="90" viewBox="0 0 90 90"><rect width="90" height="90" fill="#1c1c1c"/><polygon points="29.9,8.5 60.6,9.0 58.5,85.5 31.4,83.5" fill="#cdb888"/><polygon points="29.9,8.5 60.6,9.0 60.2,24.3 30.2,23.5" fill="#dedee2"/><polygon points="31.2,71.5 58.8,73.3 58.5,85.5 31.4,83.5" fill="#8a4030"/><path d="M33.0 14.0L57.4 14.5M33.1 17.3L57.3 17.9M33.1 20.7L57.2 21.3M33.2 24.0L57.2 24.7M33.2 27.4L57.1 28.1M33.3 30.8L57.0 31.6M33.3 34.1L56.9 35.0M33.4 37.5L56.8 38.4M33.4 40.9L56.8 41.8M33.5 44.2L56.7 45.2M33.6 47.6L56.6 48.7M33.6 51.0L56.5 52.1M33.7 54.3L56.5 55.5M33.7 57.7L56.4 58.9M33.8 61.0L56.3 62.3M33.8 64.4L56.2 65.8M33.9 67.8L56.2 69.2M33.9 71.1L56.1 72.6M34.0 74.5L56.0 76.0M34.0 77.9L55.9 79.4M34.1 81.2L55.8 82.9" stroke="#1a1c24" stroke-width="1.70" fill="none" stroke-dasharray="1.7 1.5"/><polygon points="38.7,8.5 39.8,3.8 47.0,3.8 49.1,8.5" fill="#d4d4d8"/><polygon points="31.4,83.5 58.5,85.5 42.9,89.7" fill="#7a3626"/><circle cx="72" cy="14.8" r="8.2" fill="#1c1408" stroke="#b27c38" stroke-width="1.5"/><path d="M68 18.2 L67.2 13.2 L69.8 15 L72 11.4 L74.2 15 L76.8 13.2 L76 18.2 Z" fill="#eaa650"/></svg><div class="t" style="left:390px;width:130px;text-align:center;top:541.5px;height:18px;line-height:18px;font-size:12px;color:#e2e2e2"><span class="n">19</span>层住宅<span class="n">B</span></div><svg style="position:absolute;left:10px;top:571px;overflow:hidden" width="90" height="90" viewBox="0 0 90 90"><rect width="90" height="90" fill="#1c1c1c"/><polygon points="31.0,6.0 46.0,3.0 61.0,8.0 61.0,30.0 31.0,30.0" fill="#34343a"/><path d="M33 9H60M33 13H60M33 17H60" stroke="#8a8a92" stroke-width="1" stroke-dasharray="2 1.4"/><polygon points="42.0,2.0 52.0,1.0 54.0,5.0 44.0,6.0" fill="#c8c8cc"/><circle cx="72" cy="14.8" r="8.2" fill="#1c1408" stroke="#b27c38" stroke-width="1.5"/><path d="M68 18.2 L67.2 13.2 L69.8 15 L72 11.4 L74.2 15 L76.8 13.2 L76 18.2 Z" fill="#eaa650"/></svg><svg style="position:absolute;left:110px;top:571px;overflow:hidden" width="90" height="90" viewBox="0 0 90 90"><rect width="90" height="90" fill="#1c1c1c"/><polygon points="15.0,8.0 30.0,2.0 55.0,4.0 73.0,12.0 73.0,30.0 15.0,30.0" fill="#a4acb4"/><path d="M17 12V30M21 12V30M25 12V30M29 12V30M33 13V30M37 13V30M41 13V30M45 14V30M49 14V30M53 14V30M57 15V30M61 15V30M65 15V30" stroke="#5a626a" stroke-width="1.4"/><polygon points="22.0,3.0 52.0,2.0 70.0,9.0 40.0,9.0" fill="#d0d4d8"/><circle cx="72" cy="14.8" r="8.2" fill="#1c1408" stroke="#b27c38" stroke-width="1.5"/><path d="M68 18.2 L67.2 13.2 L69.8 15 L72 11.4 L74.2 15 L76.8 13.2 L76 18.2 Z" fill="#eaa650"/></svg><svg style="position:absolute;left:210px;top:571px;overflow:hidden" width="90" height="90" viewBox="0 0 90 90"><rect width="90" height="90" fill="#1c1c1c"/><polygon points="26.0,6.0 50.0,4.0 67.0,8.0 67.0,30.0 26.0,30.0" fill="#56666e"/><polygon points="50.0,4.0 56.0,4.5 56.0,30.0 50.0,30.0" fill="#c4ccd0"/><path d="M28 10H49M28 14H49M28 18H49" stroke="#8aa0a8" stroke-width="1"/><circle cx="72" cy="14.8" r="8.2" fill="#1c1408" stroke="#b27c38" stroke-width="1.5"/><path d="M68 18.2 L67.2 13.2 L69.8 15 L72 11.4 L74.2 15 L76.8 13.2 L76 18.2 Z" fill="#eaa650"/></svg><svg style="position:absolute;left:310px;top:571px;overflow:hidden" width="90" height="90" viewBox="0 0 90 90"><rect width="90" height="90" fill="#1c1c1c"/><polygon points="26.0,6.0 45.0,2.0 66.0,7.0 66.0,30.0 26.0,30.0" fill="#dcdcdc"/><polygon points="30.0,11.0 44.0,11.0 44.0,30.0 30.0,30.0" fill="#2a4a52"/><polygon points="48.0,9.0 62.0,12.0 62.0,30.0 48.0,30.0" fill="#3c6068"/><path d="M26 10L66 13M26 16L66 18" stroke="#f0f0f0" stroke-width="1.6"/><circle cx="72" cy="14.8" r="8.2" fill="#1c1408" stroke="#b27c38" stroke-width="1.5"/><path d="M68 18.2 L67.2 13.2 L69.8 15 L72 11.4 L74.2 15 L76.8 13.2 L76 18.2 Z" fill="#eaa650"/></svg><svg style="position:absolute;left:410px;top:571px;overflow:hidden" width="90" height="90" viewBox="0 0 90 90"><rect width="90" height="90" fill="#1c1c1c"/><path d="M11 10L45 4L84 9L84 22M11 10V24M30 7V24M60 6V22M11 16L84 15" stroke="#dcdcdc" stroke-width="1.6" fill="none"/><polygon points="40.0,7.0 60.0,6.0 60.0,18.0 40.0,18.0" fill="#c8c8cc"/><circle cx="72" cy="14.8" r="8.2" fill="#1c1408" stroke="#b27c38" stroke-width="1.5"/><path d="M68 18.2 L67.2 13.2 L69.8 15 L72 11.4 L74.2 15 L76.8 13.2 L76 18.2 Z" fill="#eaa650"/></svg></div>
<div style="left:440px;top:131px;width:40px;height:24px;background:#0587ff;border-radius:3px;"></div><div class="t" style="top:134.5px;height:18px;line-height:18px;font-size:12px;color:#ffffff;font-weight:500;left:260.0px;width:400px;text-align:center;">全部</div><div style="left:492px;top:131px;width:64px;height:24px;background:#1c1c1e;border-radius:3px;"></div><div class="t" style="top:134.5px;height:18px;line-height:18px;font-size:12px;color:#e0e0e0;left:324.0px;width:400px;text-align:center;">住宅建筑</div><div style="left:568px;top:131px;width:64px;height:24px;background:#1c1c1e;border-radius:3px;"></div><div class="t" style="top:134.5px;height:18px;line-height:18px;font-size:12px;color:#e0e0e0;left:400.0px;width:400px;text-align:center;">商业建筑</div><div style="left:644px;top:131px;width:64px;height:24px;background:#1c1c1e;border-radius:3px;"></div><div class="t" style="top:134.5px;height:18px;line-height:18px;font-size:12px;color:#e0e0e0;left:476.0px;width:400px;text-align:center;">工厂建筑</div><div style="left:720px;top:131px;width:64px;height:24px;background:#1c1c1e;border-radius:3px;"></div><div class="t" style="top:134.5px;height:18px;line-height:18px;font-size:12px;color:#e0e0e0;left:552.0px;width:400px;text-align:center;">公共建筑</div><div style="left:796px;top:131px;width:64px;height:24px;background:#1c1c1e;border-radius:3px;"></div><div class="t" style="top:134.5px;height:18px;line-height:18px;font-size:12px;color:#e0e0e0;left:628.0px;width:400px;text-align:center;">公共设备</div><div style="left:872px;top:131px;width:52px;height:24px;background:#1c1c1e;border-radius:3px;"></div><div class="t" style="top:134.5px;height:18px;line-height:18px;font-size:12px;color:#e0e0e0;left:698.0px;width:400px;text-align:center;">构筑物</div><div style="left:440px;top:163px;width:64px;height:24px;background:#1c1c1e;border-radius:3px;"></div><div class="t" style="top:166.5px;height:18px;line-height:18px;font-size:12px;color:#e0e0e0;left:272.0px;width:400px;text-align:center;">其他建筑</div><div style="left:516px;top:163px;width:64px;height:24px;background:#1c1c1e;border-radius:3px;"></div><div class="t" style="top:166.5px;height:18px;line-height:18px;font-size:12px;color:#e0e0e0;left:348.0px;width:400px;text-align:center;">工业建筑</div>
<div style="left:1619px;top:77px;width:301px;height:915px;background:#141416;"></div><div style="left:1619px;top:77px;width:1px;height:915px;background:#222225;"></div><div style="left:1620px;top:115px;width:300px;height:1px;background:#222225;"></div><svg style="position:absolute;left:1633px;top:89.5px;" width="10" height="13" viewBox="0 0 10 13"><path d="M0.6 1.6 Q0.6 0.6 1.6 0.6 H8.4 Q9.4 0.6 9.4 1.6 V11.4 Q9.4 12.4 8.4 12.4 H1.6 Q0.6 12.4 0.6 11.4 Z M2.5 4 H7.5 M2.5 6.5 H7.5 M2.5 9 H7.5 M3.8 2.5 V10.5" stroke="#a8a8a8" stroke-width="1" fill="none"/></svg><div class="t" style="top:88.5px;height:18px;line-height:18px;font-size:12px;color:#a8a8a8;left:1646px;"><span class="n">3D</span>空场景</div><svg style="position:absolute;left:1698px;top:92px;" width="6" height="10" viewBox="0 0 6 10"><path d="M0.7 0.7 L5 5 L0.7 9.3" fill="none" stroke="#8c8c8c" stroke-width="1.2"/></svg><div class="t" style="top:87.5px;height:18px;line-height:18px;font-size:12px;color:#ffffff;font-weight:500;left:1707px;">场景</div><div class="t" style="top:125.0px;height:18px;line-height:18px;font-size:12px;color:#f2f2f2;font-weight:500;left:1638px;">样式</div><div class="t" style="top:125.0px;height:18px;line-height:18px;font-size:12px;color:#f2f2f2;font-weight:500;left:1678px;">交互</div><div class="t" style="top:125.0px;height:18px;line-height:18px;font-size:12px;color:#f2f2f2;font-weight:500;left:1718px;">数据</div><div class="t" style="top:125.0px;height:18px;line-height:18px;font-size:12px;color:#f2f2f2;font-weight:500;left:1758px;">代码</div><div style="left:1670px;top:150px;width:40px;height:2px;background:#0587ff;"></div><div style="left:1824px;top:122px;width:80px;height:24px;background:#232325;border-radius:3px;"></div><div class="t" style="top:125.5px;height:18px;line-height:18px;font-size:12px;color:#f2f2f2;font-weight:500;left:1832px;">默认状态</div><svg style="position:absolute;left:1886px;top:131.5px;" width="11" height="6" viewBox="0 0 11 6"><path d="M0.7 0.7 L5.5 5 L10.3 0.7" fill="none" stroke="#e0e0e0" stroke-width="1.5"/></svg><div style="left:1620px;top:153px;width:300px;height:36px;background:#1e1e1e;"></div><div class="t" style="top:162.5px;height:18px;line-height:18px;font-size:12px;color:#f0f0f0;font-weight:500;left:1636px;">交互设置</div><div style="left:1900px;top:162.8px;width:3px;height:3px;background:#e0e0e0;border-radius:50%;"></div><div style="left:1900px;top:168.20000000000002px;width:3px;height:3px;background:#e0e0e0;border-radius:50%;"></div><div style="left:1900px;top:173.60000000000002px;width:3px;height:3px;background:#e0e0e0;border-radius:50%;"></div><div style="left:1639px;top:202px;width:257px;height:32px;background:#0587ff;border-radius:3px;"></div><svg style="position:absolute;left:1734px;top:213px;" width="11" height="11" viewBox="0 0 11 11"><path d="M5.5 0 V11 M0 5.5 H11" stroke="#fff" stroke-width="1.1" fill="none"/></svg><div class="t" style="top:209.0px;height:20px;line-height:20px;font-size:14px;color:#ffffff;left:1747px;">添加交互</div>
<svg style="position:absolute;left:0;top:0;pointer-events:none" width="1920" height="1032" viewBox="0 0 1920 1032"><rect x="188.7" y="164.5" width="149.6" height="70.8" rx="6" fill="none" stroke="#f24a4a" stroke-width="4"/><rect x="329" y="381.8" width="73.4" height="34.6" rx="4.5" fill="none" stroke="#f24a4a" stroke-width="3.6"/><path d="M586.6 70.4 L588.9 75.6 L376.3 164.9 L377.8 171.2 Q378.2 174.6 374.6 174 L343.2 169.5 Q340.4 168.9 342.2 166.8 L363.2 144.4 Q365.2 142.6 366 145.2 L368 151 Z" fill="#f24a4a"/><path d="M250.4 251.8 Q251.2 248.6 254 248.6 L326.9 344.7 L331.4 341.4 Q333.6 339.8 334 342.6 L338.8 372.2 Q339.2 375.6 336.2 374 L309.4 358.6 Q307.2 357.2 309.6 356 L314.4 353.8 Z" fill="#f24a4a"/></svg>
</body></html>
